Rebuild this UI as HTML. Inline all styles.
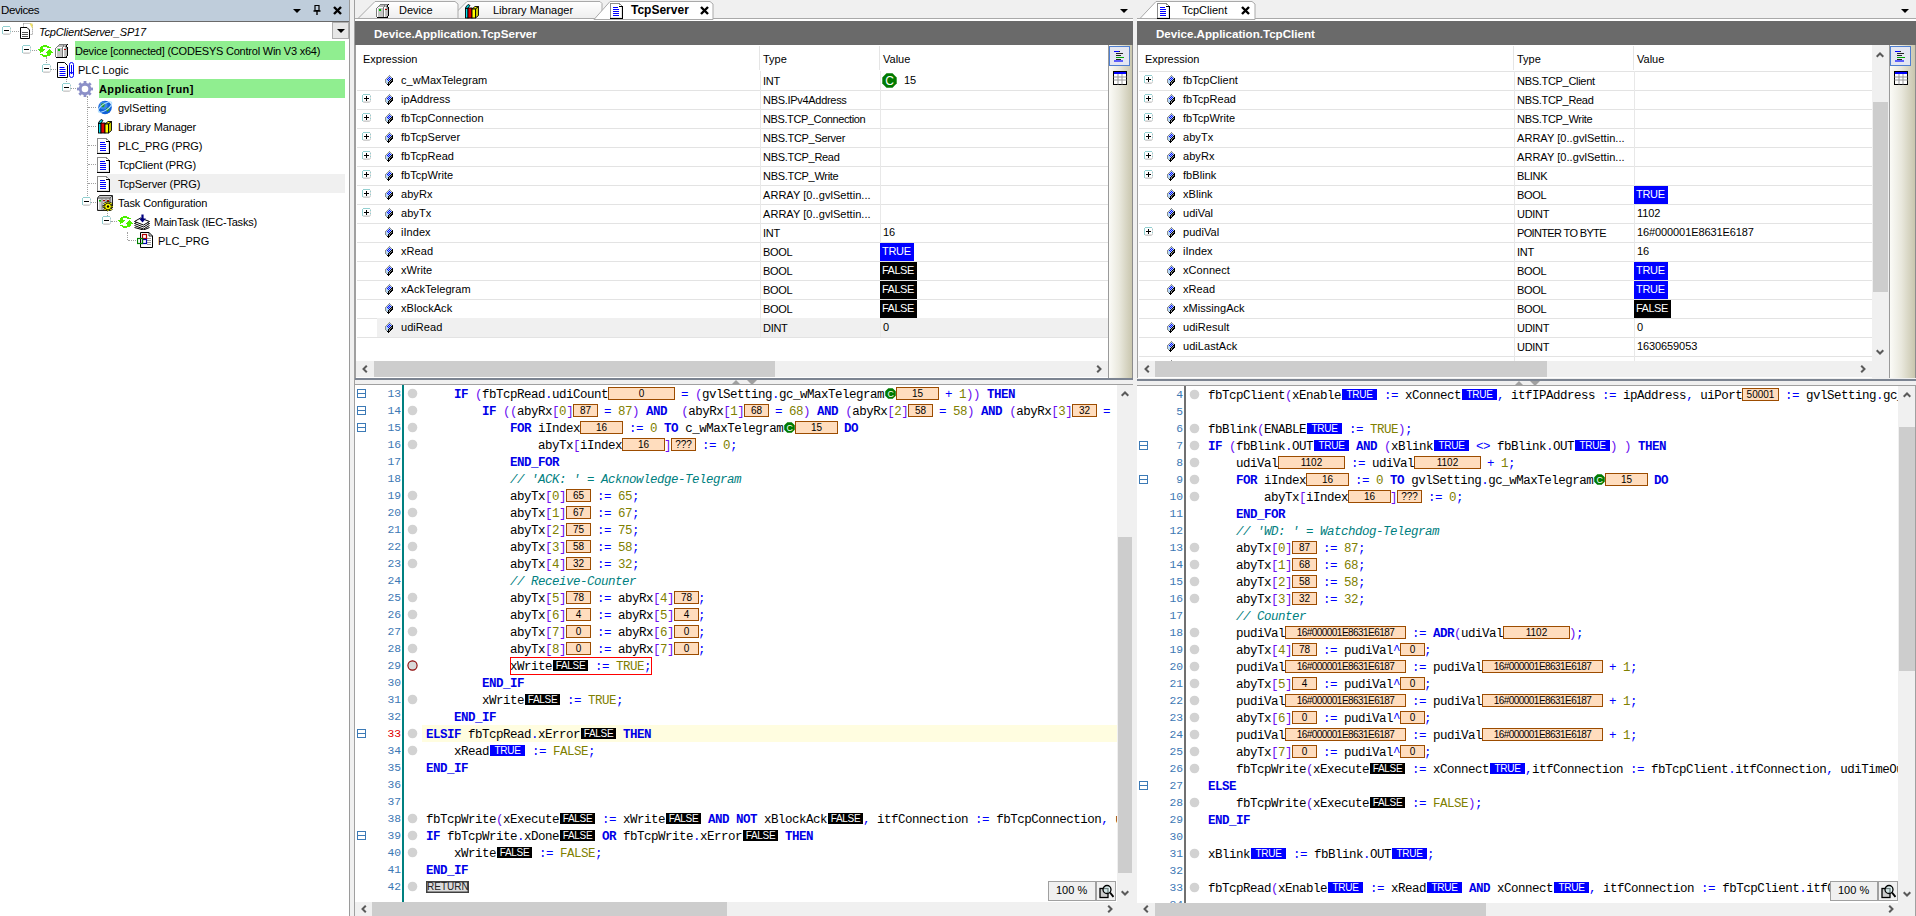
<!DOCTYPE html><html><head><meta charset="utf-8"><style>body{margin:0;width:1916px;height:916px;overflow:hidden;position:relative;background:#F0F0F0;font-family:"Liberation Sans",sans-serif;font-size:11px;color:#000}
div{position:absolute;box-sizing:border-box}
.t{white-space:pre}
.c{white-space:pre;font-family:"Liberation Mono",monospace;font-size:12.5px;letter-spacing:-0.5px;line-height:17px;height:17px;padding-top:2px}
.ob{height:13px;background:#FFDDBE;border:1px solid #9C4C00;font-size:10px;line-height:11px;text-align:center;color:#000;white-space:pre;overflow:hidden}
.bb{width:35px;height:11px;color:#fff;font-size:10px;line-height:11px;text-align:center;letter-spacing:-0.3px}
</style></head><body><div style="left:0px;top:0px;width:349px;height:21px;background:#BFCDDB"></div>
<div class="t" style="left:1px;top:0px;height:21px;line-height:21px;font-size:11.5px;letter-spacing:-0.4px;color:#000">Devices</div>
<svg style="position:absolute;left:293px;top:9px;" width="8" height="5" viewBox="0 0 8 5"><path d="M0 0 H8 L4.0 4 Z" fill="#000"/></svg>
<svg style="position:absolute;left:313px;top:5px;" width="8" height="10" viewBox="0 0 8 10"><path d="M2 0.5 H6 V5.5 H2 Z" fill="none" stroke="#000" stroke-width="1.2"/><path d="M0.5 6 H7.5 M4 6 V10" stroke="#000" stroke-width="1.4"/></svg>
<svg style="position:absolute;left:333px;top:6px;" width="9" height="9" viewBox="0 0 9 9"><path d="M1 1 L8 8 M8 1 L1 8" stroke="#000" stroke-width="2.4"/></svg>
<div style="left:0px;top:21px;width:350px;height:1px;background:#6A6A6A"></div>
<div style="left:0px;top:22px;width:349px;height:894px;background:#fff"></div>
<div style="left:349px;top:0px;width:1px;height:916px;background:#9A9A9A"></div>
<div style="left:332px;top:22px;width:17px;height:17px;background:#E6E6E6;border:1px solid #ADADAD"></div>
<svg style="position:absolute;left:337px;top:29px;" width="8" height="5" viewBox="0 0 8 5"><path d="M0 0 H8 L4.0 4 Z" fill="#000"/></svg>
<div style="left:10px;top:31px;width:9px;height:1px;border-top:1px dotted #A0A0A0"></div>
<div style="left:26px;top:36px;width:1px;height:0px;"></div>
<div style="left:30px;top:50px;width:7px;height:1px;border-top:1px dotted #A0A0A0"></div>
<div style="left:46px;top:57px;width:1px;height:8px;border-left:1px dotted #A0A0A0"></div>
<div style="left:50px;top:69px;width:6px;height:1px;border-top:1px dotted #A0A0A0"></div>
<div style="left:66px;top:76px;width:1px;height:8px;border-left:1px dotted #A0A0A0"></div>
<div style="left:70px;top:88px;width:6px;height:1px;border-top:1px dotted #A0A0A0"></div>
<div style="left:87px;top:96px;width:1px;height:102px;border-left:1px dotted #A0A0A0"></div>
<div style="left:88px;top:107px;width:8px;height:1px;border-top:1px dotted #A0A0A0"></div>
<div style="left:88px;top:126px;width:8px;height:1px;border-top:1px dotted #A0A0A0"></div>
<div style="left:88px;top:145px;width:8px;height:1px;border-top:1px dotted #A0A0A0"></div>
<div style="left:88px;top:164px;width:8px;height:1px;border-top:1px dotted #A0A0A0"></div>
<div style="left:88px;top:183px;width:8px;height:1px;border-top:1px dotted #A0A0A0"></div>
<div style="left:91px;top:202px;width:5px;height:1px;border-top:1px dotted #A0A0A0"></div>
<div style="left:107px;top:210px;width:1px;height:6px;border-left:1px dotted #A0A0A0"></div>
<div style="left:111px;top:221px;width:6px;height:1px;border-top:1px dotted #A0A0A0"></div>
<div style="left:127px;top:232px;width:1px;height:8px;border-left:1px dotted #A0A0A0"></div>
<div style="left:128px;top:240px;width:8px;height:1px;border-top:1px dotted #A0A0A0"></div>
<svg style="position:absolute;left:2px;top:26px;shape-rendering:crispEdges" width="9" height="9" viewBox="0 0 9 9"><rect x="1" y="0" width="7" height="1" fill="#92CFD0"/><rect x="0" y="1" width="1" height="1" fill="#92CFD0"/><rect x="1" y="1" width="7" height="1" fill="#FFFFFF"/><rect x="8" y="1" width="1" height="1" fill="#DADADA"/><rect x="0" y="2" width="1" height="1" fill="#92CFD0"/><rect x="1" y="2" width="7" height="1" fill="#FFFFFF"/><rect x="8" y="2" width="1" height="1" fill="#92CFD0"/><rect x="0" y="3" width="1" height="1" fill="#92CFD0"/><rect x="1" y="3" width="7" height="1" fill="#FFFFFF"/><rect x="8" y="3" width="1" height="1" fill="#DADADA"/><rect x="0" y="4" width="1" height="1" fill="#92CFD0"/><rect x="1" y="4" width="7" height="1" fill="#FFFFFF"/><rect x="8" y="4" width="1" height="1" fill="#DADADA"/><rect x="0" y="5" width="1" height="1" fill="#92CFD0"/><rect x="1" y="5" width="7" height="1" fill="#FFFFFF"/><rect x="8" y="5" width="1" height="1" fill="#92CFD0"/><rect x="0" y="6" width="1" height="1" fill="#92CFD0"/><rect x="1" y="6" width="7" height="1" fill="#FFFFFF"/><rect x="8" y="6" width="1" height="1" fill="#DADADA"/><rect x="0" y="7" width="1" height="1" fill="#92CFD0"/><rect x="1" y="7" width="7" height="1" fill="#E2E2E2"/><rect x="8" y="7" width="1" height="1" fill="#DADADA"/><rect x="1" y="8" width="1" height="1" fill="#DADADA"/><rect x="2" y="8" width="5" height="1" fill="#CFCFCF"/><rect x="7" y="8" width="1" height="1" fill="#DADADA"/></svg>
<svg style="position:absolute;left:2px;top:26px;shape-rendering:crispEdges" width="9" height="9" viewBox="0 0 9 9"><path d="M2 4.5 H7" stroke="#000" stroke-width="1"/></svg>
<svg style="position:absolute;left:20px;top:23px;" width="13" height="16" viewBox="0 0 13 16"><path d="M3.5 0.5 H11 L12.5 2 V11.5 H3.5 Z" fill="#fff" stroke="#888" stroke-dasharray="1 1"/><path d="M9.5 0.5 L12.5 0.5 L12.5 6 Z" fill="#F0E060"/><path d="M0.5 4.5 H7 L9.5 7 V15.5 H0.5 Z" fill="#fff" stroke="#000"/><path d="M2 9.5h6M2 11.5h6M2 13.5h6" stroke="#555"/></svg>
<div class="t" style="left:39px;top:23px;height:19px;line-height:19px;font-style:italic;letter-spacing:-0.2px">TcpClientServer_SP17</div>
<svg style="position:absolute;left:22px;top:45px;shape-rendering:crispEdges" width="9" height="9" viewBox="0 0 9 9"><rect x="1" y="0" width="7" height="1" fill="#92CFD0"/><rect x="0" y="1" width="1" height="1" fill="#92CFD0"/><rect x="1" y="1" width="7" height="1" fill="#FFFFFF"/><rect x="8" y="1" width="1" height="1" fill="#DADADA"/><rect x="0" y="2" width="1" height="1" fill="#92CFD0"/><rect x="1" y="2" width="7" height="1" fill="#FFFFFF"/><rect x="8" y="2" width="1" height="1" fill="#92CFD0"/><rect x="0" y="3" width="1" height="1" fill="#92CFD0"/><rect x="1" y="3" width="7" height="1" fill="#FFFFFF"/><rect x="8" y="3" width="1" height="1" fill="#DADADA"/><rect x="0" y="4" width="1" height="1" fill="#92CFD0"/><rect x="1" y="4" width="7" height="1" fill="#FFFFFF"/><rect x="8" y="4" width="1" height="1" fill="#DADADA"/><rect x="0" y="5" width="1" height="1" fill="#92CFD0"/><rect x="1" y="5" width="7" height="1" fill="#FFFFFF"/><rect x="8" y="5" width="1" height="1" fill="#92CFD0"/><rect x="0" y="6" width="1" height="1" fill="#92CFD0"/><rect x="1" y="6" width="7" height="1" fill="#FFFFFF"/><rect x="8" y="6" width="1" height="1" fill="#DADADA"/><rect x="0" y="7" width="1" height="1" fill="#92CFD0"/><rect x="1" y="7" width="7" height="1" fill="#E2E2E2"/><rect x="8" y="7" width="1" height="1" fill="#DADADA"/><rect x="1" y="8" width="1" height="1" fill="#DADADA"/><rect x="2" y="8" width="5" height="1" fill="#CFCFCF"/><rect x="7" y="8" width="1" height="1" fill="#DADADA"/></svg>
<svg style="position:absolute;left:22px;top:45px;shape-rendering:crispEdges" width="9" height="9" viewBox="0 0 9 9"><path d="M2 4.5 H7" stroke="#000" stroke-width="1"/></svg>
<svg style="position:absolute;left:38px;top:45px;shape-rendering:crispEdges" width="15" height="12" viewBox="0 0 15 12"><rect x="5" y="0" width="4" height="1" fill="#4CF000"/><rect x="3" y="1" width="8" height="1" fill="#4CF000"/><rect x="2" y="2" width="3" height="1" fill="#4CF000"/><rect x="9" y="2" width="4" height="1" fill="#4CF000"/><rect x="2" y="3" width="3" height="1" fill="#4CF000"/><rect x="0" y="4" width="7" height="1" fill="#4CF000"/><rect x="11" y="4" width="1" height="1" fill="#4CF000"/><rect x="1" y="5" width="5" height="1" fill="#4CF000"/><rect x="10" y="5" width="3" height="1" fill="#4CF000"/><rect x="2" y="6" width="3" height="1" fill="#4CF000"/><rect x="9" y="6" width="5" height="1" fill="#4CF000"/><rect x="2" y="7" width="1" height="1" fill="#4CF000"/><rect x="8" y="7" width="7" height="1" fill="#4CF000"/><rect x="9" y="8" width="4" height="1" fill="#4CF000"/><rect x="2" y="9" width="3" height="1" fill="#4CF000"/><rect x="9" y="9" width="4" height="1" fill="#4CF000"/><rect x="4" y="10" width="8" height="1" fill="#4CF000"/><rect x="5" y="11" width="4" height="1" fill="#4CF000"/></svg>
<svg style="position:absolute;left:55px;top:44px;shape-rendering:crispEdges" width="13" height="14" viewBox="0 0 13 14"><rect x="4" y="0" width="8" height="1" fill="#7A7A7A"/><rect x="12" y="0" width="1" height="1" fill="#000000"/><rect x="3" y="1" width="1" height="1" fill="#7A7A7A"/><rect x="4" y="1" width="4" height="1" fill="#B8B8B8"/><rect x="8" y="1" width="1" height="1" fill="#7A7A7A"/><rect x="9" y="1" width="2" height="1" fill="#B8B8B8"/><rect x="11" y="1" width="1" height="1" fill="#000000"/><rect x="2" y="2" width="1" height="1" fill="#7A7A7A"/><rect x="3" y="2" width="5" height="1" fill="#B8B8B8"/><rect x="8" y="2" width="1" height="1" fill="#7A7A7A"/><rect x="9" y="2" width="1" height="1" fill="#B8B8B8"/><rect x="10" y="2" width="1" height="1" fill="#7A7A7A"/><rect x="11" y="2" width="1" height="1" fill="#000000"/><rect x="1" y="3" width="1" height="1" fill="#7A7A7A"/><rect x="2" y="3" width="5" height="1" fill="#FFFFFF"/><rect x="7" y="3" width="1" height="1" fill="#7A7A7A"/><rect x="8" y="3" width="2" height="1" fill="#FFFFFF"/><rect x="10" y="3" width="1" height="1" fill="#B8B8B8"/><rect x="11" y="3" width="1" height="1" fill="#7A7A7A"/><rect x="12" y="3" width="1" height="1" fill="#000000"/><rect x="0" y="4" width="1" height="1" fill="#7A7A7A"/><rect x="1" y="4" width="1" height="1" fill="#FFFFFF"/><rect x="2" y="4" width="5" height="1" fill="#C4C4C4"/><rect x="7" y="4" width="1" height="1" fill="#7A7A7A"/><rect x="8" y="4" width="1" height="1" fill="#FFFFFF"/><rect x="9" y="4" width="1" height="1" fill="#C4C4C4"/><rect x="10" y="4" width="1" height="1" fill="#B8B8B8"/><rect x="11" y="4" width="1" height="1" fill="#7A7A7A"/><rect x="12" y="4" width="1" height="1" fill="#000000"/><rect x="0" y="5" width="1" height="1" fill="#7A7A7A"/><rect x="1" y="5" width="1" height="1" fill="#FFFFFF"/><rect x="2" y="5" width="1" height="1" fill="#C4C4C4"/><rect x="3" y="5" width="2" height="1" fill="#00C000"/><rect x="5" y="5" width="2" height="1" fill="#C4C4C4"/><rect x="7" y="5" width="1" height="1" fill="#7A7A7A"/><rect x="8" y="5" width="1" height="1" fill="#FFFFFF"/><rect x="9" y="5" width="2" height="1" fill="#B00000"/><rect x="11" y="5" width="1" height="1" fill="#B8B8B8"/><rect x="12" y="5" width="1" height="1" fill="#000000"/><rect x="0" y="6" width="1" height="1" fill="#7A7A7A"/><rect x="1" y="6" width="1" height="1" fill="#FFFFFF"/><rect x="2" y="6" width="1" height="1" fill="#C4C4C4"/><rect x="3" y="6" width="2" height="1" fill="#00C000"/><rect x="5" y="6" width="2" height="1" fill="#C4C4C4"/><rect x="7" y="6" width="1" height="1" fill="#7A7A7A"/><rect x="8" y="6" width="1" height="1" fill="#FFFFFF"/><rect x="9" y="6" width="1" height="1" fill="#C4C4C4"/><rect x="10" y="6" width="2" height="1" fill="#B8B8B8"/><rect x="12" y="6" width="1" height="1" fill="#000000"/><rect x="0" y="7" width="1" height="1" fill="#7A7A7A"/><rect x="1" y="7" width="1" height="1" fill="#FFFFFF"/><rect x="2" y="7" width="5" height="1" fill="#C4C4C4"/><rect x="7" y="7" width="1" height="1" fill="#7A7A7A"/><rect x="8" y="7" width="1" height="1" fill="#FFFFFF"/><rect x="9" y="7" width="1" height="1" fill="#C4C4C4"/><rect x="10" y="7" width="2" height="1" fill="#B8B8B8"/><rect x="12" y="7" width="1" height="1" fill="#000000"/><rect x="0" y="8" width="1" height="1" fill="#7A7A7A"/><rect x="1" y="8" width="1" height="1" fill="#FFFFFF"/><rect x="2" y="8" width="5" height="1" fill="#C4C4C4"/><rect x="7" y="8" width="1" height="1" fill="#7A7A7A"/><rect x="8" y="8" width="1" height="1" fill="#FFFFFF"/><rect x="9" y="8" width="1" height="1" fill="#C4C4C4"/><rect x="10" y="8" width="2" height="1" fill="#B8B8B8"/><rect x="12" y="8" width="1" height="1" fill="#000000"/><rect x="0" y="9" width="1" height="1" fill="#7A7A7A"/><rect x="1" y="9" width="1" height="1" fill="#FFFFFF"/><rect x="2" y="9" width="5" height="1" fill="#C4C4C4"/><rect x="7" y="9" width="1" height="1" fill="#7A7A7A"/><rect x="8" y="9" width="1" height="1" fill="#FFFFFF"/><rect x="9" y="9" width="1" height="1" fill="#C4C4C4"/><rect x="10" y="9" width="2" height="1" fill="#B8B8B8"/><rect x="12" y="9" width="1" height="1" fill="#000000"/><rect x="0" y="10" width="1" height="1" fill="#7A7A7A"/><rect x="1" y="10" width="1" height="1" fill="#FFFFFF"/><rect x="2" y="10" width="5" height="1" fill="#C4C4C4"/><rect x="7" y="10" width="1" height="1" fill="#7A7A7A"/><rect x="8" y="10" width="1" height="1" fill="#FFFFFF"/><rect x="9" y="10" width="1" height="1" fill="#C4C4C4"/><rect x="10" y="10" width="2" height="1" fill="#B8B8B8"/><rect x="12" y="10" width="1" height="1" fill="#000000"/><rect x="0" y="11" width="1" height="1" fill="#7A7A7A"/><rect x="1" y="11" width="1" height="1" fill="#FFFFFF"/><rect x="2" y="11" width="5" height="1" fill="#C4C4C4"/><rect x="7" y="11" width="1" height="1" fill="#7A7A7A"/><rect x="8" y="11" width="1" height="1" fill="#FFFFFF"/><rect x="9" y="11" width="1" height="1" fill="#C4C4C4"/><rect x="10" y="11" width="2" height="1" fill="#B8B8B8"/><rect x="12" y="11" width="1" height="1" fill="#000000"/><rect x="0" y="12" width="1" height="1" fill="#7A7A7A"/><rect x="1" y="12" width="1" height="1" fill="#FFFFFF"/><rect x="2" y="12" width="5" height="1" fill="#C4C4C4"/><rect x="7" y="12" width="1" height="1" fill="#7A7A7A"/><rect x="8" y="12" width="1" height="1" fill="#FFFFFF"/><rect x="9" y="12" width="1" height="1" fill="#C4C4C4"/><rect x="10" y="12" width="1" height="1" fill="#B8B8B8"/><rect x="11" y="12" width="1" height="1" fill="#000000"/><rect x="1" y="13" width="11" height="1" fill="#000000"/></svg>
<div style="left:75px;top:41px;width:270px;height:19px;background:#90EE90"></div>
<div class="t" style="left:75px;top:42px;height:19px;line-height:19px;letter-spacing:-0.22px">Device [connected] (CODESYS Control Win V3 x64)</div>
<svg style="position:absolute;left:42px;top:64px;shape-rendering:crispEdges" width="9" height="9" viewBox="0 0 9 9"><rect x="1" y="0" width="7" height="1" fill="#92CFD0"/><rect x="0" y="1" width="1" height="1" fill="#92CFD0"/><rect x="1" y="1" width="7" height="1" fill="#FFFFFF"/><rect x="8" y="1" width="1" height="1" fill="#DADADA"/><rect x="0" y="2" width="1" height="1" fill="#92CFD0"/><rect x="1" y="2" width="7" height="1" fill="#FFFFFF"/><rect x="8" y="2" width="1" height="1" fill="#92CFD0"/><rect x="0" y="3" width="1" height="1" fill="#92CFD0"/><rect x="1" y="3" width="7" height="1" fill="#FFFFFF"/><rect x="8" y="3" width="1" height="1" fill="#DADADA"/><rect x="0" y="4" width="1" height="1" fill="#92CFD0"/><rect x="1" y="4" width="7" height="1" fill="#FFFFFF"/><rect x="8" y="4" width="1" height="1" fill="#DADADA"/><rect x="0" y="5" width="1" height="1" fill="#92CFD0"/><rect x="1" y="5" width="7" height="1" fill="#FFFFFF"/><rect x="8" y="5" width="1" height="1" fill="#92CFD0"/><rect x="0" y="6" width="1" height="1" fill="#92CFD0"/><rect x="1" y="6" width="7" height="1" fill="#FFFFFF"/><rect x="8" y="6" width="1" height="1" fill="#DADADA"/><rect x="0" y="7" width="1" height="1" fill="#92CFD0"/><rect x="1" y="7" width="7" height="1" fill="#E2E2E2"/><rect x="8" y="7" width="1" height="1" fill="#DADADA"/><rect x="1" y="8" width="1" height="1" fill="#DADADA"/><rect x="2" y="8" width="5" height="1" fill="#CFCFCF"/><rect x="7" y="8" width="1" height="1" fill="#DADADA"/></svg>
<svg style="position:absolute;left:42px;top:64px;shape-rendering:crispEdges" width="9" height="9" viewBox="0 0 9 9"><path d="M2 4.5 H7" stroke="#000" stroke-width="1"/></svg>
<svg style="position:absolute;left:57px;top:62px;" width="17" height="16" viewBox="0 0 17 16"><path d="M0.5 0.5 H7.5 L10.5 3.5 V15.5 H0.5 Z" fill="#fff" stroke="#000"/><path d="M2.5 5.5h5M2.5 7.5h6M2.5 9.5h6M2.5 11.5h6M2.5 13.5h6" stroke="#00f"/><rect x="12.5" y="0.5" width="4" height="15" rx="2" fill="none" stroke="#00f"/><path d="M14.5 3 V12 M13 10 L14.5 12 L16 10" stroke="#00f" fill="none"/></svg>
<div class="t" style="left:78px;top:61px;height:19px;line-height:19px;">PLC Logic</div>
<svg style="position:absolute;left:62px;top:83px;shape-rendering:crispEdges" width="9" height="9" viewBox="0 0 9 9"><rect x="1" y="0" width="7" height="1" fill="#92CFD0"/><rect x="0" y="1" width="1" height="1" fill="#92CFD0"/><rect x="1" y="1" width="7" height="1" fill="#FFFFFF"/><rect x="8" y="1" width="1" height="1" fill="#DADADA"/><rect x="0" y="2" width="1" height="1" fill="#92CFD0"/><rect x="1" y="2" width="7" height="1" fill="#FFFFFF"/><rect x="8" y="2" width="1" height="1" fill="#92CFD0"/><rect x="0" y="3" width="1" height="1" fill="#92CFD0"/><rect x="1" y="3" width="7" height="1" fill="#FFFFFF"/><rect x="8" y="3" width="1" height="1" fill="#DADADA"/><rect x="0" y="4" width="1" height="1" fill="#92CFD0"/><rect x="1" y="4" width="7" height="1" fill="#FFFFFF"/><rect x="8" y="4" width="1" height="1" fill="#DADADA"/><rect x="0" y="5" width="1" height="1" fill="#92CFD0"/><rect x="1" y="5" width="7" height="1" fill="#FFFFFF"/><rect x="8" y="5" width="1" height="1" fill="#92CFD0"/><rect x="0" y="6" width="1" height="1" fill="#92CFD0"/><rect x="1" y="6" width="7" height="1" fill="#FFFFFF"/><rect x="8" y="6" width="1" height="1" fill="#DADADA"/><rect x="0" y="7" width="1" height="1" fill="#92CFD0"/><rect x="1" y="7" width="7" height="1" fill="#E2E2E2"/><rect x="8" y="7" width="1" height="1" fill="#DADADA"/><rect x="1" y="8" width="1" height="1" fill="#DADADA"/><rect x="2" y="8" width="5" height="1" fill="#CFCFCF"/><rect x="7" y="8" width="1" height="1" fill="#DADADA"/></svg>
<svg style="position:absolute;left:62px;top:83px;shape-rendering:crispEdges" width="9" height="9" viewBox="0 0 9 9"><path d="M2 4.5 H7" stroke="#000" stroke-width="1"/></svg>
<svg style="position:absolute;left:77px;top:81px;" width="16" height="16" viewBox="0 0 16 16"><g fill="#8C90C8"><circle cx="8" cy="8" r="6.2"/><rect x="6.6" y="0" width="2.8" height="3.5" transform="rotate(0 8 8)"/><rect x="6.6" y="0" width="2.8" height="3.5" transform="rotate(45 8 8)"/><rect x="6.6" y="0" width="2.8" height="3.5" transform="rotate(90 8 8)"/><rect x="6.6" y="0" width="2.8" height="3.5" transform="rotate(135 8 8)"/><rect x="6.6" y="0" width="2.8" height="3.5" transform="rotate(180 8 8)"/><rect x="6.6" y="0" width="2.8" height="3.5" transform="rotate(225 8 8)"/><rect x="6.6" y="0" width="2.8" height="3.5" transform="rotate(270 8 8)"/><rect x="6.6" y="0" width="2.8" height="3.5" transform="rotate(315 8 8)"/></g><circle cx="8" cy="8" r="3.3" fill="#fff"/></svg>
<div style="left:99px;top:79px;width:246px;height:19px;background:#90EE90"></div>
<div class="t" style="left:99px;top:80px;height:19px;line-height:19px;font-weight:bold;letter-spacing:0.4px">Application [run]</div>
<div style="left:107px;top:174px;width:238px;height:19px;background:#F0F0F0"></div>
<svg style="position:absolute;left:97px;top:99px;" width="16" height="16" viewBox="0 0 16 16"><circle cx="8" cy="8.5" r="6.8" fill="#1060D8"/><circle cx="6.5" cy="6.5" r="4" fill="#4A9AF0" opacity="0.7"/><path d="M4 5 Q6 3.5 8 5 L7 8 Q5 9 4 7 Z M9 9 L12 8.5 L12.5 11 L10 13 Z" fill="#2A9A2A"/><ellipse cx="8" cy="8" rx="8" ry="3.2" fill="none" stroke="#B0E0FF" stroke-width="1" transform="rotate(-35 8 8)"/></svg>
<div class="t" style="left:118px;top:99px;height:19px;line-height:19px;">gvlSetting</div>
<svg style="position:absolute;left:97px;top:118px;" width="16" height="16" viewBox="0 0 16 16"><path d="M1.5 4.5 L4 1.5 L6 2.5 L3.5 5.5 Z" fill="#00E0F0" stroke="#000" stroke-width="0.9"/><rect x="1.5" y="5.5" width="2.5" height="9.5" fill="#00E0F0" stroke="#000" stroke-width="0.9"/><rect x="4" y="5" width="4" height="10" fill="#E00000" stroke="#000" stroke-width="0.9"/><path d="M8 6 L11 3.5 L14.5 3.5 L11.5 6 Z" fill="#FFFF00" stroke="#000" stroke-width="0.9"/><rect x="8" y="6" width="3.5" height="9" fill="#FFFF00" stroke="#000" stroke-width="0.9"/><path d="M11.5 6 L14.5 3.5 L14.5 12.5 L11.5 15 Z" fill="#C8C800" stroke="#000" stroke-width="0.9"/></svg>
<div class="t" style="left:118px;top:118px;height:19px;line-height:19px;letter-spacing:-0.13px">Library Manager</div>
<svg style="position:absolute;left:97px;top:138px;shape-rendering:crispEdges" width="13" height="16" viewBox="0 0 13 16"><rect x="0" y="0" width="10" height="1" fill="#8C8C8C"/><rect x="0" y="1" width="1" height="1" fill="#8C8C8C"/><rect x="1" y="1" width="8" height="1" fill="#FFFFFF"/><rect x="9" y="1" width="2" height="1" fill="#8C8C8C"/><rect x="0" y="2" width="1" height="1" fill="#8C8C8C"/><rect x="1" y="2" width="10" height="1" fill="#FFFFFF"/><rect x="11" y="2" width="1" height="1" fill="#8C8C8C"/><rect x="0" y="3" width="1" height="1" fill="#8C8C8C"/><rect x="1" y="3" width="8" height="1" fill="#FFFFFF"/><rect x="9" y="3" width="4" height="1" fill="#000000"/><rect x="0" y="4" width="1" height="1" fill="#8C8C8C"/><rect x="1" y="4" width="2" height="1" fill="#FFFFFF"/><rect x="3" y="4" width="5" height="1" fill="#0000FF"/><rect x="8" y="4" width="3" height="1" fill="#FFFFFF"/><rect x="11" y="4" width="1" height="1" fill="#E4E4E4"/><rect x="12" y="4" width="1" height="1" fill="#000000"/><rect x="0" y="5" width="1" height="1" fill="#8C8C8C"/><rect x="1" y="5" width="10" height="1" fill="#FFFFFF"/><rect x="11" y="5" width="1" height="1" fill="#E4E4E4"/><rect x="12" y="5" width="1" height="1" fill="#000000"/><rect x="0" y="6" width="1" height="1" fill="#8C8C8C"/><rect x="1" y="6" width="2" height="1" fill="#FFFFFF"/><rect x="3" y="6" width="6" height="1" fill="#0000FF"/><rect x="9" y="6" width="2" height="1" fill="#FFFFFF"/><rect x="11" y="6" width="1" height="1" fill="#E4E4E4"/><rect x="12" y="6" width="1" height="1" fill="#000000"/><rect x="0" y="7" width="1" height="1" fill="#8C8C8C"/><rect x="1" y="7" width="10" height="1" fill="#FFFFFF"/><rect x="11" y="7" width="1" height="1" fill="#E4E4E4"/><rect x="12" y="7" width="1" height="1" fill="#000000"/><rect x="0" y="8" width="1" height="1" fill="#8C8C8C"/><rect x="1" y="8" width="2" height="1" fill="#FFFFFF"/><rect x="3" y="8" width="6" height="1" fill="#0000FF"/><rect x="9" y="8" width="2" height="1" fill="#FFFFFF"/><rect x="11" y="8" width="1" height="1" fill="#E4E4E4"/><rect x="12" y="8" width="1" height="1" fill="#000000"/><rect x="0" y="9" width="1" height="1" fill="#8C8C8C"/><rect x="1" y="9" width="10" height="1" fill="#FFFFFF"/><rect x="11" y="9" width="1" height="1" fill="#E4E4E4"/><rect x="12" y="9" width="1" height="1" fill="#000000"/><rect x="0" y="10" width="1" height="1" fill="#8C8C8C"/><rect x="1" y="10" width="2" height="1" fill="#FFFFFF"/><rect x="3" y="10" width="6" height="1" fill="#0000FF"/><rect x="9" y="10" width="2" height="1" fill="#FFFFFF"/><rect x="11" y="10" width="1" height="1" fill="#E4E4E4"/><rect x="12" y="10" width="1" height="1" fill="#000000"/><rect x="0" y="11" width="1" height="1" fill="#8C8C8C"/><rect x="1" y="11" width="10" height="1" fill="#FFFFFF"/><rect x="11" y="11" width="1" height="1" fill="#E4E4E4"/><rect x="12" y="11" width="1" height="1" fill="#000000"/><rect x="0" y="12" width="1" height="1" fill="#8C8C8C"/><rect x="1" y="12" width="2" height="1" fill="#FFFFFF"/><rect x="3" y="12" width="6" height="1" fill="#0000FF"/><rect x="9" y="12" width="2" height="1" fill="#FFFFFF"/><rect x="11" y="12" width="1" height="1" fill="#E4E4E4"/><rect x="12" y="12" width="1" height="1" fill="#000000"/><rect x="0" y="13" width="1" height="1" fill="#8C8C8C"/><rect x="1" y="13" width="10" height="1" fill="#FFFFFF"/><rect x="11" y="13" width="1" height="1" fill="#E4E4E4"/><rect x="12" y="13" width="1" height="1" fill="#000000"/><rect x="0" y="14" width="1" height="1" fill="#8C8C8C"/><rect x="1" y="14" width="11" height="1" fill="#E4E4E4"/><rect x="12" y="14" width="1" height="1" fill="#000000"/><rect x="0" y="15" width="13" height="1" fill="#000000"/></svg>
<div class="t" style="left:118px;top:137px;height:19px;line-height:19px;letter-spacing:-0.1px">PLC_PRG (PRG)</div>
<svg style="position:absolute;left:97px;top:157px;shape-rendering:crispEdges" width="13" height="16" viewBox="0 0 13 16"><rect x="0" y="0" width="10" height="1" fill="#8C8C8C"/><rect x="0" y="1" width="1" height="1" fill="#8C8C8C"/><rect x="1" y="1" width="8" height="1" fill="#FFFFFF"/><rect x="9" y="1" width="2" height="1" fill="#8C8C8C"/><rect x="0" y="2" width="1" height="1" fill="#8C8C8C"/><rect x="1" y="2" width="10" height="1" fill="#FFFFFF"/><rect x="11" y="2" width="1" height="1" fill="#8C8C8C"/><rect x="0" y="3" width="1" height="1" fill="#8C8C8C"/><rect x="1" y="3" width="8" height="1" fill="#FFFFFF"/><rect x="9" y="3" width="4" height="1" fill="#000000"/><rect x="0" y="4" width="1" height="1" fill="#8C8C8C"/><rect x="1" y="4" width="2" height="1" fill="#FFFFFF"/><rect x="3" y="4" width="5" height="1" fill="#0000FF"/><rect x="8" y="4" width="3" height="1" fill="#FFFFFF"/><rect x="11" y="4" width="1" height="1" fill="#E4E4E4"/><rect x="12" y="4" width="1" height="1" fill="#000000"/><rect x="0" y="5" width="1" height="1" fill="#8C8C8C"/><rect x="1" y="5" width="10" height="1" fill="#FFFFFF"/><rect x="11" y="5" width="1" height="1" fill="#E4E4E4"/><rect x="12" y="5" width="1" height="1" fill="#000000"/><rect x="0" y="6" width="1" height="1" fill="#8C8C8C"/><rect x="1" y="6" width="2" height="1" fill="#FFFFFF"/><rect x="3" y="6" width="6" height="1" fill="#0000FF"/><rect x="9" y="6" width="2" height="1" fill="#FFFFFF"/><rect x="11" y="6" width="1" height="1" fill="#E4E4E4"/><rect x="12" y="6" width="1" height="1" fill="#000000"/><rect x="0" y="7" width="1" height="1" fill="#8C8C8C"/><rect x="1" y="7" width="10" height="1" fill="#FFFFFF"/><rect x="11" y="7" width="1" height="1" fill="#E4E4E4"/><rect x="12" y="7" width="1" height="1" fill="#000000"/><rect x="0" y="8" width="1" height="1" fill="#8C8C8C"/><rect x="1" y="8" width="2" height="1" fill="#FFFFFF"/><rect x="3" y="8" width="6" height="1" fill="#0000FF"/><rect x="9" y="8" width="2" height="1" fill="#FFFFFF"/><rect x="11" y="8" width="1" height="1" fill="#E4E4E4"/><rect x="12" y="8" width="1" height="1" fill="#000000"/><rect x="0" y="9" width="1" height="1" fill="#8C8C8C"/><rect x="1" y="9" width="10" height="1" fill="#FFFFFF"/><rect x="11" y="9" width="1" height="1" fill="#E4E4E4"/><rect x="12" y="9" width="1" height="1" fill="#000000"/><rect x="0" y="10" width="1" height="1" fill="#8C8C8C"/><rect x="1" y="10" width="2" height="1" fill="#FFFFFF"/><rect x="3" y="10" width="6" height="1" fill="#0000FF"/><rect x="9" y="10" width="2" height="1" fill="#FFFFFF"/><rect x="11" y="10" width="1" height="1" fill="#E4E4E4"/><rect x="12" y="10" width="1" height="1" fill="#000000"/><rect x="0" y="11" width="1" height="1" fill="#8C8C8C"/><rect x="1" y="11" width="10" height="1" fill="#FFFFFF"/><rect x="11" y="11" width="1" height="1" fill="#E4E4E4"/><rect x="12" y="11" width="1" height="1" fill="#000000"/><rect x="0" y="12" width="1" height="1" fill="#8C8C8C"/><rect x="1" y="12" width="2" height="1" fill="#FFFFFF"/><rect x="3" y="12" width="6" height="1" fill="#0000FF"/><rect x="9" y="12" width="2" height="1" fill="#FFFFFF"/><rect x="11" y="12" width="1" height="1" fill="#E4E4E4"/><rect x="12" y="12" width="1" height="1" fill="#000000"/><rect x="0" y="13" width="1" height="1" fill="#8C8C8C"/><rect x="1" y="13" width="10" height="1" fill="#FFFFFF"/><rect x="11" y="13" width="1" height="1" fill="#E4E4E4"/><rect x="12" y="13" width="1" height="1" fill="#000000"/><rect x="0" y="14" width="1" height="1" fill="#8C8C8C"/><rect x="1" y="14" width="11" height="1" fill="#E4E4E4"/><rect x="12" y="14" width="1" height="1" fill="#000000"/><rect x="0" y="15" width="13" height="1" fill="#000000"/></svg>
<div class="t" style="left:118px;top:156px;height:19px;line-height:19px;letter-spacing:-0.1px">TcpClient (PRG)</div>
<svg style="position:absolute;left:97px;top:176px;shape-rendering:crispEdges" width="13" height="16" viewBox="0 0 13 16"><rect x="0" y="0" width="10" height="1" fill="#8C8C8C"/><rect x="0" y="1" width="1" height="1" fill="#8C8C8C"/><rect x="1" y="1" width="8" height="1" fill="#FFFFFF"/><rect x="9" y="1" width="2" height="1" fill="#8C8C8C"/><rect x="0" y="2" width="1" height="1" fill="#8C8C8C"/><rect x="1" y="2" width="10" height="1" fill="#FFFFFF"/><rect x="11" y="2" width="1" height="1" fill="#8C8C8C"/><rect x="0" y="3" width="1" height="1" fill="#8C8C8C"/><rect x="1" y="3" width="8" height="1" fill="#FFFFFF"/><rect x="9" y="3" width="4" height="1" fill="#000000"/><rect x="0" y="4" width="1" height="1" fill="#8C8C8C"/><rect x="1" y="4" width="2" height="1" fill="#FFFFFF"/><rect x="3" y="4" width="5" height="1" fill="#0000FF"/><rect x="8" y="4" width="3" height="1" fill="#FFFFFF"/><rect x="11" y="4" width="1" height="1" fill="#E4E4E4"/><rect x="12" y="4" width="1" height="1" fill="#000000"/><rect x="0" y="5" width="1" height="1" fill="#8C8C8C"/><rect x="1" y="5" width="10" height="1" fill="#FFFFFF"/><rect x="11" y="5" width="1" height="1" fill="#E4E4E4"/><rect x="12" y="5" width="1" height="1" fill="#000000"/><rect x="0" y="6" width="1" height="1" fill="#8C8C8C"/><rect x="1" y="6" width="2" height="1" fill="#FFFFFF"/><rect x="3" y="6" width="6" height="1" fill="#0000FF"/><rect x="9" y="6" width="2" height="1" fill="#FFFFFF"/><rect x="11" y="6" width="1" height="1" fill="#E4E4E4"/><rect x="12" y="6" width="1" height="1" fill="#000000"/><rect x="0" y="7" width="1" height="1" fill="#8C8C8C"/><rect x="1" y="7" width="10" height="1" fill="#FFFFFF"/><rect x="11" y="7" width="1" height="1" fill="#E4E4E4"/><rect x="12" y="7" width="1" height="1" fill="#000000"/><rect x="0" y="8" width="1" height="1" fill="#8C8C8C"/><rect x="1" y="8" width="2" height="1" fill="#FFFFFF"/><rect x="3" y="8" width="6" height="1" fill="#0000FF"/><rect x="9" y="8" width="2" height="1" fill="#FFFFFF"/><rect x="11" y="8" width="1" height="1" fill="#E4E4E4"/><rect x="12" y="8" width="1" height="1" fill="#000000"/><rect x="0" y="9" width="1" height="1" fill="#8C8C8C"/><rect x="1" y="9" width="10" height="1" fill="#FFFFFF"/><rect x="11" y="9" width="1" height="1" fill="#E4E4E4"/><rect x="12" y="9" width="1" height="1" fill="#000000"/><rect x="0" y="10" width="1" height="1" fill="#8C8C8C"/><rect x="1" y="10" width="2" height="1" fill="#FFFFFF"/><rect x="3" y="10" width="6" height="1" fill="#0000FF"/><rect x="9" y="10" width="2" height="1" fill="#FFFFFF"/><rect x="11" y="10" width="1" height="1" fill="#E4E4E4"/><rect x="12" y="10" width="1" height="1" fill="#000000"/><rect x="0" y="11" width="1" height="1" fill="#8C8C8C"/><rect x="1" y="11" width="10" height="1" fill="#FFFFFF"/><rect x="11" y="11" width="1" height="1" fill="#E4E4E4"/><rect x="12" y="11" width="1" height="1" fill="#000000"/><rect x="0" y="12" width="1" height="1" fill="#8C8C8C"/><rect x="1" y="12" width="2" height="1" fill="#FFFFFF"/><rect x="3" y="12" width="6" height="1" fill="#0000FF"/><rect x="9" y="12" width="2" height="1" fill="#FFFFFF"/><rect x="11" y="12" width="1" height="1" fill="#E4E4E4"/><rect x="12" y="12" width="1" height="1" fill="#000000"/><rect x="0" y="13" width="1" height="1" fill="#8C8C8C"/><rect x="1" y="13" width="10" height="1" fill="#FFFFFF"/><rect x="11" y="13" width="1" height="1" fill="#E4E4E4"/><rect x="12" y="13" width="1" height="1" fill="#000000"/><rect x="0" y="14" width="1" height="1" fill="#8C8C8C"/><rect x="1" y="14" width="11" height="1" fill="#E4E4E4"/><rect x="12" y="14" width="1" height="1" fill="#000000"/><rect x="0" y="15" width="13" height="1" fill="#000000"/></svg>
<div class="t" style="left:118px;top:175px;height:19px;line-height:19px;letter-spacing:-0.1px">TcpServer (PRG)</div>
<svg style="position:absolute;left:82px;top:197px;shape-rendering:crispEdges" width="9" height="9" viewBox="0 0 9 9"><rect x="1" y="0" width="7" height="1" fill="#92CFD0"/><rect x="0" y="1" width="1" height="1" fill="#92CFD0"/><rect x="1" y="1" width="7" height="1" fill="#FFFFFF"/><rect x="8" y="1" width="1" height="1" fill="#DADADA"/><rect x="0" y="2" width="1" height="1" fill="#92CFD0"/><rect x="1" y="2" width="7" height="1" fill="#FFFFFF"/><rect x="8" y="2" width="1" height="1" fill="#92CFD0"/><rect x="0" y="3" width="1" height="1" fill="#92CFD0"/><rect x="1" y="3" width="7" height="1" fill="#FFFFFF"/><rect x="8" y="3" width="1" height="1" fill="#DADADA"/><rect x="0" y="4" width="1" height="1" fill="#92CFD0"/><rect x="1" y="4" width="7" height="1" fill="#FFFFFF"/><rect x="8" y="4" width="1" height="1" fill="#DADADA"/><rect x="0" y="5" width="1" height="1" fill="#92CFD0"/><rect x="1" y="5" width="7" height="1" fill="#FFFFFF"/><rect x="8" y="5" width="1" height="1" fill="#92CFD0"/><rect x="0" y="6" width="1" height="1" fill="#92CFD0"/><rect x="1" y="6" width="7" height="1" fill="#FFFFFF"/><rect x="8" y="6" width="1" height="1" fill="#DADADA"/><rect x="0" y="7" width="1" height="1" fill="#92CFD0"/><rect x="1" y="7" width="7" height="1" fill="#E2E2E2"/><rect x="8" y="7" width="1" height="1" fill="#DADADA"/><rect x="1" y="8" width="1" height="1" fill="#DADADA"/><rect x="2" y="8" width="5" height="1" fill="#CFCFCF"/><rect x="7" y="8" width="1" height="1" fill="#DADADA"/></svg>
<svg style="position:absolute;left:82px;top:197px;shape-rendering:crispEdges" width="9" height="9" viewBox="0 0 9 9"><path d="M2 4.5 H7" stroke="#000" stroke-width="1"/></svg>
<svg style="position:absolute;left:97px;top:195px;" width="16" height="16" viewBox="0 0 16 16"><path d="M0.5 3 L2.5 0.5 H15.5 V12.5 L13 15.5 H0.5 Z" fill="#D0D0D0" stroke="#222" stroke-width="1"/><path d="M0.5 3 H13 L15.5 0.5 M13 3 V15.5" fill="none" stroke="#555" stroke-width="1"/><path d="M5 3 V15 M9 3 V15" stroke="#888" stroke-width="1"/><path d="M1.5 4 V14" stroke="#fff"/><rect x="2" y="5" width="2" height="1.5" fill="#00C000"/><rect x="6" y="5" width="2" height="1.2" fill="#B00000"/><rect x="10" y="5" width="2" height="1.2" fill="#B00000"/><g transform="translate(11 11.5)"><g fill="#FFFF00" stroke="#000" stroke-width="0.7"><rect x="-1" y="-5" width="2" height="2.5" transform="rotate(0)"/><rect x="-1" y="-5" width="2" height="2.5" transform="rotate(45)"/><rect x="-1" y="-5" width="2" height="2.5" transform="rotate(90)"/><rect x="-1" y="-5" width="2" height="2.5" transform="rotate(135)"/><rect x="-1" y="-5" width="2" height="2.5" transform="rotate(180)"/><rect x="-1" y="-5" width="2" height="2.5" transform="rotate(225)"/><rect x="-1" y="-5" width="2" height="2.5" transform="rotate(270)"/><rect x="-1" y="-5" width="2" height="2.5" transform="rotate(315)"/><circle r="3.3"/></g><circle r="1.2" fill="#000"/></g></svg>
<div class="t" style="left:118px;top:194px;height:19px;line-height:19px;letter-spacing:-0.1px">Task Configuration</div>
<svg style="position:absolute;left:102px;top:216px;shape-rendering:crispEdges" width="9" height="9" viewBox="0 0 9 9"><rect x="1" y="0" width="7" height="1" fill="#92CFD0"/><rect x="0" y="1" width="1" height="1" fill="#92CFD0"/><rect x="1" y="1" width="7" height="1" fill="#FFFFFF"/><rect x="8" y="1" width="1" height="1" fill="#DADADA"/><rect x="0" y="2" width="1" height="1" fill="#92CFD0"/><rect x="1" y="2" width="7" height="1" fill="#FFFFFF"/><rect x="8" y="2" width="1" height="1" fill="#92CFD0"/><rect x="0" y="3" width="1" height="1" fill="#92CFD0"/><rect x="1" y="3" width="7" height="1" fill="#FFFFFF"/><rect x="8" y="3" width="1" height="1" fill="#DADADA"/><rect x="0" y="4" width="1" height="1" fill="#92CFD0"/><rect x="1" y="4" width="7" height="1" fill="#FFFFFF"/><rect x="8" y="4" width="1" height="1" fill="#DADADA"/><rect x="0" y="5" width="1" height="1" fill="#92CFD0"/><rect x="1" y="5" width="7" height="1" fill="#FFFFFF"/><rect x="8" y="5" width="1" height="1" fill="#92CFD0"/><rect x="0" y="6" width="1" height="1" fill="#92CFD0"/><rect x="1" y="6" width="7" height="1" fill="#FFFFFF"/><rect x="8" y="6" width="1" height="1" fill="#DADADA"/><rect x="0" y="7" width="1" height="1" fill="#92CFD0"/><rect x="1" y="7" width="7" height="1" fill="#E2E2E2"/><rect x="8" y="7" width="1" height="1" fill="#DADADA"/><rect x="1" y="8" width="1" height="1" fill="#DADADA"/><rect x="2" y="8" width="5" height="1" fill="#CFCFCF"/><rect x="7" y="8" width="1" height="1" fill="#DADADA"/></svg>
<svg style="position:absolute;left:102px;top:216px;shape-rendering:crispEdges" width="9" height="9" viewBox="0 0 9 9"><path d="M2 4.5 H7" stroke="#000" stroke-width="1"/></svg>
<svg style="position:absolute;left:118px;top:216px;shape-rendering:crispEdges" width="15" height="12" viewBox="0 0 15 12"><rect x="5" y="0" width="4" height="1" fill="#4CF000"/><rect x="3" y="1" width="8" height="1" fill="#4CF000"/><rect x="2" y="2" width="3" height="1" fill="#4CF000"/><rect x="9" y="2" width="4" height="1" fill="#4CF000"/><rect x="2" y="3" width="3" height="1" fill="#4CF000"/><rect x="0" y="4" width="7" height="1" fill="#4CF000"/><rect x="11" y="4" width="1" height="1" fill="#4CF000"/><rect x="1" y="5" width="5" height="1" fill="#4CF000"/><rect x="10" y="5" width="3" height="1" fill="#4CF000"/><rect x="2" y="6" width="3" height="1" fill="#4CF000"/><rect x="9" y="6" width="5" height="1" fill="#4CF000"/><rect x="2" y="7" width="1" height="1" fill="#4CF000"/><rect x="8" y="7" width="7" height="1" fill="#4CF000"/><rect x="9" y="8" width="4" height="1" fill="#4CF000"/><rect x="2" y="9" width="3" height="1" fill="#4CF000"/><rect x="9" y="9" width="4" height="1" fill="#4CF000"/><rect x="4" y="10" width="8" height="1" fill="#4CF000"/><rect x="5" y="11" width="4" height="1" fill="#4CF000"/></svg>
<svg style="position:absolute;left:134px;top:214px;" width="16" height="16" viewBox="0 0 16 16"><path d="M0.5 9.5 L6.5 6 L15.5 9.5 L9.5 13 Z" fill="#fff" stroke="#000" stroke-width="1"/><path d="M0.5 11.5 L9.5 15 L15.5 11.5" fill="none" stroke="#000" stroke-width="1"/><path d="M0.5 13.5 L9.5 16 L15.5 13.5" fill="none" stroke="#000" stroke-width="1"/><path d="M0.5 7.5 L6.5 4 L15.5 7.5 L9.5 11 Z" fill="#fff" stroke="#000" stroke-width="1"/><path d="M8.5 0.5 V6" stroke="#000080" stroke-width="2.2"/><path d="M5 4.5 H12 L8.5 8.5 Z" fill="#000080"/></svg>
<div class="t" style="left:154px;top:213px;height:19px;line-height:19px;letter-spacing:-0.2px">MainTask (IEC-Tasks)</div>
<svg style="position:absolute;left:137px;top:232px;" width="16" height="16" viewBox="0 0 16 16"><path d="M3.5 0.5 H12 L15.5 4 V15.5 H3.5 Z" fill="#fff" stroke="#000" stroke-width="1"/><path d="M12 0.5 V4 H15.5" fill="none" stroke="#000" stroke-width="0.8"/><path d="M10 6.5h4M10 8.5h4M10 10.5h4M10 12.5h4" stroke="#999" stroke-width="1"/><rect x="5.5" y="2.5" width="4" height="4" fill="none" stroke="#B00000" stroke-width="1.2"/><rect x="5.5" y="7.5" width="4" height="4" fill="none" stroke="#0000B0" stroke-width="1.2"/><rect x="0.5" y="6.5" width="5" height="5" fill="none" stroke="#008000" stroke-width="1.2"/></svg>
<div class="t" style="left:158px;top:232px;height:19px;line-height:19px;">PLC_PRG</div>
<div style="left:350px;top:0px;width:4px;height:916px;background:#F0F0F0"></div>
<div style="left:354px;top:0px;width:1px;height:916px;background:#A0A0A0"></div>
<div style="left:1133px;top:0px;width:4px;height:916px;background:#F0F0F0"></div>
<div style="left:355px;top:0px;width:778px;height:18px;background:#F0F0F0"></div>
<div style="left:355px;top:18px;width:778px;height:1px;background:#A9A9A9"></div>
<div style="left:355px;top:19px;width:778px;height:2px;background:#FFFFFF"></div>
<svg style="position:absolute;left:0px;top:0px;" width="1916" height="20" viewBox="0 0 1916 20"><defs><linearGradient id="g55630" x1="0" y1="0" x2="0" y2="1"><stop offset="0" stop-color="#FFFFFF"/><stop offset="1" stop-color="#EEEEEE"/></linearGradient></defs><polygon points="450,18.5 467,1.5 600,1.5 602,3.5 602,18.5" fill="url(#g55630)" stroke="#A9A9A9" stroke-width="1"/></svg>
<svg style="position:absolute;left:464px;top:3px;" width="16" height="16" viewBox="0 0 16 16"><path d="M1.5 4.5 L4 1.5 L6 2.5 L3.5 5.5 Z" fill="#00E0F0" stroke="#000" stroke-width="0.9"/><rect x="1.5" y="5.5" width="2.5" height="9.5" fill="#00E0F0" stroke="#000" stroke-width="0.9"/><rect x="4" y="5" width="4" height="10" fill="#E00000" stroke="#000" stroke-width="0.9"/><path d="M8 6 L11 3.5 L14.5 3.5 L11.5 6 Z" fill="#FFFF00" stroke="#000" stroke-width="0.9"/><rect x="8" y="6" width="3.5" height="9" fill="#FFFF00" stroke="#000" stroke-width="0.9"/><path d="M11.5 6 L14.5 3.5 L14.5 12.5 L11.5 15 Z" fill="#C8C800" stroke="#000" stroke-width="0.9"/></svg>
<div class="t" style="left:493px;top:1px;height:19px;line-height:19px;color:#000">Library Manager</div>
<svg style="position:absolute;left:0px;top:0px;" width="1916" height="20" viewBox="0 0 1916 20"><defs><linearGradient id="g51372" x1="0" y1="0" x2="0" y2="1"><stop offset="0" stop-color="#FFFFFF"/><stop offset="1" stop-color="#EEEEEE"/></linearGradient></defs><polygon points="358,18.5 375,1.5 455,1.5 458,4 458,18.5" fill="url(#g51372)" stroke="#A9A9A9" stroke-width="1"/></svg>
<svg style="position:absolute;left:376px;top:4px;shape-rendering:crispEdges" width="13" height="14" viewBox="0 0 13 14"><rect x="4" y="0" width="8" height="1" fill="#7A7A7A"/><rect x="12" y="0" width="1" height="1" fill="#000000"/><rect x="3" y="1" width="1" height="1" fill="#7A7A7A"/><rect x="4" y="1" width="4" height="1" fill="#B8B8B8"/><rect x="8" y="1" width="1" height="1" fill="#7A7A7A"/><rect x="9" y="1" width="2" height="1" fill="#B8B8B8"/><rect x="11" y="1" width="1" height="1" fill="#000000"/><rect x="2" y="2" width="1" height="1" fill="#7A7A7A"/><rect x="3" y="2" width="5" height="1" fill="#B8B8B8"/><rect x="8" y="2" width="1" height="1" fill="#7A7A7A"/><rect x="9" y="2" width="1" height="1" fill="#B8B8B8"/><rect x="10" y="2" width="1" height="1" fill="#7A7A7A"/><rect x="11" y="2" width="1" height="1" fill="#000000"/><rect x="1" y="3" width="1" height="1" fill="#7A7A7A"/><rect x="2" y="3" width="5" height="1" fill="#FFFFFF"/><rect x="7" y="3" width="1" height="1" fill="#7A7A7A"/><rect x="8" y="3" width="2" height="1" fill="#FFFFFF"/><rect x="10" y="3" width="1" height="1" fill="#B8B8B8"/><rect x="11" y="3" width="1" height="1" fill="#7A7A7A"/><rect x="12" y="3" width="1" height="1" fill="#000000"/><rect x="0" y="4" width="1" height="1" fill="#7A7A7A"/><rect x="1" y="4" width="1" height="1" fill="#FFFFFF"/><rect x="2" y="4" width="5" height="1" fill="#C4C4C4"/><rect x="7" y="4" width="1" height="1" fill="#7A7A7A"/><rect x="8" y="4" width="1" height="1" fill="#FFFFFF"/><rect x="9" y="4" width="1" height="1" fill="#C4C4C4"/><rect x="10" y="4" width="1" height="1" fill="#B8B8B8"/><rect x="11" y="4" width="1" height="1" fill="#7A7A7A"/><rect x="12" y="4" width="1" height="1" fill="#000000"/><rect x="0" y="5" width="1" height="1" fill="#7A7A7A"/><rect x="1" y="5" width="1" height="1" fill="#FFFFFF"/><rect x="2" y="5" width="1" height="1" fill="#C4C4C4"/><rect x="3" y="5" width="2" height="1" fill="#00C000"/><rect x="5" y="5" width="2" height="1" fill="#C4C4C4"/><rect x="7" y="5" width="1" height="1" fill="#7A7A7A"/><rect x="8" y="5" width="1" height="1" fill="#FFFFFF"/><rect x="9" y="5" width="2" height="1" fill="#B00000"/><rect x="11" y="5" width="1" height="1" fill="#B8B8B8"/><rect x="12" y="5" width="1" height="1" fill="#000000"/><rect x="0" y="6" width="1" height="1" fill="#7A7A7A"/><rect x="1" y="6" width="1" height="1" fill="#FFFFFF"/><rect x="2" y="6" width="1" height="1" fill="#C4C4C4"/><rect x="3" y="6" width="2" height="1" fill="#00C000"/><rect x="5" y="6" width="2" height="1" fill="#C4C4C4"/><rect x="7" y="6" width="1" height="1" fill="#7A7A7A"/><rect x="8" y="6" width="1" height="1" fill="#FFFFFF"/><rect x="9" y="6" width="1" height="1" fill="#C4C4C4"/><rect x="10" y="6" width="2" height="1" fill="#B8B8B8"/><rect x="12" y="6" width="1" height="1" fill="#000000"/><rect x="0" y="7" width="1" height="1" fill="#7A7A7A"/><rect x="1" y="7" width="1" height="1" fill="#FFFFFF"/><rect x="2" y="7" width="5" height="1" fill="#C4C4C4"/><rect x="7" y="7" width="1" height="1" fill="#7A7A7A"/><rect x="8" y="7" width="1" height="1" fill="#FFFFFF"/><rect x="9" y="7" width="1" height="1" fill="#C4C4C4"/><rect x="10" y="7" width="2" height="1" fill="#B8B8B8"/><rect x="12" y="7" width="1" height="1" fill="#000000"/><rect x="0" y="8" width="1" height="1" fill="#7A7A7A"/><rect x="1" y="8" width="1" height="1" fill="#FFFFFF"/><rect x="2" y="8" width="5" height="1" fill="#C4C4C4"/><rect x="7" y="8" width="1" height="1" fill="#7A7A7A"/><rect x="8" y="8" width="1" height="1" fill="#FFFFFF"/><rect x="9" y="8" width="1" height="1" fill="#C4C4C4"/><rect x="10" y="8" width="2" height="1" fill="#B8B8B8"/><rect x="12" y="8" width="1" height="1" fill="#000000"/><rect x="0" y="9" width="1" height="1" fill="#7A7A7A"/><rect x="1" y="9" width="1" height="1" fill="#FFFFFF"/><rect x="2" y="9" width="5" height="1" fill="#C4C4C4"/><rect x="7" y="9" width="1" height="1" fill="#7A7A7A"/><rect x="8" y="9" width="1" height="1" fill="#FFFFFF"/><rect x="9" y="9" width="1" height="1" fill="#C4C4C4"/><rect x="10" y="9" width="2" height="1" fill="#B8B8B8"/><rect x="12" y="9" width="1" height="1" fill="#000000"/><rect x="0" y="10" width="1" height="1" fill="#7A7A7A"/><rect x="1" y="10" width="1" height="1" fill="#FFFFFF"/><rect x="2" y="10" width="5" height="1" fill="#C4C4C4"/><rect x="7" y="10" width="1" height="1" fill="#7A7A7A"/><rect x="8" y="10" width="1" height="1" fill="#FFFFFF"/><rect x="9" y="10" width="1" height="1" fill="#C4C4C4"/><rect x="10" y="10" width="2" height="1" fill="#B8B8B8"/><rect x="12" y="10" width="1" height="1" fill="#000000"/><rect x="0" y="11" width="1" height="1" fill="#7A7A7A"/><rect x="1" y="11" width="1" height="1" fill="#FFFFFF"/><rect x="2" y="11" width="5" height="1" fill="#C4C4C4"/><rect x="7" y="11" width="1" height="1" fill="#7A7A7A"/><rect x="8" y="11" width="1" height="1" fill="#FFFFFF"/><rect x="9" y="11" width="1" height="1" fill="#C4C4C4"/><rect x="10" y="11" width="2" height="1" fill="#B8B8B8"/><rect x="12" y="11" width="1" height="1" fill="#000000"/><rect x="0" y="12" width="1" height="1" fill="#7A7A7A"/><rect x="1" y="12" width="1" height="1" fill="#FFFFFF"/><rect x="2" y="12" width="5" height="1" fill="#C4C4C4"/><rect x="7" y="12" width="1" height="1" fill="#7A7A7A"/><rect x="8" y="12" width="1" height="1" fill="#FFFFFF"/><rect x="9" y="12" width="1" height="1" fill="#C4C4C4"/><rect x="10" y="12" width="1" height="1" fill="#B8B8B8"/><rect x="11" y="12" width="1" height="1" fill="#000000"/><rect x="1" y="13" width="11" height="1" fill="#000000"/></svg>
<div class="t" style="left:399px;top:1px;height:19px;line-height:19px;color:#000">Device</div>
<svg style="position:absolute;left:0px;top:0px;" width="1916" height="20" viewBox="0 0 1916 20"><defs><linearGradient id="g53112" x1="0" y1="0" x2="0" y2="1"><stop offset="0" stop-color="#FFFFFF"/><stop offset="1" stop-color="#FFFFFF"/></linearGradient></defs><polygon points="594,19.5 610,1.5 710,1.5 713,4 713,19.5" fill="url(#g53112)" stroke="#A9A9A9" stroke-width="1"/></svg>
<svg style="position:absolute;left:610px;top:3px;shape-rendering:crispEdges" width="13" height="16" viewBox="0 0 13 16"><rect x="0" y="0" width="10" height="1" fill="#8C8C8C"/><rect x="0" y="1" width="1" height="1" fill="#8C8C8C"/><rect x="1" y="1" width="8" height="1" fill="#FFFFFF"/><rect x="9" y="1" width="2" height="1" fill="#8C8C8C"/><rect x="0" y="2" width="1" height="1" fill="#8C8C8C"/><rect x="1" y="2" width="10" height="1" fill="#FFFFFF"/><rect x="11" y="2" width="1" height="1" fill="#8C8C8C"/><rect x="0" y="3" width="1" height="1" fill="#8C8C8C"/><rect x="1" y="3" width="8" height="1" fill="#FFFFFF"/><rect x="9" y="3" width="4" height="1" fill="#000000"/><rect x="0" y="4" width="1" height="1" fill="#8C8C8C"/><rect x="1" y="4" width="2" height="1" fill="#FFFFFF"/><rect x="3" y="4" width="5" height="1" fill="#0000FF"/><rect x="8" y="4" width="3" height="1" fill="#FFFFFF"/><rect x="11" y="4" width="1" height="1" fill="#E4E4E4"/><rect x="12" y="4" width="1" height="1" fill="#000000"/><rect x="0" y="5" width="1" height="1" fill="#8C8C8C"/><rect x="1" y="5" width="10" height="1" fill="#FFFFFF"/><rect x="11" y="5" width="1" height="1" fill="#E4E4E4"/><rect x="12" y="5" width="1" height="1" fill="#000000"/><rect x="0" y="6" width="1" height="1" fill="#8C8C8C"/><rect x="1" y="6" width="2" height="1" fill="#FFFFFF"/><rect x="3" y="6" width="6" height="1" fill="#0000FF"/><rect x="9" y="6" width="2" height="1" fill="#FFFFFF"/><rect x="11" y="6" width="1" height="1" fill="#E4E4E4"/><rect x="12" y="6" width="1" height="1" fill="#000000"/><rect x="0" y="7" width="1" height="1" fill="#8C8C8C"/><rect x="1" y="7" width="10" height="1" fill="#FFFFFF"/><rect x="11" y="7" width="1" height="1" fill="#E4E4E4"/><rect x="12" y="7" width="1" height="1" fill="#000000"/><rect x="0" y="8" width="1" height="1" fill="#8C8C8C"/><rect x="1" y="8" width="2" height="1" fill="#FFFFFF"/><rect x="3" y="8" width="6" height="1" fill="#0000FF"/><rect x="9" y="8" width="2" height="1" fill="#FFFFFF"/><rect x="11" y="8" width="1" height="1" fill="#E4E4E4"/><rect x="12" y="8" width="1" height="1" fill="#000000"/><rect x="0" y="9" width="1" height="1" fill="#8C8C8C"/><rect x="1" y="9" width="10" height="1" fill="#FFFFFF"/><rect x="11" y="9" width="1" height="1" fill="#E4E4E4"/><rect x="12" y="9" width="1" height="1" fill="#000000"/><rect x="0" y="10" width="1" height="1" fill="#8C8C8C"/><rect x="1" y="10" width="2" height="1" fill="#FFFFFF"/><rect x="3" y="10" width="6" height="1" fill="#0000FF"/><rect x="9" y="10" width="2" height="1" fill="#FFFFFF"/><rect x="11" y="10" width="1" height="1" fill="#E4E4E4"/><rect x="12" y="10" width="1" height="1" fill="#000000"/><rect x="0" y="11" width="1" height="1" fill="#8C8C8C"/><rect x="1" y="11" width="10" height="1" fill="#FFFFFF"/><rect x="11" y="11" width="1" height="1" fill="#E4E4E4"/><rect x="12" y="11" width="1" height="1" fill="#000000"/><rect x="0" y="12" width="1" height="1" fill="#8C8C8C"/><rect x="1" y="12" width="2" height="1" fill="#FFFFFF"/><rect x="3" y="12" width="6" height="1" fill="#0000FF"/><rect x="9" y="12" width="2" height="1" fill="#FFFFFF"/><rect x="11" y="12" width="1" height="1" fill="#E4E4E4"/><rect x="12" y="12" width="1" height="1" fill="#000000"/><rect x="0" y="13" width="1" height="1" fill="#8C8C8C"/><rect x="1" y="13" width="10" height="1" fill="#FFFFFF"/><rect x="11" y="13" width="1" height="1" fill="#E4E4E4"/><rect x="12" y="13" width="1" height="1" fill="#000000"/><rect x="0" y="14" width="1" height="1" fill="#8C8C8C"/><rect x="1" y="14" width="11" height="1" fill="#E4E4E4"/><rect x="12" y="14" width="1" height="1" fill="#000000"/><rect x="0" y="15" width="13" height="1" fill="#000000"/></svg>
<div class="t" style="left:631px;top:1px;height:19px;line-height:19px;font-weight:bold;font-size:12px;color:#000">TcpServer</div>
<svg style="position:absolute;left:700px;top:6px;" width="9" height="9" viewBox="0 0 9 9"><path d="M1 1 L8 8 M8 1 L1 8" stroke="#000" stroke-width="2.4"/></svg>
<svg style="position:absolute;left:1120px;top:9px;" width="8" height="5" viewBox="0 0 8 5"><path d="M0 0 H8 L4.0 4 Z" fill="#000"/></svg>
<div style="left:355px;top:21px;width:778px;height:24px;background:#6A6A6A"></div>
<div class="t" style="left:374px;top:22px;height:24px;line-height:24px;color:#fff;font-weight:bold;font-size:11.6px">Device.Application.TcpServer</div>
<div style="left:355px;top:45px;width:753px;height:333px;background:#fff"></div>
<div style="left:355px;top:45px;width:1px;height:333px;background:#A0A0A0"></div>
<div class="t" style="left:363px;top:47px;height:25px;line-height:25px;">Expression</div>
<div style="left:759px;top:46px;width:1px;height:24px;background:#E5E5E5"></div>
<div class="t" style="left:763px;top:47px;height:25px;line-height:25px;">Type</div>
<div style="left:879px;top:46px;width:1px;height:24px;background:#E5E5E5"></div>
<div class="t" style="left:883px;top:47px;height:25px;line-height:25px;">Value</div>
<div style="left:357px;top:90px;width:751px;height:1px;background:#E3E3E3"></div>
<div style="left:760px;top:71px;width:1px;height:19px;background:#E8E8E8"></div>
<div style="left:880px;top:71px;width:1px;height:19px;background:#E8E8E8"></div>
<svg style="position:absolute;left:385px;top:75px;shape-rendering:crispEdges" width="8" height="11" viewBox="0 0 8 11"><rect x="4" y="0" width="1" height="1" fill="#8C8C8C"/><rect x="3" y="1" width="1" height="1" fill="#8C8C8C"/><rect x="4" y="1" width="1" height="1" fill="#B4D8F8"/><rect x="5" y="1" width="1" height="1" fill="#8C8C8C"/><rect x="2" y="2" width="1" height="1" fill="#8C8C8C"/><rect x="3" y="2" width="1" height="1" fill="#B4D8F8"/><rect x="4" y="2" width="1" height="1" fill="#0000FF"/><rect x="5" y="2" width="1" height="1" fill="#B4D8F8"/><rect x="6" y="2" width="1" height="1" fill="#8C8C8C"/><rect x="1" y="3" width="1" height="1" fill="#8C8C8C"/><rect x="2" y="3" width="1" height="1" fill="#B4D8F8"/><rect x="3" y="3" width="1" height="1" fill="#0000FF"/><rect x="4" y="3" width="1" height="1" fill="#B4D8F8"/><rect x="5" y="3" width="1" height="1" fill="#0000FF"/><rect x="6" y="3" width="1" height="1" fill="#B4D8F8"/><rect x="7" y="3" width="1" height="1" fill="#000000"/><rect x="0" y="4" width="1" height="1" fill="#8C8C8C"/><rect x="1" y="4" width="1" height="1" fill="#B4D8F8"/><rect x="2" y="4" width="1" height="1" fill="#0000FF"/><rect x="3" y="4" width="1" height="1" fill="#B4D8F8"/><rect x="4" y="4" width="1" height="1" fill="#0000FF"/><rect x="5" y="4" width="1" height="1" fill="#B4D8F8"/><rect x="6" y="4" width="2" height="1" fill="#000000"/><rect x="0" y="5" width="1" height="1" fill="#8C8C8C"/><rect x="1" y="5" width="2" height="1" fill="#B4D8F8"/><rect x="3" y="5" width="1" height="1" fill="#0000FF"/><rect x="4" y="5" width="1" height="1" fill="#B4D8F8"/><rect x="5" y="5" width="1" height="1" fill="#000000"/><rect x="6" y="5" width="1" height="1" fill="#8C8C8C"/><rect x="7" y="5" width="1" height="1" fill="#000000"/><rect x="0" y="6" width="1" height="1" fill="#8C8C8C"/><rect x="1" y="6" width="3" height="1" fill="#B4D8F8"/><rect x="4" y="6" width="1" height="1" fill="#000000"/><rect x="5" y="6" width="1" height="1" fill="#8C8C8C"/><rect x="6" y="6" width="2" height="1" fill="#000000"/><rect x="0" y="7" width="1" height="1" fill="#8C8C8C"/><rect x="1" y="7" width="2" height="1" fill="#B4D8F8"/><rect x="3" y="7" width="1" height="1" fill="#000000"/><rect x="4" y="7" width="1" height="1" fill="#8C8C8C"/><rect x="5" y="7" width="2" height="1" fill="#000000"/><rect x="1" y="8" width="1" height="1" fill="#8C8C8C"/><rect x="2" y="8" width="1" height="1" fill="#B4D8F8"/><rect x="3" y="8" width="1" height="1" fill="#000000"/><rect x="4" y="8" width="1" height="1" fill="#8C8C8C"/><rect x="5" y="8" width="1" height="1" fill="#000000"/><rect x="2" y="9" width="3" height="1" fill="#000000"/><rect x="3" y="10" width="1" height="1" fill="#000000"/></svg>
<div class="t" style="left:401px;top:71px;height:19px;line-height:19px;letter-spacing:0.05px">c_wMaxTelegram</div>
<div class="t" style="left:763px;top:72px;height:19px;line-height:19px;letter-spacing:-0.3px">INT</div>
<svg style="position:absolute;left:882px;top:73px;" width="15" height="15" viewBox="0 0 15 15"><polygon points="14.71,10.48 10.48,14.71 4.52,14.71 0.29,10.48 0.29,4.52 4.52,0.29 10.48,0.29 14.71,4.52" fill="#007A00"/><text x="7.7" y="12.45" font-family="Liberation Sans" font-size="12.0" fill="#fff" text-anchor="middle">C</text></svg>
<div class="t" style="left:904px;top:71px;height:19px;line-height:19px;">15</div>
<div style="left:357px;top:109px;width:751px;height:1px;background:#E3E3E3"></div>
<div style="left:760px;top:90px;width:1px;height:19px;background:#E8E8E8"></div>
<div style="left:880px;top:90px;width:1px;height:19px;background:#E8E8E8"></div>
<svg style="position:absolute;left:362px;top:94px;shape-rendering:crispEdges" width="9" height="9" viewBox="0 0 9 9"><rect x="1" y="0" width="7" height="1" fill="#92CFD0"/><rect x="0" y="1" width="1" height="1" fill="#92CFD0"/><rect x="1" y="1" width="7" height="1" fill="#FFFFFF"/><rect x="8" y="1" width="1" height="1" fill="#DADADA"/><rect x="0" y="2" width="1" height="1" fill="#92CFD0"/><rect x="1" y="2" width="7" height="1" fill="#FFFFFF"/><rect x="8" y="2" width="1" height="1" fill="#92CFD0"/><rect x="0" y="3" width="1" height="1" fill="#92CFD0"/><rect x="1" y="3" width="7" height="1" fill="#FFFFFF"/><rect x="8" y="3" width="1" height="1" fill="#DADADA"/><rect x="0" y="4" width="1" height="1" fill="#92CFD0"/><rect x="1" y="4" width="7" height="1" fill="#FFFFFF"/><rect x="8" y="4" width="1" height="1" fill="#DADADA"/><rect x="0" y="5" width="1" height="1" fill="#92CFD0"/><rect x="1" y="5" width="7" height="1" fill="#FFFFFF"/><rect x="8" y="5" width="1" height="1" fill="#92CFD0"/><rect x="0" y="6" width="1" height="1" fill="#92CFD0"/><rect x="1" y="6" width="7" height="1" fill="#FFFFFF"/><rect x="8" y="6" width="1" height="1" fill="#DADADA"/><rect x="0" y="7" width="1" height="1" fill="#92CFD0"/><rect x="1" y="7" width="7" height="1" fill="#E2E2E2"/><rect x="8" y="7" width="1" height="1" fill="#DADADA"/><rect x="1" y="8" width="1" height="1" fill="#DADADA"/><rect x="2" y="8" width="5" height="1" fill="#CFCFCF"/><rect x="7" y="8" width="1" height="1" fill="#DADADA"/></svg>
<svg style="position:absolute;left:362px;top:94px;shape-rendering:crispEdges" width="9" height="9" viewBox="0 0 9 9"><path d="M2 4.5 H7 M4.5 2 V7" stroke="#000" stroke-width="1"/></svg>
<svg style="position:absolute;left:385px;top:94px;shape-rendering:crispEdges" width="8" height="11" viewBox="0 0 8 11"><rect x="4" y="0" width="1" height="1" fill="#8C8C8C"/><rect x="3" y="1" width="1" height="1" fill="#8C8C8C"/><rect x="4" y="1" width="1" height="1" fill="#B4D8F8"/><rect x="5" y="1" width="1" height="1" fill="#8C8C8C"/><rect x="2" y="2" width="1" height="1" fill="#8C8C8C"/><rect x="3" y="2" width="1" height="1" fill="#B4D8F8"/><rect x="4" y="2" width="1" height="1" fill="#0000FF"/><rect x="5" y="2" width="1" height="1" fill="#B4D8F8"/><rect x="6" y="2" width="1" height="1" fill="#8C8C8C"/><rect x="1" y="3" width="1" height="1" fill="#8C8C8C"/><rect x="2" y="3" width="1" height="1" fill="#B4D8F8"/><rect x="3" y="3" width="1" height="1" fill="#0000FF"/><rect x="4" y="3" width="1" height="1" fill="#B4D8F8"/><rect x="5" y="3" width="1" height="1" fill="#0000FF"/><rect x="6" y="3" width="1" height="1" fill="#B4D8F8"/><rect x="7" y="3" width="1" height="1" fill="#000000"/><rect x="0" y="4" width="1" height="1" fill="#8C8C8C"/><rect x="1" y="4" width="1" height="1" fill="#B4D8F8"/><rect x="2" y="4" width="1" height="1" fill="#0000FF"/><rect x="3" y="4" width="1" height="1" fill="#B4D8F8"/><rect x="4" y="4" width="1" height="1" fill="#0000FF"/><rect x="5" y="4" width="1" height="1" fill="#B4D8F8"/><rect x="6" y="4" width="2" height="1" fill="#000000"/><rect x="0" y="5" width="1" height="1" fill="#8C8C8C"/><rect x="1" y="5" width="2" height="1" fill="#B4D8F8"/><rect x="3" y="5" width="1" height="1" fill="#0000FF"/><rect x="4" y="5" width="1" height="1" fill="#B4D8F8"/><rect x="5" y="5" width="1" height="1" fill="#000000"/><rect x="6" y="5" width="1" height="1" fill="#8C8C8C"/><rect x="7" y="5" width="1" height="1" fill="#000000"/><rect x="0" y="6" width="1" height="1" fill="#8C8C8C"/><rect x="1" y="6" width="3" height="1" fill="#B4D8F8"/><rect x="4" y="6" width="1" height="1" fill="#000000"/><rect x="5" y="6" width="1" height="1" fill="#8C8C8C"/><rect x="6" y="6" width="2" height="1" fill="#000000"/><rect x="0" y="7" width="1" height="1" fill="#8C8C8C"/><rect x="1" y="7" width="2" height="1" fill="#B4D8F8"/><rect x="3" y="7" width="1" height="1" fill="#000000"/><rect x="4" y="7" width="1" height="1" fill="#8C8C8C"/><rect x="5" y="7" width="2" height="1" fill="#000000"/><rect x="1" y="8" width="1" height="1" fill="#8C8C8C"/><rect x="2" y="8" width="1" height="1" fill="#B4D8F8"/><rect x="3" y="8" width="1" height="1" fill="#000000"/><rect x="4" y="8" width="1" height="1" fill="#8C8C8C"/><rect x="5" y="8" width="1" height="1" fill="#000000"/><rect x="2" y="9" width="3" height="1" fill="#000000"/><rect x="3" y="10" width="1" height="1" fill="#000000"/></svg>
<div class="t" style="left:401px;top:90px;height:19px;line-height:19px;letter-spacing:0.05px">ipAddress</div>
<div class="t" style="left:763px;top:91px;height:19px;line-height:19px;letter-spacing:-0.3px">NBS.IPv4Address</div>
<div style="left:357px;top:128px;width:751px;height:1px;background:#E3E3E3"></div>
<div style="left:760px;top:109px;width:1px;height:19px;background:#E8E8E8"></div>
<div style="left:880px;top:109px;width:1px;height:19px;background:#E8E8E8"></div>
<svg style="position:absolute;left:362px;top:113px;shape-rendering:crispEdges" width="9" height="9" viewBox="0 0 9 9"><rect x="1" y="0" width="7" height="1" fill="#92CFD0"/><rect x="0" y="1" width="1" height="1" fill="#92CFD0"/><rect x="1" y="1" width="7" height="1" fill="#FFFFFF"/><rect x="8" y="1" width="1" height="1" fill="#DADADA"/><rect x="0" y="2" width="1" height="1" fill="#92CFD0"/><rect x="1" y="2" width="7" height="1" fill="#FFFFFF"/><rect x="8" y="2" width="1" height="1" fill="#92CFD0"/><rect x="0" y="3" width="1" height="1" fill="#92CFD0"/><rect x="1" y="3" width="7" height="1" fill="#FFFFFF"/><rect x="8" y="3" width="1" height="1" fill="#DADADA"/><rect x="0" y="4" width="1" height="1" fill="#92CFD0"/><rect x="1" y="4" width="7" height="1" fill="#FFFFFF"/><rect x="8" y="4" width="1" height="1" fill="#DADADA"/><rect x="0" y="5" width="1" height="1" fill="#92CFD0"/><rect x="1" y="5" width="7" height="1" fill="#FFFFFF"/><rect x="8" y="5" width="1" height="1" fill="#92CFD0"/><rect x="0" y="6" width="1" height="1" fill="#92CFD0"/><rect x="1" y="6" width="7" height="1" fill="#FFFFFF"/><rect x="8" y="6" width="1" height="1" fill="#DADADA"/><rect x="0" y="7" width="1" height="1" fill="#92CFD0"/><rect x="1" y="7" width="7" height="1" fill="#E2E2E2"/><rect x="8" y="7" width="1" height="1" fill="#DADADA"/><rect x="1" y="8" width="1" height="1" fill="#DADADA"/><rect x="2" y="8" width="5" height="1" fill="#CFCFCF"/><rect x="7" y="8" width="1" height="1" fill="#DADADA"/></svg>
<svg style="position:absolute;left:362px;top:113px;shape-rendering:crispEdges" width="9" height="9" viewBox="0 0 9 9"><path d="M2 4.5 H7 M4.5 2 V7" stroke="#000" stroke-width="1"/></svg>
<svg style="position:absolute;left:385px;top:113px;shape-rendering:crispEdges" width="8" height="11" viewBox="0 0 8 11"><rect x="4" y="0" width="1" height="1" fill="#8C8C8C"/><rect x="3" y="1" width="1" height="1" fill="#8C8C8C"/><rect x="4" y="1" width="1" height="1" fill="#B4D8F8"/><rect x="5" y="1" width="1" height="1" fill="#8C8C8C"/><rect x="2" y="2" width="1" height="1" fill="#8C8C8C"/><rect x="3" y="2" width="1" height="1" fill="#B4D8F8"/><rect x="4" y="2" width="1" height="1" fill="#0000FF"/><rect x="5" y="2" width="1" height="1" fill="#B4D8F8"/><rect x="6" y="2" width="1" height="1" fill="#8C8C8C"/><rect x="1" y="3" width="1" height="1" fill="#8C8C8C"/><rect x="2" y="3" width="1" height="1" fill="#B4D8F8"/><rect x="3" y="3" width="1" height="1" fill="#0000FF"/><rect x="4" y="3" width="1" height="1" fill="#B4D8F8"/><rect x="5" y="3" width="1" height="1" fill="#0000FF"/><rect x="6" y="3" width="1" height="1" fill="#B4D8F8"/><rect x="7" y="3" width="1" height="1" fill="#000000"/><rect x="0" y="4" width="1" height="1" fill="#8C8C8C"/><rect x="1" y="4" width="1" height="1" fill="#B4D8F8"/><rect x="2" y="4" width="1" height="1" fill="#0000FF"/><rect x="3" y="4" width="1" height="1" fill="#B4D8F8"/><rect x="4" y="4" width="1" height="1" fill="#0000FF"/><rect x="5" y="4" width="1" height="1" fill="#B4D8F8"/><rect x="6" y="4" width="2" height="1" fill="#000000"/><rect x="0" y="5" width="1" height="1" fill="#8C8C8C"/><rect x="1" y="5" width="2" height="1" fill="#B4D8F8"/><rect x="3" y="5" width="1" height="1" fill="#0000FF"/><rect x="4" y="5" width="1" height="1" fill="#B4D8F8"/><rect x="5" y="5" width="1" height="1" fill="#000000"/><rect x="6" y="5" width="1" height="1" fill="#8C8C8C"/><rect x="7" y="5" width="1" height="1" fill="#000000"/><rect x="0" y="6" width="1" height="1" fill="#8C8C8C"/><rect x="1" y="6" width="3" height="1" fill="#B4D8F8"/><rect x="4" y="6" width="1" height="1" fill="#000000"/><rect x="5" y="6" width="1" height="1" fill="#8C8C8C"/><rect x="6" y="6" width="2" height="1" fill="#000000"/><rect x="0" y="7" width="1" height="1" fill="#8C8C8C"/><rect x="1" y="7" width="2" height="1" fill="#B4D8F8"/><rect x="3" y="7" width="1" height="1" fill="#000000"/><rect x="4" y="7" width="1" height="1" fill="#8C8C8C"/><rect x="5" y="7" width="2" height="1" fill="#000000"/><rect x="1" y="8" width="1" height="1" fill="#8C8C8C"/><rect x="2" y="8" width="1" height="1" fill="#B4D8F8"/><rect x="3" y="8" width="1" height="1" fill="#000000"/><rect x="4" y="8" width="1" height="1" fill="#8C8C8C"/><rect x="5" y="8" width="1" height="1" fill="#000000"/><rect x="2" y="9" width="3" height="1" fill="#000000"/><rect x="3" y="10" width="1" height="1" fill="#000000"/></svg>
<div class="t" style="left:401px;top:109px;height:19px;line-height:19px;letter-spacing:0.05px">fbTcpConnection</div>
<div class="t" style="left:763px;top:110px;height:19px;line-height:19px;letter-spacing:-0.4px">NBS.TCP_Connection</div>
<div style="left:357px;top:147px;width:751px;height:1px;background:#E3E3E3"></div>
<div style="left:760px;top:128px;width:1px;height:19px;background:#E8E8E8"></div>
<div style="left:880px;top:128px;width:1px;height:19px;background:#E8E8E8"></div>
<svg style="position:absolute;left:362px;top:132px;shape-rendering:crispEdges" width="9" height="9" viewBox="0 0 9 9"><rect x="1" y="0" width="7" height="1" fill="#92CFD0"/><rect x="0" y="1" width="1" height="1" fill="#92CFD0"/><rect x="1" y="1" width="7" height="1" fill="#FFFFFF"/><rect x="8" y="1" width="1" height="1" fill="#DADADA"/><rect x="0" y="2" width="1" height="1" fill="#92CFD0"/><rect x="1" y="2" width="7" height="1" fill="#FFFFFF"/><rect x="8" y="2" width="1" height="1" fill="#92CFD0"/><rect x="0" y="3" width="1" height="1" fill="#92CFD0"/><rect x="1" y="3" width="7" height="1" fill="#FFFFFF"/><rect x="8" y="3" width="1" height="1" fill="#DADADA"/><rect x="0" y="4" width="1" height="1" fill="#92CFD0"/><rect x="1" y="4" width="7" height="1" fill="#FFFFFF"/><rect x="8" y="4" width="1" height="1" fill="#DADADA"/><rect x="0" y="5" width="1" height="1" fill="#92CFD0"/><rect x="1" y="5" width="7" height="1" fill="#FFFFFF"/><rect x="8" y="5" width="1" height="1" fill="#92CFD0"/><rect x="0" y="6" width="1" height="1" fill="#92CFD0"/><rect x="1" y="6" width="7" height="1" fill="#FFFFFF"/><rect x="8" y="6" width="1" height="1" fill="#DADADA"/><rect x="0" y="7" width="1" height="1" fill="#92CFD0"/><rect x="1" y="7" width="7" height="1" fill="#E2E2E2"/><rect x="8" y="7" width="1" height="1" fill="#DADADA"/><rect x="1" y="8" width="1" height="1" fill="#DADADA"/><rect x="2" y="8" width="5" height="1" fill="#CFCFCF"/><rect x="7" y="8" width="1" height="1" fill="#DADADA"/></svg>
<svg style="position:absolute;left:362px;top:132px;shape-rendering:crispEdges" width="9" height="9" viewBox="0 0 9 9"><path d="M2 4.5 H7 M4.5 2 V7" stroke="#000" stroke-width="1"/></svg>
<svg style="position:absolute;left:385px;top:132px;shape-rendering:crispEdges" width="8" height="11" viewBox="0 0 8 11"><rect x="4" y="0" width="1" height="1" fill="#8C8C8C"/><rect x="3" y="1" width="1" height="1" fill="#8C8C8C"/><rect x="4" y="1" width="1" height="1" fill="#B4D8F8"/><rect x="5" y="1" width="1" height="1" fill="#8C8C8C"/><rect x="2" y="2" width="1" height="1" fill="#8C8C8C"/><rect x="3" y="2" width="1" height="1" fill="#B4D8F8"/><rect x="4" y="2" width="1" height="1" fill="#0000FF"/><rect x="5" y="2" width="1" height="1" fill="#B4D8F8"/><rect x="6" y="2" width="1" height="1" fill="#8C8C8C"/><rect x="1" y="3" width="1" height="1" fill="#8C8C8C"/><rect x="2" y="3" width="1" height="1" fill="#B4D8F8"/><rect x="3" y="3" width="1" height="1" fill="#0000FF"/><rect x="4" y="3" width="1" height="1" fill="#B4D8F8"/><rect x="5" y="3" width="1" height="1" fill="#0000FF"/><rect x="6" y="3" width="1" height="1" fill="#B4D8F8"/><rect x="7" y="3" width="1" height="1" fill="#000000"/><rect x="0" y="4" width="1" height="1" fill="#8C8C8C"/><rect x="1" y="4" width="1" height="1" fill="#B4D8F8"/><rect x="2" y="4" width="1" height="1" fill="#0000FF"/><rect x="3" y="4" width="1" height="1" fill="#B4D8F8"/><rect x="4" y="4" width="1" height="1" fill="#0000FF"/><rect x="5" y="4" width="1" height="1" fill="#B4D8F8"/><rect x="6" y="4" width="2" height="1" fill="#000000"/><rect x="0" y="5" width="1" height="1" fill="#8C8C8C"/><rect x="1" y="5" width="2" height="1" fill="#B4D8F8"/><rect x="3" y="5" width="1" height="1" fill="#0000FF"/><rect x="4" y="5" width="1" height="1" fill="#B4D8F8"/><rect x="5" y="5" width="1" height="1" fill="#000000"/><rect x="6" y="5" width="1" height="1" fill="#8C8C8C"/><rect x="7" y="5" width="1" height="1" fill="#000000"/><rect x="0" y="6" width="1" height="1" fill="#8C8C8C"/><rect x="1" y="6" width="3" height="1" fill="#B4D8F8"/><rect x="4" y="6" width="1" height="1" fill="#000000"/><rect x="5" y="6" width="1" height="1" fill="#8C8C8C"/><rect x="6" y="6" width="2" height="1" fill="#000000"/><rect x="0" y="7" width="1" height="1" fill="#8C8C8C"/><rect x="1" y="7" width="2" height="1" fill="#B4D8F8"/><rect x="3" y="7" width="1" height="1" fill="#000000"/><rect x="4" y="7" width="1" height="1" fill="#8C8C8C"/><rect x="5" y="7" width="2" height="1" fill="#000000"/><rect x="1" y="8" width="1" height="1" fill="#8C8C8C"/><rect x="2" y="8" width="1" height="1" fill="#B4D8F8"/><rect x="3" y="8" width="1" height="1" fill="#000000"/><rect x="4" y="8" width="1" height="1" fill="#8C8C8C"/><rect x="5" y="8" width="1" height="1" fill="#000000"/><rect x="2" y="9" width="3" height="1" fill="#000000"/><rect x="3" y="10" width="1" height="1" fill="#000000"/></svg>
<div class="t" style="left:401px;top:128px;height:19px;line-height:19px;letter-spacing:0.05px">fbTcpServer</div>
<div class="t" style="left:763px;top:129px;height:19px;line-height:19px;letter-spacing:-0.3px">NBS.TCP_Server</div>
<div style="left:357px;top:166px;width:751px;height:1px;background:#E3E3E3"></div>
<div style="left:760px;top:147px;width:1px;height:19px;background:#E8E8E8"></div>
<div style="left:880px;top:147px;width:1px;height:19px;background:#E8E8E8"></div>
<svg style="position:absolute;left:362px;top:151px;shape-rendering:crispEdges" width="9" height="9" viewBox="0 0 9 9"><rect x="1" y="0" width="7" height="1" fill="#92CFD0"/><rect x="0" y="1" width="1" height="1" fill="#92CFD0"/><rect x="1" y="1" width="7" height="1" fill="#FFFFFF"/><rect x="8" y="1" width="1" height="1" fill="#DADADA"/><rect x="0" y="2" width="1" height="1" fill="#92CFD0"/><rect x="1" y="2" width="7" height="1" fill="#FFFFFF"/><rect x="8" y="2" width="1" height="1" fill="#92CFD0"/><rect x="0" y="3" width="1" height="1" fill="#92CFD0"/><rect x="1" y="3" width="7" height="1" fill="#FFFFFF"/><rect x="8" y="3" width="1" height="1" fill="#DADADA"/><rect x="0" y="4" width="1" height="1" fill="#92CFD0"/><rect x="1" y="4" width="7" height="1" fill="#FFFFFF"/><rect x="8" y="4" width="1" height="1" fill="#DADADA"/><rect x="0" y="5" width="1" height="1" fill="#92CFD0"/><rect x="1" y="5" width="7" height="1" fill="#FFFFFF"/><rect x="8" y="5" width="1" height="1" fill="#92CFD0"/><rect x="0" y="6" width="1" height="1" fill="#92CFD0"/><rect x="1" y="6" width="7" height="1" fill="#FFFFFF"/><rect x="8" y="6" width="1" height="1" fill="#DADADA"/><rect x="0" y="7" width="1" height="1" fill="#92CFD0"/><rect x="1" y="7" width="7" height="1" fill="#E2E2E2"/><rect x="8" y="7" width="1" height="1" fill="#DADADA"/><rect x="1" y="8" width="1" height="1" fill="#DADADA"/><rect x="2" y="8" width="5" height="1" fill="#CFCFCF"/><rect x="7" y="8" width="1" height="1" fill="#DADADA"/></svg>
<svg style="position:absolute;left:362px;top:151px;shape-rendering:crispEdges" width="9" height="9" viewBox="0 0 9 9"><path d="M2 4.5 H7 M4.5 2 V7" stroke="#000" stroke-width="1"/></svg>
<svg style="position:absolute;left:385px;top:151px;shape-rendering:crispEdges" width="8" height="11" viewBox="0 0 8 11"><rect x="4" y="0" width="1" height="1" fill="#8C8C8C"/><rect x="3" y="1" width="1" height="1" fill="#8C8C8C"/><rect x="4" y="1" width="1" height="1" fill="#B4D8F8"/><rect x="5" y="1" width="1" height="1" fill="#8C8C8C"/><rect x="2" y="2" width="1" height="1" fill="#8C8C8C"/><rect x="3" y="2" width="1" height="1" fill="#B4D8F8"/><rect x="4" y="2" width="1" height="1" fill="#0000FF"/><rect x="5" y="2" width="1" height="1" fill="#B4D8F8"/><rect x="6" y="2" width="1" height="1" fill="#8C8C8C"/><rect x="1" y="3" width="1" height="1" fill="#8C8C8C"/><rect x="2" y="3" width="1" height="1" fill="#B4D8F8"/><rect x="3" y="3" width="1" height="1" fill="#0000FF"/><rect x="4" y="3" width="1" height="1" fill="#B4D8F8"/><rect x="5" y="3" width="1" height="1" fill="#0000FF"/><rect x="6" y="3" width="1" height="1" fill="#B4D8F8"/><rect x="7" y="3" width="1" height="1" fill="#000000"/><rect x="0" y="4" width="1" height="1" fill="#8C8C8C"/><rect x="1" y="4" width="1" height="1" fill="#B4D8F8"/><rect x="2" y="4" width="1" height="1" fill="#0000FF"/><rect x="3" y="4" width="1" height="1" fill="#B4D8F8"/><rect x="4" y="4" width="1" height="1" fill="#0000FF"/><rect x="5" y="4" width="1" height="1" fill="#B4D8F8"/><rect x="6" y="4" width="2" height="1" fill="#000000"/><rect x="0" y="5" width="1" height="1" fill="#8C8C8C"/><rect x="1" y="5" width="2" height="1" fill="#B4D8F8"/><rect x="3" y="5" width="1" height="1" fill="#0000FF"/><rect x="4" y="5" width="1" height="1" fill="#B4D8F8"/><rect x="5" y="5" width="1" height="1" fill="#000000"/><rect x="6" y="5" width="1" height="1" fill="#8C8C8C"/><rect x="7" y="5" width="1" height="1" fill="#000000"/><rect x="0" y="6" width="1" height="1" fill="#8C8C8C"/><rect x="1" y="6" width="3" height="1" fill="#B4D8F8"/><rect x="4" y="6" width="1" height="1" fill="#000000"/><rect x="5" y="6" width="1" height="1" fill="#8C8C8C"/><rect x="6" y="6" width="2" height="1" fill="#000000"/><rect x="0" y="7" width="1" height="1" fill="#8C8C8C"/><rect x="1" y="7" width="2" height="1" fill="#B4D8F8"/><rect x="3" y="7" width="1" height="1" fill="#000000"/><rect x="4" y="7" width="1" height="1" fill="#8C8C8C"/><rect x="5" y="7" width="2" height="1" fill="#000000"/><rect x="1" y="8" width="1" height="1" fill="#8C8C8C"/><rect x="2" y="8" width="1" height="1" fill="#B4D8F8"/><rect x="3" y="8" width="1" height="1" fill="#000000"/><rect x="4" y="8" width="1" height="1" fill="#8C8C8C"/><rect x="5" y="8" width="1" height="1" fill="#000000"/><rect x="2" y="9" width="3" height="1" fill="#000000"/><rect x="3" y="10" width="1" height="1" fill="#000000"/></svg>
<div class="t" style="left:401px;top:147px;height:19px;line-height:19px;letter-spacing:0.05px">fbTcpRead</div>
<div class="t" style="left:763px;top:148px;height:19px;line-height:19px;letter-spacing:-0.3px">NBS.TCP_Read</div>
<div style="left:357px;top:185px;width:751px;height:1px;background:#E3E3E3"></div>
<div style="left:760px;top:166px;width:1px;height:19px;background:#E8E8E8"></div>
<div style="left:880px;top:166px;width:1px;height:19px;background:#E8E8E8"></div>
<svg style="position:absolute;left:362px;top:170px;shape-rendering:crispEdges" width="9" height="9" viewBox="0 0 9 9"><rect x="1" y="0" width="7" height="1" fill="#92CFD0"/><rect x="0" y="1" width="1" height="1" fill="#92CFD0"/><rect x="1" y="1" width="7" height="1" fill="#FFFFFF"/><rect x="8" y="1" width="1" height="1" fill="#DADADA"/><rect x="0" y="2" width="1" height="1" fill="#92CFD0"/><rect x="1" y="2" width="7" height="1" fill="#FFFFFF"/><rect x="8" y="2" width="1" height="1" fill="#92CFD0"/><rect x="0" y="3" width="1" height="1" fill="#92CFD0"/><rect x="1" y="3" width="7" height="1" fill="#FFFFFF"/><rect x="8" y="3" width="1" height="1" fill="#DADADA"/><rect x="0" y="4" width="1" height="1" fill="#92CFD0"/><rect x="1" y="4" width="7" height="1" fill="#FFFFFF"/><rect x="8" y="4" width="1" height="1" fill="#DADADA"/><rect x="0" y="5" width="1" height="1" fill="#92CFD0"/><rect x="1" y="5" width="7" height="1" fill="#FFFFFF"/><rect x="8" y="5" width="1" height="1" fill="#92CFD0"/><rect x="0" y="6" width="1" height="1" fill="#92CFD0"/><rect x="1" y="6" width="7" height="1" fill="#FFFFFF"/><rect x="8" y="6" width="1" height="1" fill="#DADADA"/><rect x="0" y="7" width="1" height="1" fill="#92CFD0"/><rect x="1" y="7" width="7" height="1" fill="#E2E2E2"/><rect x="8" y="7" width="1" height="1" fill="#DADADA"/><rect x="1" y="8" width="1" height="1" fill="#DADADA"/><rect x="2" y="8" width="5" height="1" fill="#CFCFCF"/><rect x="7" y="8" width="1" height="1" fill="#DADADA"/></svg>
<svg style="position:absolute;left:362px;top:170px;shape-rendering:crispEdges" width="9" height="9" viewBox="0 0 9 9"><path d="M2 4.5 H7 M4.5 2 V7" stroke="#000" stroke-width="1"/></svg>
<svg style="position:absolute;left:385px;top:170px;shape-rendering:crispEdges" width="8" height="11" viewBox="0 0 8 11"><rect x="4" y="0" width="1" height="1" fill="#8C8C8C"/><rect x="3" y="1" width="1" height="1" fill="#8C8C8C"/><rect x="4" y="1" width="1" height="1" fill="#B4D8F8"/><rect x="5" y="1" width="1" height="1" fill="#8C8C8C"/><rect x="2" y="2" width="1" height="1" fill="#8C8C8C"/><rect x="3" y="2" width="1" height="1" fill="#B4D8F8"/><rect x="4" y="2" width="1" height="1" fill="#0000FF"/><rect x="5" y="2" width="1" height="1" fill="#B4D8F8"/><rect x="6" y="2" width="1" height="1" fill="#8C8C8C"/><rect x="1" y="3" width="1" height="1" fill="#8C8C8C"/><rect x="2" y="3" width="1" height="1" fill="#B4D8F8"/><rect x="3" y="3" width="1" height="1" fill="#0000FF"/><rect x="4" y="3" width="1" height="1" fill="#B4D8F8"/><rect x="5" y="3" width="1" height="1" fill="#0000FF"/><rect x="6" y="3" width="1" height="1" fill="#B4D8F8"/><rect x="7" y="3" width="1" height="1" fill="#000000"/><rect x="0" y="4" width="1" height="1" fill="#8C8C8C"/><rect x="1" y="4" width="1" height="1" fill="#B4D8F8"/><rect x="2" y="4" width="1" height="1" fill="#0000FF"/><rect x="3" y="4" width="1" height="1" fill="#B4D8F8"/><rect x="4" y="4" width="1" height="1" fill="#0000FF"/><rect x="5" y="4" width="1" height="1" fill="#B4D8F8"/><rect x="6" y="4" width="2" height="1" fill="#000000"/><rect x="0" y="5" width="1" height="1" fill="#8C8C8C"/><rect x="1" y="5" width="2" height="1" fill="#B4D8F8"/><rect x="3" y="5" width="1" height="1" fill="#0000FF"/><rect x="4" y="5" width="1" height="1" fill="#B4D8F8"/><rect x="5" y="5" width="1" height="1" fill="#000000"/><rect x="6" y="5" width="1" height="1" fill="#8C8C8C"/><rect x="7" y="5" width="1" height="1" fill="#000000"/><rect x="0" y="6" width="1" height="1" fill="#8C8C8C"/><rect x="1" y="6" width="3" height="1" fill="#B4D8F8"/><rect x="4" y="6" width="1" height="1" fill="#000000"/><rect x="5" y="6" width="1" height="1" fill="#8C8C8C"/><rect x="6" y="6" width="2" height="1" fill="#000000"/><rect x="0" y="7" width="1" height="1" fill="#8C8C8C"/><rect x="1" y="7" width="2" height="1" fill="#B4D8F8"/><rect x="3" y="7" width="1" height="1" fill="#000000"/><rect x="4" y="7" width="1" height="1" fill="#8C8C8C"/><rect x="5" y="7" width="2" height="1" fill="#000000"/><rect x="1" y="8" width="1" height="1" fill="#8C8C8C"/><rect x="2" y="8" width="1" height="1" fill="#B4D8F8"/><rect x="3" y="8" width="1" height="1" fill="#000000"/><rect x="4" y="8" width="1" height="1" fill="#8C8C8C"/><rect x="5" y="8" width="1" height="1" fill="#000000"/><rect x="2" y="9" width="3" height="1" fill="#000000"/><rect x="3" y="10" width="1" height="1" fill="#000000"/></svg>
<div class="t" style="left:401px;top:166px;height:19px;line-height:19px;letter-spacing:0.05px">fbTcpWrite</div>
<div class="t" style="left:763px;top:167px;height:19px;line-height:19px;letter-spacing:-0.3px">NBS.TCP_Write</div>
<div style="left:357px;top:204px;width:751px;height:1px;background:#E3E3E3"></div>
<div style="left:760px;top:185px;width:1px;height:19px;background:#E8E8E8"></div>
<div style="left:880px;top:185px;width:1px;height:19px;background:#E8E8E8"></div>
<svg style="position:absolute;left:362px;top:189px;shape-rendering:crispEdges" width="9" height="9" viewBox="0 0 9 9"><rect x="1" y="0" width="7" height="1" fill="#92CFD0"/><rect x="0" y="1" width="1" height="1" fill="#92CFD0"/><rect x="1" y="1" width="7" height="1" fill="#FFFFFF"/><rect x="8" y="1" width="1" height="1" fill="#DADADA"/><rect x="0" y="2" width="1" height="1" fill="#92CFD0"/><rect x="1" y="2" width="7" height="1" fill="#FFFFFF"/><rect x="8" y="2" width="1" height="1" fill="#92CFD0"/><rect x="0" y="3" width="1" height="1" fill="#92CFD0"/><rect x="1" y="3" width="7" height="1" fill="#FFFFFF"/><rect x="8" y="3" width="1" height="1" fill="#DADADA"/><rect x="0" y="4" width="1" height="1" fill="#92CFD0"/><rect x="1" y="4" width="7" height="1" fill="#FFFFFF"/><rect x="8" y="4" width="1" height="1" fill="#DADADA"/><rect x="0" y="5" width="1" height="1" fill="#92CFD0"/><rect x="1" y="5" width="7" height="1" fill="#FFFFFF"/><rect x="8" y="5" width="1" height="1" fill="#92CFD0"/><rect x="0" y="6" width="1" height="1" fill="#92CFD0"/><rect x="1" y="6" width="7" height="1" fill="#FFFFFF"/><rect x="8" y="6" width="1" height="1" fill="#DADADA"/><rect x="0" y="7" width="1" height="1" fill="#92CFD0"/><rect x="1" y="7" width="7" height="1" fill="#E2E2E2"/><rect x="8" y="7" width="1" height="1" fill="#DADADA"/><rect x="1" y="8" width="1" height="1" fill="#DADADA"/><rect x="2" y="8" width="5" height="1" fill="#CFCFCF"/><rect x="7" y="8" width="1" height="1" fill="#DADADA"/></svg>
<svg style="position:absolute;left:362px;top:189px;shape-rendering:crispEdges" width="9" height="9" viewBox="0 0 9 9"><path d="M2 4.5 H7 M4.5 2 V7" stroke="#000" stroke-width="1"/></svg>
<svg style="position:absolute;left:385px;top:189px;shape-rendering:crispEdges" width="8" height="11" viewBox="0 0 8 11"><rect x="4" y="0" width="1" height="1" fill="#8C8C8C"/><rect x="3" y="1" width="1" height="1" fill="#8C8C8C"/><rect x="4" y="1" width="1" height="1" fill="#B4D8F8"/><rect x="5" y="1" width="1" height="1" fill="#8C8C8C"/><rect x="2" y="2" width="1" height="1" fill="#8C8C8C"/><rect x="3" y="2" width="1" height="1" fill="#B4D8F8"/><rect x="4" y="2" width="1" height="1" fill="#0000FF"/><rect x="5" y="2" width="1" height="1" fill="#B4D8F8"/><rect x="6" y="2" width="1" height="1" fill="#8C8C8C"/><rect x="1" y="3" width="1" height="1" fill="#8C8C8C"/><rect x="2" y="3" width="1" height="1" fill="#B4D8F8"/><rect x="3" y="3" width="1" height="1" fill="#0000FF"/><rect x="4" y="3" width="1" height="1" fill="#B4D8F8"/><rect x="5" y="3" width="1" height="1" fill="#0000FF"/><rect x="6" y="3" width="1" height="1" fill="#B4D8F8"/><rect x="7" y="3" width="1" height="1" fill="#000000"/><rect x="0" y="4" width="1" height="1" fill="#8C8C8C"/><rect x="1" y="4" width="1" height="1" fill="#B4D8F8"/><rect x="2" y="4" width="1" height="1" fill="#0000FF"/><rect x="3" y="4" width="1" height="1" fill="#B4D8F8"/><rect x="4" y="4" width="1" height="1" fill="#0000FF"/><rect x="5" y="4" width="1" height="1" fill="#B4D8F8"/><rect x="6" y="4" width="2" height="1" fill="#000000"/><rect x="0" y="5" width="1" height="1" fill="#8C8C8C"/><rect x="1" y="5" width="2" height="1" fill="#B4D8F8"/><rect x="3" y="5" width="1" height="1" fill="#0000FF"/><rect x="4" y="5" width="1" height="1" fill="#B4D8F8"/><rect x="5" y="5" width="1" height="1" fill="#000000"/><rect x="6" y="5" width="1" height="1" fill="#8C8C8C"/><rect x="7" y="5" width="1" height="1" fill="#000000"/><rect x="0" y="6" width="1" height="1" fill="#8C8C8C"/><rect x="1" y="6" width="3" height="1" fill="#B4D8F8"/><rect x="4" y="6" width="1" height="1" fill="#000000"/><rect x="5" y="6" width="1" height="1" fill="#8C8C8C"/><rect x="6" y="6" width="2" height="1" fill="#000000"/><rect x="0" y="7" width="1" height="1" fill="#8C8C8C"/><rect x="1" y="7" width="2" height="1" fill="#B4D8F8"/><rect x="3" y="7" width="1" height="1" fill="#000000"/><rect x="4" y="7" width="1" height="1" fill="#8C8C8C"/><rect x="5" y="7" width="2" height="1" fill="#000000"/><rect x="1" y="8" width="1" height="1" fill="#8C8C8C"/><rect x="2" y="8" width="1" height="1" fill="#B4D8F8"/><rect x="3" y="8" width="1" height="1" fill="#000000"/><rect x="4" y="8" width="1" height="1" fill="#8C8C8C"/><rect x="5" y="8" width="1" height="1" fill="#000000"/><rect x="2" y="9" width="3" height="1" fill="#000000"/><rect x="3" y="10" width="1" height="1" fill="#000000"/></svg>
<div class="t" style="left:401px;top:185px;height:19px;line-height:19px;letter-spacing:0.05px">abyRx</div>
<div class="t" style="left:763px;top:186px;height:19px;line-height:19px;letter-spacing:0.05px">ARRAY [0..gvlSettin...</div>
<div style="left:357px;top:223px;width:751px;height:1px;background:#E3E3E3"></div>
<div style="left:760px;top:204px;width:1px;height:19px;background:#E8E8E8"></div>
<div style="left:880px;top:204px;width:1px;height:19px;background:#E8E8E8"></div>
<svg style="position:absolute;left:362px;top:208px;shape-rendering:crispEdges" width="9" height="9" viewBox="0 0 9 9"><rect x="1" y="0" width="7" height="1" fill="#92CFD0"/><rect x="0" y="1" width="1" height="1" fill="#92CFD0"/><rect x="1" y="1" width="7" height="1" fill="#FFFFFF"/><rect x="8" y="1" width="1" height="1" fill="#DADADA"/><rect x="0" y="2" width="1" height="1" fill="#92CFD0"/><rect x="1" y="2" width="7" height="1" fill="#FFFFFF"/><rect x="8" y="2" width="1" height="1" fill="#92CFD0"/><rect x="0" y="3" width="1" height="1" fill="#92CFD0"/><rect x="1" y="3" width="7" height="1" fill="#FFFFFF"/><rect x="8" y="3" width="1" height="1" fill="#DADADA"/><rect x="0" y="4" width="1" height="1" fill="#92CFD0"/><rect x="1" y="4" width="7" height="1" fill="#FFFFFF"/><rect x="8" y="4" width="1" height="1" fill="#DADADA"/><rect x="0" y="5" width="1" height="1" fill="#92CFD0"/><rect x="1" y="5" width="7" height="1" fill="#FFFFFF"/><rect x="8" y="5" width="1" height="1" fill="#92CFD0"/><rect x="0" y="6" width="1" height="1" fill="#92CFD0"/><rect x="1" y="6" width="7" height="1" fill="#FFFFFF"/><rect x="8" y="6" width="1" height="1" fill="#DADADA"/><rect x="0" y="7" width="1" height="1" fill="#92CFD0"/><rect x="1" y="7" width="7" height="1" fill="#E2E2E2"/><rect x="8" y="7" width="1" height="1" fill="#DADADA"/><rect x="1" y="8" width="1" height="1" fill="#DADADA"/><rect x="2" y="8" width="5" height="1" fill="#CFCFCF"/><rect x="7" y="8" width="1" height="1" fill="#DADADA"/></svg>
<svg style="position:absolute;left:362px;top:208px;shape-rendering:crispEdges" width="9" height="9" viewBox="0 0 9 9"><path d="M2 4.5 H7 M4.5 2 V7" stroke="#000" stroke-width="1"/></svg>
<svg style="position:absolute;left:385px;top:208px;shape-rendering:crispEdges" width="8" height="11" viewBox="0 0 8 11"><rect x="4" y="0" width="1" height="1" fill="#8C8C8C"/><rect x="3" y="1" width="1" height="1" fill="#8C8C8C"/><rect x="4" y="1" width="1" height="1" fill="#B4D8F8"/><rect x="5" y="1" width="1" height="1" fill="#8C8C8C"/><rect x="2" y="2" width="1" height="1" fill="#8C8C8C"/><rect x="3" y="2" width="1" height="1" fill="#B4D8F8"/><rect x="4" y="2" width="1" height="1" fill="#0000FF"/><rect x="5" y="2" width="1" height="1" fill="#B4D8F8"/><rect x="6" y="2" width="1" height="1" fill="#8C8C8C"/><rect x="1" y="3" width="1" height="1" fill="#8C8C8C"/><rect x="2" y="3" width="1" height="1" fill="#B4D8F8"/><rect x="3" y="3" width="1" height="1" fill="#0000FF"/><rect x="4" y="3" width="1" height="1" fill="#B4D8F8"/><rect x="5" y="3" width="1" height="1" fill="#0000FF"/><rect x="6" y="3" width="1" height="1" fill="#B4D8F8"/><rect x="7" y="3" width="1" height="1" fill="#000000"/><rect x="0" y="4" width="1" height="1" fill="#8C8C8C"/><rect x="1" y="4" width="1" height="1" fill="#B4D8F8"/><rect x="2" y="4" width="1" height="1" fill="#0000FF"/><rect x="3" y="4" width="1" height="1" fill="#B4D8F8"/><rect x="4" y="4" width="1" height="1" fill="#0000FF"/><rect x="5" y="4" width="1" height="1" fill="#B4D8F8"/><rect x="6" y="4" width="2" height="1" fill="#000000"/><rect x="0" y="5" width="1" height="1" fill="#8C8C8C"/><rect x="1" y="5" width="2" height="1" fill="#B4D8F8"/><rect x="3" y="5" width="1" height="1" fill="#0000FF"/><rect x="4" y="5" width="1" height="1" fill="#B4D8F8"/><rect x="5" y="5" width="1" height="1" fill="#000000"/><rect x="6" y="5" width="1" height="1" fill="#8C8C8C"/><rect x="7" y="5" width="1" height="1" fill="#000000"/><rect x="0" y="6" width="1" height="1" fill="#8C8C8C"/><rect x="1" y="6" width="3" height="1" fill="#B4D8F8"/><rect x="4" y="6" width="1" height="1" fill="#000000"/><rect x="5" y="6" width="1" height="1" fill="#8C8C8C"/><rect x="6" y="6" width="2" height="1" fill="#000000"/><rect x="0" y="7" width="1" height="1" fill="#8C8C8C"/><rect x="1" y="7" width="2" height="1" fill="#B4D8F8"/><rect x="3" y="7" width="1" height="1" fill="#000000"/><rect x="4" y="7" width="1" height="1" fill="#8C8C8C"/><rect x="5" y="7" width="2" height="1" fill="#000000"/><rect x="1" y="8" width="1" height="1" fill="#8C8C8C"/><rect x="2" y="8" width="1" height="1" fill="#B4D8F8"/><rect x="3" y="8" width="1" height="1" fill="#000000"/><rect x="4" y="8" width="1" height="1" fill="#8C8C8C"/><rect x="5" y="8" width="1" height="1" fill="#000000"/><rect x="2" y="9" width="3" height="1" fill="#000000"/><rect x="3" y="10" width="1" height="1" fill="#000000"/></svg>
<div class="t" style="left:401px;top:204px;height:19px;line-height:19px;letter-spacing:0.05px">abyTx</div>
<div class="t" style="left:763px;top:205px;height:19px;line-height:19px;letter-spacing:0.05px">ARRAY [0..gvlSettin...</div>
<div style="left:357px;top:242px;width:751px;height:1px;background:#E3E3E3"></div>
<div style="left:760px;top:223px;width:1px;height:19px;background:#E8E8E8"></div>
<div style="left:880px;top:223px;width:1px;height:19px;background:#E8E8E8"></div>
<svg style="position:absolute;left:385px;top:227px;shape-rendering:crispEdges" width="8" height="11" viewBox="0 0 8 11"><rect x="4" y="0" width="1" height="1" fill="#8C8C8C"/><rect x="3" y="1" width="1" height="1" fill="#8C8C8C"/><rect x="4" y="1" width="1" height="1" fill="#B4D8F8"/><rect x="5" y="1" width="1" height="1" fill="#8C8C8C"/><rect x="2" y="2" width="1" height="1" fill="#8C8C8C"/><rect x="3" y="2" width="1" height="1" fill="#B4D8F8"/><rect x="4" y="2" width="1" height="1" fill="#0000FF"/><rect x="5" y="2" width="1" height="1" fill="#B4D8F8"/><rect x="6" y="2" width="1" height="1" fill="#8C8C8C"/><rect x="1" y="3" width="1" height="1" fill="#8C8C8C"/><rect x="2" y="3" width="1" height="1" fill="#B4D8F8"/><rect x="3" y="3" width="1" height="1" fill="#0000FF"/><rect x="4" y="3" width="1" height="1" fill="#B4D8F8"/><rect x="5" y="3" width="1" height="1" fill="#0000FF"/><rect x="6" y="3" width="1" height="1" fill="#B4D8F8"/><rect x="7" y="3" width="1" height="1" fill="#000000"/><rect x="0" y="4" width="1" height="1" fill="#8C8C8C"/><rect x="1" y="4" width="1" height="1" fill="#B4D8F8"/><rect x="2" y="4" width="1" height="1" fill="#0000FF"/><rect x="3" y="4" width="1" height="1" fill="#B4D8F8"/><rect x="4" y="4" width="1" height="1" fill="#0000FF"/><rect x="5" y="4" width="1" height="1" fill="#B4D8F8"/><rect x="6" y="4" width="2" height="1" fill="#000000"/><rect x="0" y="5" width="1" height="1" fill="#8C8C8C"/><rect x="1" y="5" width="2" height="1" fill="#B4D8F8"/><rect x="3" y="5" width="1" height="1" fill="#0000FF"/><rect x="4" y="5" width="1" height="1" fill="#B4D8F8"/><rect x="5" y="5" width="1" height="1" fill="#000000"/><rect x="6" y="5" width="1" height="1" fill="#8C8C8C"/><rect x="7" y="5" width="1" height="1" fill="#000000"/><rect x="0" y="6" width="1" height="1" fill="#8C8C8C"/><rect x="1" y="6" width="3" height="1" fill="#B4D8F8"/><rect x="4" y="6" width="1" height="1" fill="#000000"/><rect x="5" y="6" width="1" height="1" fill="#8C8C8C"/><rect x="6" y="6" width="2" height="1" fill="#000000"/><rect x="0" y="7" width="1" height="1" fill="#8C8C8C"/><rect x="1" y="7" width="2" height="1" fill="#B4D8F8"/><rect x="3" y="7" width="1" height="1" fill="#000000"/><rect x="4" y="7" width="1" height="1" fill="#8C8C8C"/><rect x="5" y="7" width="2" height="1" fill="#000000"/><rect x="1" y="8" width="1" height="1" fill="#8C8C8C"/><rect x="2" y="8" width="1" height="1" fill="#B4D8F8"/><rect x="3" y="8" width="1" height="1" fill="#000000"/><rect x="4" y="8" width="1" height="1" fill="#8C8C8C"/><rect x="5" y="8" width="1" height="1" fill="#000000"/><rect x="2" y="9" width="3" height="1" fill="#000000"/><rect x="3" y="10" width="1" height="1" fill="#000000"/></svg>
<div class="t" style="left:401px;top:223px;height:19px;line-height:19px;letter-spacing:0.05px">iIndex</div>
<div class="t" style="left:763px;top:224px;height:19px;line-height:19px;letter-spacing:-0.3px">INT</div>
<div class="t" style="left:883px;top:223px;height:19px;line-height:19px;letter-spacing:-0.1px">16</div>
<div style="left:357px;top:261px;width:751px;height:1px;background:#E3E3E3"></div>
<div style="left:760px;top:242px;width:1px;height:19px;background:#E8E8E8"></div>
<div style="left:880px;top:242px;width:1px;height:19px;background:#E8E8E8"></div>
<svg style="position:absolute;left:385px;top:246px;shape-rendering:crispEdges" width="8" height="11" viewBox="0 0 8 11"><rect x="4" y="0" width="1" height="1" fill="#8C8C8C"/><rect x="3" y="1" width="1" height="1" fill="#8C8C8C"/><rect x="4" y="1" width="1" height="1" fill="#B4D8F8"/><rect x="5" y="1" width="1" height="1" fill="#8C8C8C"/><rect x="2" y="2" width="1" height="1" fill="#8C8C8C"/><rect x="3" y="2" width="1" height="1" fill="#B4D8F8"/><rect x="4" y="2" width="1" height="1" fill="#0000FF"/><rect x="5" y="2" width="1" height="1" fill="#B4D8F8"/><rect x="6" y="2" width="1" height="1" fill="#8C8C8C"/><rect x="1" y="3" width="1" height="1" fill="#8C8C8C"/><rect x="2" y="3" width="1" height="1" fill="#B4D8F8"/><rect x="3" y="3" width="1" height="1" fill="#0000FF"/><rect x="4" y="3" width="1" height="1" fill="#B4D8F8"/><rect x="5" y="3" width="1" height="1" fill="#0000FF"/><rect x="6" y="3" width="1" height="1" fill="#B4D8F8"/><rect x="7" y="3" width="1" height="1" fill="#000000"/><rect x="0" y="4" width="1" height="1" fill="#8C8C8C"/><rect x="1" y="4" width="1" height="1" fill="#B4D8F8"/><rect x="2" y="4" width="1" height="1" fill="#0000FF"/><rect x="3" y="4" width="1" height="1" fill="#B4D8F8"/><rect x="4" y="4" width="1" height="1" fill="#0000FF"/><rect x="5" y="4" width="1" height="1" fill="#B4D8F8"/><rect x="6" y="4" width="2" height="1" fill="#000000"/><rect x="0" y="5" width="1" height="1" fill="#8C8C8C"/><rect x="1" y="5" width="2" height="1" fill="#B4D8F8"/><rect x="3" y="5" width="1" height="1" fill="#0000FF"/><rect x="4" y="5" width="1" height="1" fill="#B4D8F8"/><rect x="5" y="5" width="1" height="1" fill="#000000"/><rect x="6" y="5" width="1" height="1" fill="#8C8C8C"/><rect x="7" y="5" width="1" height="1" fill="#000000"/><rect x="0" y="6" width="1" height="1" fill="#8C8C8C"/><rect x="1" y="6" width="3" height="1" fill="#B4D8F8"/><rect x="4" y="6" width="1" height="1" fill="#000000"/><rect x="5" y="6" width="1" height="1" fill="#8C8C8C"/><rect x="6" y="6" width="2" height="1" fill="#000000"/><rect x="0" y="7" width="1" height="1" fill="#8C8C8C"/><rect x="1" y="7" width="2" height="1" fill="#B4D8F8"/><rect x="3" y="7" width="1" height="1" fill="#000000"/><rect x="4" y="7" width="1" height="1" fill="#8C8C8C"/><rect x="5" y="7" width="2" height="1" fill="#000000"/><rect x="1" y="8" width="1" height="1" fill="#8C8C8C"/><rect x="2" y="8" width="1" height="1" fill="#B4D8F8"/><rect x="3" y="8" width="1" height="1" fill="#000000"/><rect x="4" y="8" width="1" height="1" fill="#8C8C8C"/><rect x="5" y="8" width="1" height="1" fill="#000000"/><rect x="2" y="9" width="3" height="1" fill="#000000"/><rect x="3" y="10" width="1" height="1" fill="#000000"/></svg>
<div class="t" style="left:401px;top:242px;height:19px;line-height:19px;letter-spacing:0.05px">xRead</div>
<div class="t" style="left:763px;top:243px;height:19px;line-height:19px;letter-spacing:-0.3px">BOOL</div>
<div style="left:880px;top:243px;width:34px;height:18px;background:#0000FF"></div>
<div class="t" style="left:882px;top:242px;height:19px;line-height:19px;color:#fff;letter-spacing:-0.3px">TRUE</div>
<div style="left:357px;top:280px;width:751px;height:1px;background:#E3E3E3"></div>
<div style="left:760px;top:261px;width:1px;height:19px;background:#E8E8E8"></div>
<div style="left:880px;top:261px;width:1px;height:19px;background:#E8E8E8"></div>
<svg style="position:absolute;left:385px;top:265px;shape-rendering:crispEdges" width="8" height="11" viewBox="0 0 8 11"><rect x="4" y="0" width="1" height="1" fill="#8C8C8C"/><rect x="3" y="1" width="1" height="1" fill="#8C8C8C"/><rect x="4" y="1" width="1" height="1" fill="#B4D8F8"/><rect x="5" y="1" width="1" height="1" fill="#8C8C8C"/><rect x="2" y="2" width="1" height="1" fill="#8C8C8C"/><rect x="3" y="2" width="1" height="1" fill="#B4D8F8"/><rect x="4" y="2" width="1" height="1" fill="#0000FF"/><rect x="5" y="2" width="1" height="1" fill="#B4D8F8"/><rect x="6" y="2" width="1" height="1" fill="#8C8C8C"/><rect x="1" y="3" width="1" height="1" fill="#8C8C8C"/><rect x="2" y="3" width="1" height="1" fill="#B4D8F8"/><rect x="3" y="3" width="1" height="1" fill="#0000FF"/><rect x="4" y="3" width="1" height="1" fill="#B4D8F8"/><rect x="5" y="3" width="1" height="1" fill="#0000FF"/><rect x="6" y="3" width="1" height="1" fill="#B4D8F8"/><rect x="7" y="3" width="1" height="1" fill="#000000"/><rect x="0" y="4" width="1" height="1" fill="#8C8C8C"/><rect x="1" y="4" width="1" height="1" fill="#B4D8F8"/><rect x="2" y="4" width="1" height="1" fill="#0000FF"/><rect x="3" y="4" width="1" height="1" fill="#B4D8F8"/><rect x="4" y="4" width="1" height="1" fill="#0000FF"/><rect x="5" y="4" width="1" height="1" fill="#B4D8F8"/><rect x="6" y="4" width="2" height="1" fill="#000000"/><rect x="0" y="5" width="1" height="1" fill="#8C8C8C"/><rect x="1" y="5" width="2" height="1" fill="#B4D8F8"/><rect x="3" y="5" width="1" height="1" fill="#0000FF"/><rect x="4" y="5" width="1" height="1" fill="#B4D8F8"/><rect x="5" y="5" width="1" height="1" fill="#000000"/><rect x="6" y="5" width="1" height="1" fill="#8C8C8C"/><rect x="7" y="5" width="1" height="1" fill="#000000"/><rect x="0" y="6" width="1" height="1" fill="#8C8C8C"/><rect x="1" y="6" width="3" height="1" fill="#B4D8F8"/><rect x="4" y="6" width="1" height="1" fill="#000000"/><rect x="5" y="6" width="1" height="1" fill="#8C8C8C"/><rect x="6" y="6" width="2" height="1" fill="#000000"/><rect x="0" y="7" width="1" height="1" fill="#8C8C8C"/><rect x="1" y="7" width="2" height="1" fill="#B4D8F8"/><rect x="3" y="7" width="1" height="1" fill="#000000"/><rect x="4" y="7" width="1" height="1" fill="#8C8C8C"/><rect x="5" y="7" width="2" height="1" fill="#000000"/><rect x="1" y="8" width="1" height="1" fill="#8C8C8C"/><rect x="2" y="8" width="1" height="1" fill="#B4D8F8"/><rect x="3" y="8" width="1" height="1" fill="#000000"/><rect x="4" y="8" width="1" height="1" fill="#8C8C8C"/><rect x="5" y="8" width="1" height="1" fill="#000000"/><rect x="2" y="9" width="3" height="1" fill="#000000"/><rect x="3" y="10" width="1" height="1" fill="#000000"/></svg>
<div class="t" style="left:401px;top:261px;height:19px;line-height:19px;letter-spacing:0.05px">xWrite</div>
<div class="t" style="left:763px;top:262px;height:19px;line-height:19px;letter-spacing:-0.3px">BOOL</div>
<div style="left:880px;top:262px;width:37px;height:18px;background:#000"></div>
<div class="t" style="left:882px;top:261px;height:19px;line-height:19px;color:#fff;letter-spacing:-0.5px">FALSE</div>
<div style="left:357px;top:299px;width:751px;height:1px;background:#E3E3E3"></div>
<div style="left:760px;top:280px;width:1px;height:19px;background:#E8E8E8"></div>
<div style="left:880px;top:280px;width:1px;height:19px;background:#E8E8E8"></div>
<svg style="position:absolute;left:385px;top:284px;shape-rendering:crispEdges" width="8" height="11" viewBox="0 0 8 11"><rect x="4" y="0" width="1" height="1" fill="#8C8C8C"/><rect x="3" y="1" width="1" height="1" fill="#8C8C8C"/><rect x="4" y="1" width="1" height="1" fill="#B4D8F8"/><rect x="5" y="1" width="1" height="1" fill="#8C8C8C"/><rect x="2" y="2" width="1" height="1" fill="#8C8C8C"/><rect x="3" y="2" width="1" height="1" fill="#B4D8F8"/><rect x="4" y="2" width="1" height="1" fill="#0000FF"/><rect x="5" y="2" width="1" height="1" fill="#B4D8F8"/><rect x="6" y="2" width="1" height="1" fill="#8C8C8C"/><rect x="1" y="3" width="1" height="1" fill="#8C8C8C"/><rect x="2" y="3" width="1" height="1" fill="#B4D8F8"/><rect x="3" y="3" width="1" height="1" fill="#0000FF"/><rect x="4" y="3" width="1" height="1" fill="#B4D8F8"/><rect x="5" y="3" width="1" height="1" fill="#0000FF"/><rect x="6" y="3" width="1" height="1" fill="#B4D8F8"/><rect x="7" y="3" width="1" height="1" fill="#000000"/><rect x="0" y="4" width="1" height="1" fill="#8C8C8C"/><rect x="1" y="4" width="1" height="1" fill="#B4D8F8"/><rect x="2" y="4" width="1" height="1" fill="#0000FF"/><rect x="3" y="4" width="1" height="1" fill="#B4D8F8"/><rect x="4" y="4" width="1" height="1" fill="#0000FF"/><rect x="5" y="4" width="1" height="1" fill="#B4D8F8"/><rect x="6" y="4" width="2" height="1" fill="#000000"/><rect x="0" y="5" width="1" height="1" fill="#8C8C8C"/><rect x="1" y="5" width="2" height="1" fill="#B4D8F8"/><rect x="3" y="5" width="1" height="1" fill="#0000FF"/><rect x="4" y="5" width="1" height="1" fill="#B4D8F8"/><rect x="5" y="5" width="1" height="1" fill="#000000"/><rect x="6" y="5" width="1" height="1" fill="#8C8C8C"/><rect x="7" y="5" width="1" height="1" fill="#000000"/><rect x="0" y="6" width="1" height="1" fill="#8C8C8C"/><rect x="1" y="6" width="3" height="1" fill="#B4D8F8"/><rect x="4" y="6" width="1" height="1" fill="#000000"/><rect x="5" y="6" width="1" height="1" fill="#8C8C8C"/><rect x="6" y="6" width="2" height="1" fill="#000000"/><rect x="0" y="7" width="1" height="1" fill="#8C8C8C"/><rect x="1" y="7" width="2" height="1" fill="#B4D8F8"/><rect x="3" y="7" width="1" height="1" fill="#000000"/><rect x="4" y="7" width="1" height="1" fill="#8C8C8C"/><rect x="5" y="7" width="2" height="1" fill="#000000"/><rect x="1" y="8" width="1" height="1" fill="#8C8C8C"/><rect x="2" y="8" width="1" height="1" fill="#B4D8F8"/><rect x="3" y="8" width="1" height="1" fill="#000000"/><rect x="4" y="8" width="1" height="1" fill="#8C8C8C"/><rect x="5" y="8" width="1" height="1" fill="#000000"/><rect x="2" y="9" width="3" height="1" fill="#000000"/><rect x="3" y="10" width="1" height="1" fill="#000000"/></svg>
<div class="t" style="left:401px;top:280px;height:19px;line-height:19px;letter-spacing:0.05px">xAckTelegram</div>
<div class="t" style="left:763px;top:281px;height:19px;line-height:19px;letter-spacing:-0.3px">BOOL</div>
<div style="left:880px;top:281px;width:37px;height:18px;background:#000"></div>
<div class="t" style="left:882px;top:280px;height:19px;line-height:19px;color:#fff;letter-spacing:-0.5px">FALSE</div>
<div style="left:357px;top:318px;width:751px;height:1px;background:#E3E3E3"></div>
<div style="left:760px;top:299px;width:1px;height:19px;background:#E8E8E8"></div>
<div style="left:880px;top:299px;width:1px;height:19px;background:#E8E8E8"></div>
<svg style="position:absolute;left:385px;top:303px;shape-rendering:crispEdges" width="8" height="11" viewBox="0 0 8 11"><rect x="4" y="0" width="1" height="1" fill="#8C8C8C"/><rect x="3" y="1" width="1" height="1" fill="#8C8C8C"/><rect x="4" y="1" width="1" height="1" fill="#B4D8F8"/><rect x="5" y="1" width="1" height="1" fill="#8C8C8C"/><rect x="2" y="2" width="1" height="1" fill="#8C8C8C"/><rect x="3" y="2" width="1" height="1" fill="#B4D8F8"/><rect x="4" y="2" width="1" height="1" fill="#0000FF"/><rect x="5" y="2" width="1" height="1" fill="#B4D8F8"/><rect x="6" y="2" width="1" height="1" fill="#8C8C8C"/><rect x="1" y="3" width="1" height="1" fill="#8C8C8C"/><rect x="2" y="3" width="1" height="1" fill="#B4D8F8"/><rect x="3" y="3" width="1" height="1" fill="#0000FF"/><rect x="4" y="3" width="1" height="1" fill="#B4D8F8"/><rect x="5" y="3" width="1" height="1" fill="#0000FF"/><rect x="6" y="3" width="1" height="1" fill="#B4D8F8"/><rect x="7" y="3" width="1" height="1" fill="#000000"/><rect x="0" y="4" width="1" height="1" fill="#8C8C8C"/><rect x="1" y="4" width="1" height="1" fill="#B4D8F8"/><rect x="2" y="4" width="1" height="1" fill="#0000FF"/><rect x="3" y="4" width="1" height="1" fill="#B4D8F8"/><rect x="4" y="4" width="1" height="1" fill="#0000FF"/><rect x="5" y="4" width="1" height="1" fill="#B4D8F8"/><rect x="6" y="4" width="2" height="1" fill="#000000"/><rect x="0" y="5" width="1" height="1" fill="#8C8C8C"/><rect x="1" y="5" width="2" height="1" fill="#B4D8F8"/><rect x="3" y="5" width="1" height="1" fill="#0000FF"/><rect x="4" y="5" width="1" height="1" fill="#B4D8F8"/><rect x="5" y="5" width="1" height="1" fill="#000000"/><rect x="6" y="5" width="1" height="1" fill="#8C8C8C"/><rect x="7" y="5" width="1" height="1" fill="#000000"/><rect x="0" y="6" width="1" height="1" fill="#8C8C8C"/><rect x="1" y="6" width="3" height="1" fill="#B4D8F8"/><rect x="4" y="6" width="1" height="1" fill="#000000"/><rect x="5" y="6" width="1" height="1" fill="#8C8C8C"/><rect x="6" y="6" width="2" height="1" fill="#000000"/><rect x="0" y="7" width="1" height="1" fill="#8C8C8C"/><rect x="1" y="7" width="2" height="1" fill="#B4D8F8"/><rect x="3" y="7" width="1" height="1" fill="#000000"/><rect x="4" y="7" width="1" height="1" fill="#8C8C8C"/><rect x="5" y="7" width="2" height="1" fill="#000000"/><rect x="1" y="8" width="1" height="1" fill="#8C8C8C"/><rect x="2" y="8" width="1" height="1" fill="#B4D8F8"/><rect x="3" y="8" width="1" height="1" fill="#000000"/><rect x="4" y="8" width="1" height="1" fill="#8C8C8C"/><rect x="5" y="8" width="1" height="1" fill="#000000"/><rect x="2" y="9" width="3" height="1" fill="#000000"/><rect x="3" y="10" width="1" height="1" fill="#000000"/></svg>
<div class="t" style="left:401px;top:299px;height:19px;line-height:19px;letter-spacing:0.05px">xBlockAck</div>
<div class="t" style="left:763px;top:300px;height:19px;line-height:19px;letter-spacing:-0.3px">BOOL</div>
<div style="left:880px;top:300px;width:37px;height:18px;background:#000"></div>
<div class="t" style="left:882px;top:299px;height:19px;line-height:19px;color:#fff;letter-spacing:-0.5px">FALSE</div>
<div style="left:377px;top:318px;width:731px;height:19px;background:#F0F0F0"></div>
<div style="left:357px;top:337px;width:751px;height:1px;background:#E3E3E3"></div>
<div style="left:760px;top:318px;width:1px;height:19px;background:#E8E8E8"></div>
<div style="left:880px;top:318px;width:1px;height:19px;background:#E8E8E8"></div>
<svg style="position:absolute;left:385px;top:322px;shape-rendering:crispEdges" width="8" height="11" viewBox="0 0 8 11"><rect x="4" y="0" width="1" height="1" fill="#8C8C8C"/><rect x="3" y="1" width="1" height="1" fill="#8C8C8C"/><rect x="4" y="1" width="1" height="1" fill="#B4D8F8"/><rect x="5" y="1" width="1" height="1" fill="#8C8C8C"/><rect x="2" y="2" width="1" height="1" fill="#8C8C8C"/><rect x="3" y="2" width="1" height="1" fill="#B4D8F8"/><rect x="4" y="2" width="1" height="1" fill="#0000FF"/><rect x="5" y="2" width="1" height="1" fill="#B4D8F8"/><rect x="6" y="2" width="1" height="1" fill="#8C8C8C"/><rect x="1" y="3" width="1" height="1" fill="#8C8C8C"/><rect x="2" y="3" width="1" height="1" fill="#B4D8F8"/><rect x="3" y="3" width="1" height="1" fill="#0000FF"/><rect x="4" y="3" width="1" height="1" fill="#B4D8F8"/><rect x="5" y="3" width="1" height="1" fill="#0000FF"/><rect x="6" y="3" width="1" height="1" fill="#B4D8F8"/><rect x="7" y="3" width="1" height="1" fill="#000000"/><rect x="0" y="4" width="1" height="1" fill="#8C8C8C"/><rect x="1" y="4" width="1" height="1" fill="#B4D8F8"/><rect x="2" y="4" width="1" height="1" fill="#0000FF"/><rect x="3" y="4" width="1" height="1" fill="#B4D8F8"/><rect x="4" y="4" width="1" height="1" fill="#0000FF"/><rect x="5" y="4" width="1" height="1" fill="#B4D8F8"/><rect x="6" y="4" width="2" height="1" fill="#000000"/><rect x="0" y="5" width="1" height="1" fill="#8C8C8C"/><rect x="1" y="5" width="2" height="1" fill="#B4D8F8"/><rect x="3" y="5" width="1" height="1" fill="#0000FF"/><rect x="4" y="5" width="1" height="1" fill="#B4D8F8"/><rect x="5" y="5" width="1" height="1" fill="#000000"/><rect x="6" y="5" width="1" height="1" fill="#8C8C8C"/><rect x="7" y="5" width="1" height="1" fill="#000000"/><rect x="0" y="6" width="1" height="1" fill="#8C8C8C"/><rect x="1" y="6" width="3" height="1" fill="#B4D8F8"/><rect x="4" y="6" width="1" height="1" fill="#000000"/><rect x="5" y="6" width="1" height="1" fill="#8C8C8C"/><rect x="6" y="6" width="2" height="1" fill="#000000"/><rect x="0" y="7" width="1" height="1" fill="#8C8C8C"/><rect x="1" y="7" width="2" height="1" fill="#B4D8F8"/><rect x="3" y="7" width="1" height="1" fill="#000000"/><rect x="4" y="7" width="1" height="1" fill="#8C8C8C"/><rect x="5" y="7" width="2" height="1" fill="#000000"/><rect x="1" y="8" width="1" height="1" fill="#8C8C8C"/><rect x="2" y="8" width="1" height="1" fill="#B4D8F8"/><rect x="3" y="8" width="1" height="1" fill="#000000"/><rect x="4" y="8" width="1" height="1" fill="#8C8C8C"/><rect x="5" y="8" width="1" height="1" fill="#000000"/><rect x="2" y="9" width="3" height="1" fill="#000000"/><rect x="3" y="10" width="1" height="1" fill="#000000"/></svg>
<div class="t" style="left:401px;top:318px;height:19px;line-height:19px;letter-spacing:0.05px">udiRead</div>
<div class="t" style="left:763px;top:319px;height:19px;line-height:19px;letter-spacing:-0.3px">DINT</div>
<div class="t" style="left:883px;top:318px;height:19px;line-height:19px;letter-spacing:-0.1px">0</div>
<div style="left:1108px;top:45px;width:25px;height:333px;background:linear-gradient(to right,#FBFBF7,#E9E8DD 45%,#C9C6AE);border-left:1px solid #9A9A9A;border-right:1px solid #8C8C8C"></div>
<div style="left:1109px;top:46px;width:21px;height:20px;background:#E3E6F2;border:1px solid #4F7FD0"></div>
<svg style="position:absolute;left:1113px;top:50px;" width="13" height="12" viewBox="0 0 13 12"><path d="M1 1.5h6M3 3.5h7M3 5.5h5M3 7.5h7M3 9.5h5" stroke="#222" stroke-width="1"/><path d="M1 1.5h5" stroke="#00f"/><path d="M3 7.5h8" stroke="#0a0"/><path d="M1 11h9" stroke="#00f" stroke-width="1.2"/></svg>
<svg style="position:absolute;left:1113px;top:71px;" width="15" height="15" viewBox="0 0 15 15"><rect x="0.5" y="0.5" width="13" height="13" fill="#fff" stroke="#000"/><rect x="1" y="1" width="12" height="2" fill="#00f"/><path d="M0.5 6h13M0.5 9h13M5 3v10.5M9 3v10.5" stroke="#999"/></svg>
<div style="left:356px;top:361px;width:752px;height:16px;background:#F0F0F0"></div>
<div style="left:374px;top:361px;width:401px;height:16px;background:#CDCDCD"></div>
<svg style="position:absolute;left:362px;top:365px;" width="6" height="8" viewBox="0 0 6 8"><path d="M4.8 0.7 L1.5 4 L4.8 7.3" fill="none" stroke="#5A5A5A" stroke-width="2"/></svg>
<svg style="position:absolute;left:1096px;top:365px;" width="6" height="8" viewBox="0 0 6 8"><path d="M1.2 0.7 L4.5 4 L1.2 7.3" fill="none" stroke="#5A5A5A" stroke-width="2"/></svg>
<div style="left:355px;top:378px;width:778px;height:2px;background:#7C8491"></div>
<div style="left:355px;top:380px;width:778px;height:4px;background:#F0F0F0"></div>
<div style="left:355px;top:384px;width:778px;height:1px;background:#A0A0A0"></div>
<svg style="position:absolute;left:731px;top:380px;" width="10" height="5" viewBox="0 0 10 5"><path d="M0 5 L5 0 L10 5 Z" fill="#A0A0A0"/></svg>
<svg style="position:absolute;left:747px;top:380px;" width="10" height="5" viewBox="0 0 10 5"><path d="M0 0 L10 0 L5 5 Z" fill="#A0A0A0"/></svg>
<div style="left:355px;top:385px;width:778px;height:517px;background:#fff"></div>
<div style="left:402px;top:385px;width:2px;height:517px;background:#008080"></div>
<div style="left:355px;top:385px;width:762px;height:517px;overflow:hidden;">
<div class="c" style="left:6px;top:0px;width:40px;text-align:right;color:#3C78B4;font-size:11.3px;letter-spacing:0px;padding-top:1px">13</div>
<svg style="position:absolute;left:2px;top:4px;" width="10" height="10" viewBox="0 0 10 10"><rect x="0.5" y="0.5" width="8" height="8" fill="none" stroke="#3C7AB6" stroke-width="1"/><line x1="0.5" y1="4.5" x2="8.5" y2="4.5" stroke="#3C7AB6" stroke-width="1"/></svg>
<svg style="position:absolute;left:52px;top:3px;" width="11" height="11" viewBox="0 0 11 11"><circle cx="5.5" cy="5.5" r="4.8" fill="#D2D2D2"/></svg>
<div class="c" style="left:71px;top:0px">    <span style="color:#0000E8;font-weight:bold">IF</span> <span style="color:#6A10F0">(</span><span style="color:#000000">fbTcpRead</span><span style="color:#0000FF">.</span><span style="color:#000000">udiCount</span></div>
<div class="ob" style="left:253px;top:2px;width:67px;">0</div>
<div class="c" style="left:319px;top:0px"> <span style="color:#0000FF">=</span> <span style="color:#6A10F0">(</span><span style="color:#000000">gvlSetting</span><span style="color:#0000FF">.</span><span style="color:#000000">gc_wMaxTelegram</span></div>
<svg style="position:absolute;left:530px;top:3px;" width="11" height="11" viewBox="0 0 11 11"><polygon points="10.78,7.69 7.69,10.78 3.31,10.78 0.22,7.69 0.22,3.31 3.31,0.22 7.69,0.22 10.78,3.31" fill="#007A00"/><text x="5.7" y="9.13" font-family="Liberation Sans" font-size="8.8" fill="#fff" text-anchor="middle">C</text></svg>
<div class="ob" style="left:541px;top:2px;width:43px;">15</div>
<div class="c" style="left:583px;top:0px"> <span style="color:#0000FF">+</span> <span style="color:#808000">1</span><span style="color:#6A10F0">)</span><span style="color:#6A10F0">)</span> <span style="color:#0000E8;font-weight:bold">THEN</span></div>
<div class="c" style="left:6px;top:17px;width:40px;text-align:right;color:#3C78B4;font-size:11.3px;letter-spacing:0px;padding-top:1px">14</div>
<svg style="position:absolute;left:2px;top:21px;" width="10" height="10" viewBox="0 0 10 10"><rect x="0.5" y="0.5" width="8" height="8" fill="none" stroke="#3C7AB6" stroke-width="1"/><line x1="0.5" y1="4.5" x2="8.5" y2="4.5" stroke="#3C7AB6" stroke-width="1"/></svg>
<svg style="position:absolute;left:52px;top:20px;" width="11" height="11" viewBox="0 0 11 11"><circle cx="5.5" cy="5.5" r="4.8" fill="#D2D2D2"/></svg>
<div class="c" style="left:71px;top:17px">        <span style="color:#0000E8;font-weight:bold">IF</span> <span style="color:#6A10F0">(</span><span style="color:#6A10F0">(</span><span style="color:#000000">abyRx</span><span style="color:#6A10F0">[</span><span style="color:#808000">0</span><span style="color:#6A10F0">]</span></div>
<div class="ob" style="left:218px;top:19px;width:25px;">87</div>
<div class="c" style="left:242px;top:17px"> <span style="color:#0000FF">=</span> <span style="color:#808000">87</span><span style="color:#6A10F0">)</span> <span style="color:#0000E8;font-weight:bold">AND</span>  <span style="color:#6A10F0">(</span><span style="color:#000000">abyRx</span><span style="color:#6A10F0">[</span><span style="color:#808000">1</span><span style="color:#6A10F0">]</span></div>
<div class="ob" style="left:389px;top:19px;width:25px;">68</div>
<div class="c" style="left:413px;top:17px"> <span style="color:#0000FF">=</span> <span style="color:#808000">68</span><span style="color:#6A10F0">)</span> <span style="color:#0000E8;font-weight:bold">AND</span> <span style="color:#6A10F0">(</span><span style="color:#000000">abyRx</span><span style="color:#6A10F0">[</span><span style="color:#808000">2</span><span style="color:#6A10F0">]</span></div>
<div class="ob" style="left:553px;top:19px;width:25px;">58</div>
<div class="c" style="left:577px;top:17px"> <span style="color:#0000FF">=</span> <span style="color:#808000">58</span><span style="color:#6A10F0">)</span> <span style="color:#0000E8;font-weight:bold">AND</span> <span style="color:#6A10F0">(</span><span style="color:#000000">abyRx</span><span style="color:#6A10F0">[</span><span style="color:#808000">3</span><span style="color:#6A10F0">]</span></div>
<div class="ob" style="left:717px;top:19px;width:25px;">32</div>
<div class="c" style="left:741px;top:17px"> <span style="color:#0000FF">=</span> <span style="color:#808000">32</span><span style="color:#6A10F0">)</span><span style="color:#6A10F0">)</span></div>
<div class="c" style="left:6px;top:34px;width:40px;text-align:right;color:#3C78B4;font-size:11.3px;letter-spacing:0px;padding-top:1px">15</div>
<svg style="position:absolute;left:2px;top:38px;" width="10" height="10" viewBox="0 0 10 10"><rect x="0.5" y="0.5" width="8" height="8" fill="none" stroke="#3C7AB6" stroke-width="1"/><line x1="0.5" y1="4.5" x2="8.5" y2="4.5" stroke="#3C7AB6" stroke-width="1"/></svg>
<svg style="position:absolute;left:52px;top:37px;" width="11" height="11" viewBox="0 0 11 11"><circle cx="5.5" cy="5.5" r="4.8" fill="#D2D2D2"/></svg>
<div class="c" style="left:71px;top:34px">            <span style="color:#0000E8;font-weight:bold">FOR</span> <span style="color:#000000">iIndex</span></div>
<div class="ob" style="left:225px;top:36px;width:43px;">16</div>
<div class="c" style="left:267px;top:34px"> <span style="color:#0000FF">:</span><span style="color:#0000FF">=</span> <span style="color:#808000">0</span> <span style="color:#0000E8;font-weight:bold">TO</span> <span style="color:#000000">c_wMaxTelegram</span></div>
<svg style="position:absolute;left:429px;top:37px;" width="11" height="11" viewBox="0 0 11 11"><polygon points="10.78,7.69 7.69,10.78 3.31,10.78 0.22,7.69 0.22,3.31 3.31,0.22 7.69,0.22 10.78,3.31" fill="#007A00"/><text x="5.7" y="9.13" font-family="Liberation Sans" font-size="8.8" fill="#fff" text-anchor="middle">C</text></svg>
<div class="ob" style="left:440px;top:36px;width:43px;">15</div>
<div class="c" style="left:482px;top:34px"> <span style="color:#0000E8;font-weight:bold">DO</span></div>
<div class="c" style="left:6px;top:51px;width:40px;text-align:right;color:#3C78B4;font-size:11.3px;letter-spacing:0px;padding-top:1px">16</div>
<svg style="position:absolute;left:52px;top:54px;" width="11" height="11" viewBox="0 0 11 11"><circle cx="5.5" cy="5.5" r="4.8" fill="#D2D2D2"/></svg>
<div class="c" style="left:71px;top:51px">                <span style="color:#000000">abyTx</span><span style="color:#6A10F0">[</span><span style="color:#000000">iIndex</span></div>
<div class="ob" style="left:267px;top:53px;width:43px;">16</div>
<div class="c" style="left:309px;top:51px"><span style="color:#6A10F0">]</span></div>
<div class="ob" style="left:316px;top:53px;width:25px;">???</div>
<div class="c" style="left:340px;top:51px"> <span style="color:#0000FF">:</span><span style="color:#0000FF">=</span> <span style="color:#808000">0</span><span style="color:#0000FF">;</span></div>
<div class="c" style="left:6px;top:68px;width:40px;text-align:right;color:#3C78B4;font-size:11.3px;letter-spacing:0px;padding-top:1px">17</div>
<div class="c" style="left:71px;top:68px">            <span style="color:#0000E8;font-weight:bold">END_FOR</span></div>
<div class="c" style="left:6px;top:85px;width:40px;text-align:right;color:#3C78B4;font-size:11.3px;letter-spacing:0px;padding-top:1px">18</div>
<div class="c" style="left:71px;top:85px">            <span style="color:#008080;font-style:italic">// 'ACK: ' = Acknowledge-Telegram</span></div>
<div class="c" style="left:6px;top:102px;width:40px;text-align:right;color:#3C78B4;font-size:11.3px;letter-spacing:0px;padding-top:1px">19</div>
<svg style="position:absolute;left:52px;top:105px;" width="11" height="11" viewBox="0 0 11 11"><circle cx="5.5" cy="5.5" r="4.8" fill="#D2D2D2"/></svg>
<div class="c" style="left:71px;top:102px">            <span style="color:#000000">abyTx</span><span style="color:#6A10F0">[</span><span style="color:#808000">0</span><span style="color:#6A10F0">]</span></div>
<div class="ob" style="left:211px;top:104px;width:25px;">65</div>
<div class="c" style="left:235px;top:102px"> <span style="color:#0000FF">:</span><span style="color:#0000FF">=</span> <span style="color:#808000">65</span><span style="color:#0000FF">;</span></div>
<div class="c" style="left:6px;top:119px;width:40px;text-align:right;color:#3C78B4;font-size:11.3px;letter-spacing:0px;padding-top:1px">20</div>
<svg style="position:absolute;left:52px;top:122px;" width="11" height="11" viewBox="0 0 11 11"><circle cx="5.5" cy="5.5" r="4.8" fill="#D2D2D2"/></svg>
<div class="c" style="left:71px;top:119px">            <span style="color:#000000">abyTx</span><span style="color:#6A10F0">[</span><span style="color:#808000">1</span><span style="color:#6A10F0">]</span></div>
<div class="ob" style="left:211px;top:121px;width:25px;">67</div>
<div class="c" style="left:235px;top:119px"> <span style="color:#0000FF">:</span><span style="color:#0000FF">=</span> <span style="color:#808000">67</span><span style="color:#0000FF">;</span></div>
<div class="c" style="left:6px;top:136px;width:40px;text-align:right;color:#3C78B4;font-size:11.3px;letter-spacing:0px;padding-top:1px">21</div>
<svg style="position:absolute;left:52px;top:139px;" width="11" height="11" viewBox="0 0 11 11"><circle cx="5.5" cy="5.5" r="4.8" fill="#D2D2D2"/></svg>
<div class="c" style="left:71px;top:136px">            <span style="color:#000000">abyTx</span><span style="color:#6A10F0">[</span><span style="color:#808000">2</span><span style="color:#6A10F0">]</span></div>
<div class="ob" style="left:211px;top:138px;width:25px;">75</div>
<div class="c" style="left:235px;top:136px"> <span style="color:#0000FF">:</span><span style="color:#0000FF">=</span> <span style="color:#808000">75</span><span style="color:#0000FF">;</span></div>
<div class="c" style="left:6px;top:153px;width:40px;text-align:right;color:#3C78B4;font-size:11.3px;letter-spacing:0px;padding-top:1px">22</div>
<svg style="position:absolute;left:52px;top:156px;" width="11" height="11" viewBox="0 0 11 11"><circle cx="5.5" cy="5.5" r="4.8" fill="#D2D2D2"/></svg>
<div class="c" style="left:71px;top:153px">            <span style="color:#000000">abyTx</span><span style="color:#6A10F0">[</span><span style="color:#808000">3</span><span style="color:#6A10F0">]</span></div>
<div class="ob" style="left:211px;top:155px;width:25px;">58</div>
<div class="c" style="left:235px;top:153px"> <span style="color:#0000FF">:</span><span style="color:#0000FF">=</span> <span style="color:#808000">58</span><span style="color:#0000FF">;</span></div>
<div class="c" style="left:6px;top:170px;width:40px;text-align:right;color:#3C78B4;font-size:11.3px;letter-spacing:0px;padding-top:1px">23</div>
<svg style="position:absolute;left:52px;top:173px;" width="11" height="11" viewBox="0 0 11 11"><circle cx="5.5" cy="5.5" r="4.8" fill="#D2D2D2"/></svg>
<div class="c" style="left:71px;top:170px">            <span style="color:#000000">abyTx</span><span style="color:#6A10F0">[</span><span style="color:#808000">4</span><span style="color:#6A10F0">]</span></div>
<div class="ob" style="left:211px;top:172px;width:25px;">32</div>
<div class="c" style="left:235px;top:170px"> <span style="color:#0000FF">:</span><span style="color:#0000FF">=</span> <span style="color:#808000">32</span><span style="color:#0000FF">;</span></div>
<div class="c" style="left:6px;top:187px;width:40px;text-align:right;color:#3C78B4;font-size:11.3px;letter-spacing:0px;padding-top:1px">24</div>
<div class="c" style="left:71px;top:187px">            <span style="color:#008080;font-style:italic">// Receive-Counter</span></div>
<div class="c" style="left:6px;top:204px;width:40px;text-align:right;color:#3C78B4;font-size:11.3px;letter-spacing:0px;padding-top:1px">25</div>
<svg style="position:absolute;left:52px;top:207px;" width="11" height="11" viewBox="0 0 11 11"><circle cx="5.5" cy="5.5" r="4.8" fill="#D2D2D2"/></svg>
<div class="c" style="left:71px;top:204px">            <span style="color:#000000">abyTx</span><span style="color:#6A10F0">[</span><span style="color:#808000">5</span><span style="color:#6A10F0">]</span></div>
<div class="ob" style="left:211px;top:206px;width:25px;">78</div>
<div class="c" style="left:235px;top:204px"> <span style="color:#0000FF">:</span><span style="color:#0000FF">=</span> <span style="color:#000000">abyRx</span><span style="color:#6A10F0">[</span><span style="color:#808000">4</span><span style="color:#6A10F0">]</span></div>
<div class="ob" style="left:319px;top:206px;width:25px;">78</div>
<div class="c" style="left:343px;top:204px"><span style="color:#0000FF">;</span></div>
<div class="c" style="left:6px;top:221px;width:40px;text-align:right;color:#3C78B4;font-size:11.3px;letter-spacing:0px;padding-top:1px">26</div>
<svg style="position:absolute;left:52px;top:224px;" width="11" height="11" viewBox="0 0 11 11"><circle cx="5.5" cy="5.5" r="4.8" fill="#D2D2D2"/></svg>
<div class="c" style="left:71px;top:221px">            <span style="color:#000000">abyTx</span><span style="color:#6A10F0">[</span><span style="color:#808000">6</span><span style="color:#6A10F0">]</span></div>
<div class="ob" style="left:211px;top:223px;width:25px;">4</div>
<div class="c" style="left:235px;top:221px"> <span style="color:#0000FF">:</span><span style="color:#0000FF">=</span> <span style="color:#000000">abyRx</span><span style="color:#6A10F0">[</span><span style="color:#808000">5</span><span style="color:#6A10F0">]</span></div>
<div class="ob" style="left:319px;top:223px;width:25px;">4</div>
<div class="c" style="left:343px;top:221px"><span style="color:#0000FF">;</span></div>
<div class="c" style="left:6px;top:238px;width:40px;text-align:right;color:#3C78B4;font-size:11.3px;letter-spacing:0px;padding-top:1px">27</div>
<svg style="position:absolute;left:52px;top:241px;" width="11" height="11" viewBox="0 0 11 11"><circle cx="5.5" cy="5.5" r="4.8" fill="#D2D2D2"/></svg>
<div class="c" style="left:71px;top:238px">            <span style="color:#000000">abyTx</span><span style="color:#6A10F0">[</span><span style="color:#808000">7</span><span style="color:#6A10F0">]</span></div>
<div class="ob" style="left:211px;top:240px;width:25px;">0</div>
<div class="c" style="left:235px;top:238px"> <span style="color:#0000FF">:</span><span style="color:#0000FF">=</span> <span style="color:#000000">abyRx</span><span style="color:#6A10F0">[</span><span style="color:#808000">6</span><span style="color:#6A10F0">]</span></div>
<div class="ob" style="left:319px;top:240px;width:25px;">0</div>
<div class="c" style="left:343px;top:238px"><span style="color:#0000FF">;</span></div>
<div class="c" style="left:6px;top:255px;width:40px;text-align:right;color:#3C78B4;font-size:11.3px;letter-spacing:0px;padding-top:1px">28</div>
<svg style="position:absolute;left:52px;top:258px;" width="11" height="11" viewBox="0 0 11 11"><circle cx="5.5" cy="5.5" r="4.8" fill="#D2D2D2"/></svg>
<div class="c" style="left:71px;top:255px">            <span style="color:#000000">abyTx</span><span style="color:#6A10F0">[</span><span style="color:#808000">8</span><span style="color:#6A10F0">]</span></div>
<div class="ob" style="left:211px;top:257px;width:25px;">0</div>
<div class="c" style="left:235px;top:255px"> <span style="color:#0000FF">:</span><span style="color:#0000FF">=</span> <span style="color:#000000">abyRx</span><span style="color:#6A10F0">[</span><span style="color:#808000">7</span><span style="color:#6A10F0">]</span></div>
<div class="ob" style="left:319px;top:257px;width:25px;">0</div>
<div class="c" style="left:343px;top:255px"><span style="color:#0000FF">;</span></div>
<div class="c" style="left:6px;top:272px;width:40px;text-align:right;color:#3C78B4;font-size:11.3px;letter-spacing:0px;padding-top:1px">29</div>
<svg style="position:absolute;left:52px;top:275px;" width="11" height="11" viewBox="0 0 11 11"><circle cx="5.5" cy="5.5" r="4.6" fill="#D8D8D8" stroke="#8A0000" stroke-width="1.1"/></svg>
<div class="c" style="left:71px;top:272px">            <span style="color:#000000">xWrite</span></div>
<div class="bb" style="left:198px;top:275px;background:#000000">FALSE</div>
<div class="c" style="left:233px;top:272px"> <span style="color:#0000FF">:</span><span style="color:#0000FF">=</span> <span style="color:#808000">TRUE</span><span style="color:#0000FF">;</span></div>
<div style="left:155px;top:272px;width:142px;height:18px;border:1px solid #FF0000"></div>
<div class="c" style="left:6px;top:289px;width:40px;text-align:right;color:#3C78B4;font-size:11.3px;letter-spacing:0px;padding-top:1px">30</div>
<div class="c" style="left:71px;top:289px">        <span style="color:#0000E8;font-weight:bold">END_IF</span></div>
<div class="c" style="left:6px;top:306px;width:40px;text-align:right;color:#3C78B4;font-size:11.3px;letter-spacing:0px;padding-top:1px">31</div>
<svg style="position:absolute;left:52px;top:309px;" width="11" height="11" viewBox="0 0 11 11"><circle cx="5.5" cy="5.5" r="4.8" fill="#D2D2D2"/></svg>
<div class="c" style="left:71px;top:306px">        <span style="color:#000000">xWrite</span></div>
<div class="bb" style="left:170px;top:309px;background:#000000">FALSE</div>
<div class="c" style="left:205px;top:306px"> <span style="color:#0000FF">:</span><span style="color:#0000FF">=</span> <span style="color:#808000">TRUE</span><span style="color:#0000FF">;</span></div>
<div class="c" style="left:6px;top:323px;width:40px;text-align:right;color:#3C78B4;font-size:11.3px;letter-spacing:0px;padding-top:1px">32</div>
<div class="c" style="left:71px;top:323px">    <span style="color:#0000E8;font-weight:bold">END_IF</span></div>
<div style="left:67px;top:340px;width:695px;height:17px;background:#FFFDE0"></div>
<div class="c" style="left:6px;top:340px;width:40px;text-align:right;color:#E00000;font-size:11.3px;letter-spacing:0px;padding-top:1px">33</div>
<svg style="position:absolute;left:2px;top:344px;" width="10" height="10" viewBox="0 0 10 10"><rect x="0.5" y="0.5" width="8" height="8" fill="none" stroke="#3C7AB6" stroke-width="1"/><line x1="0.5" y1="4.5" x2="8.5" y2="4.5" stroke="#3C7AB6" stroke-width="1"/></svg>
<svg style="position:absolute;left:52px;top:343px;" width="11" height="11" viewBox="0 0 11 11"><circle cx="5.5" cy="5.5" r="4.8" fill="#D2D2D2"/></svg>
<div class="c" style="left:71px;top:340px"><span style="color:#0000E8;font-weight:bold">ELSIF</span> <span style="color:#000000">fbTcpRead</span><span style="color:#0000FF">.</span><span style="color:#000000">xError</span></div>
<div class="bb" style="left:226px;top:343px;background:#000000">FALSE</div>
<div class="c" style="left:261px;top:340px"> <span style="color:#0000E8;font-weight:bold">THEN</span></div>
<div class="c" style="left:6px;top:357px;width:40px;text-align:right;color:#3C78B4;font-size:11.3px;letter-spacing:0px;padding-top:1px">34</div>
<svg style="position:absolute;left:52px;top:360px;" width="11" height="11" viewBox="0 0 11 11"><circle cx="5.5" cy="5.5" r="4.8" fill="#D2D2D2"/></svg>
<div class="c" style="left:71px;top:357px">    <span style="color:#000000">xRead</span></div>
<div class="bb" style="left:135px;top:360px;background:#0000FF">TRUE</div>
<div class="c" style="left:170px;top:357px"> <span style="color:#0000FF">:</span><span style="color:#0000FF">=</span> <span style="color:#808000">FALSE</span><span style="color:#0000FF">;</span></div>
<div class="c" style="left:6px;top:374px;width:40px;text-align:right;color:#3C78B4;font-size:11.3px;letter-spacing:0px;padding-top:1px">35</div>
<div class="c" style="left:71px;top:374px"><span style="color:#0000E8;font-weight:bold">END_IF</span></div>
<div class="c" style="left:6px;top:391px;width:40px;text-align:right;color:#3C78B4;font-size:11.3px;letter-spacing:0px;padding-top:1px">36</div>
<div class="c" style="left:6px;top:408px;width:40px;text-align:right;color:#3C78B4;font-size:11.3px;letter-spacing:0px;padding-top:1px">37</div>
<div class="c" style="left:6px;top:425px;width:40px;text-align:right;color:#3C78B4;font-size:11.3px;letter-spacing:0px;padding-top:1px">38</div>
<svg style="position:absolute;left:52px;top:428px;" width="11" height="11" viewBox="0 0 11 11"><circle cx="5.5" cy="5.5" r="4.8" fill="#D2D2D2"/></svg>
<div class="c" style="left:71px;top:425px"><span style="color:#000000">fbTcpWrite</span><span style="color:#6A10F0">(</span><span style="color:#000000">xExecute</span></div>
<div class="bb" style="left:205px;top:428px;background:#000000">FALSE</div>
<div class="c" style="left:240px;top:425px"> <span style="color:#0000FF">:</span><span style="color:#0000FF">=</span> <span style="color:#000000">xWrite</span></div>
<div class="bb" style="left:311px;top:428px;background:#000000">FALSE</div>
<div class="c" style="left:346px;top:425px"> <span style="color:#0000E8;font-weight:bold">AND</span> <span style="color:#0000E8;font-weight:bold">NOT</span> <span style="color:#000000">xBlockAck</span></div>
<div class="bb" style="left:473px;top:428px;background:#000000">FALSE</div>
<div class="c" style="left:508px;top:425px"><span style="color:#0000FF">,</span> <span style="color:#000000">itfConnection</span> <span style="color:#0000FF">:</span><span style="color:#0000FF">=</span> <span style="color:#000000">fbTcpConnection</span><span style="color:#0000FF">,</span> <span style="color:#000000">udiTimeOut</span> <span style="color:#0000FF">:</span><span style="color:#0000FF">=</span> <span style="color:#808000">0</span></div>
<div class="c" style="left:6px;top:442px;width:40px;text-align:right;color:#3C78B4;font-size:11.3px;letter-spacing:0px;padding-top:1px">39</div>
<svg style="position:absolute;left:2px;top:446px;" width="10" height="10" viewBox="0 0 10 10"><rect x="0.5" y="0.5" width="8" height="8" fill="none" stroke="#3C7AB6" stroke-width="1"/><line x1="0.5" y1="4.5" x2="8.5" y2="4.5" stroke="#3C7AB6" stroke-width="1"/></svg>
<svg style="position:absolute;left:52px;top:445px;" width="11" height="11" viewBox="0 0 11 11"><circle cx="5.5" cy="5.5" r="4.8" fill="#D2D2D2"/></svg>
<div class="c" style="left:71px;top:442px"><span style="color:#0000E8;font-weight:bold">IF</span> <span style="color:#000000">fbTcpWrite</span><span style="color:#0000FF">.</span><span style="color:#000000">xDone</span></div>
<div class="bb" style="left:205px;top:445px;background:#000000">FALSE</div>
<div class="c" style="left:240px;top:442px"> <span style="color:#0000E8;font-weight:bold">OR</span> <span style="color:#000000">fbTcpWrite</span><span style="color:#0000FF">.</span><span style="color:#000000">xError</span></div>
<div class="bb" style="left:388px;top:445px;background:#000000">FALSE</div>
<div class="c" style="left:423px;top:442px"> <span style="color:#0000E8;font-weight:bold">THEN</span></div>
<div class="c" style="left:6px;top:459px;width:40px;text-align:right;color:#3C78B4;font-size:11.3px;letter-spacing:0px;padding-top:1px">40</div>
<svg style="position:absolute;left:52px;top:462px;" width="11" height="11" viewBox="0 0 11 11"><circle cx="5.5" cy="5.5" r="4.8" fill="#D2D2D2"/></svg>
<div class="c" style="left:71px;top:459px">    <span style="color:#000000">xWrite</span></div>
<div class="bb" style="left:142px;top:462px;background:#000000">FALSE</div>
<div class="c" style="left:177px;top:459px"> <span style="color:#0000FF">:</span><span style="color:#0000FF">=</span> <span style="color:#808000">FALSE</span><span style="color:#0000FF">;</span></div>
<div class="c" style="left:6px;top:476px;width:40px;text-align:right;color:#3C78B4;font-size:11.3px;letter-spacing:0px;padding-top:1px">41</div>
<div class="c" style="left:71px;top:476px"><span style="color:#0000E8;font-weight:bold">END_IF</span></div>
<div class="c" style="left:6px;top:493px;width:40px;text-align:right;color:#3C78B4;font-size:11.3px;letter-spacing:0px;padding-top:1px">42</div>
<svg style="position:absolute;left:52px;top:496px;" width="11" height="11" viewBox="0 0 11 11"><circle cx="5.5" cy="5.5" r="4.8" fill="#D2D2D2"/></svg>
<div style="left:71px;top:496px;width:43px;height:12px;background:#DCDCDC;border:1px solid #404040;box-shadow:inset 0 0 0 0.5px #404040;font-size:10px;line-height:10px;text-align:center;color:#222">RETURN</div>
</div>
<div style="left:1117px;top:385px;width:16px;height:517px;background:#F0F0F0"></div>
<div style="left:1118px;top:537px;width:14px;height:336px;background:#CDCDCD"></div>
<svg style="position:absolute;left:1121px;top:391px;" width="8" height="6" viewBox="0 0 8 6"><path d="M0.7 4.8 L4 1.5 L7.3 4.8" fill="none" stroke="#5A5A5A" stroke-width="2"/></svg>
<svg style="position:absolute;left:1121px;top:890px;" width="8" height="6" viewBox="0 0 8 6"><path d="M0.7 1.2 L4 4.5 L7.3 1.2" fill="none" stroke="#5A5A5A" stroke-width="2"/></svg>
<div style="left:1048px;top:881px;width:48px;height:20px;background:#F0F0F0;border:1px solid #A0A0A0"></div>
<div class="t" style="left:1056px;top:881px;height:19px;line-height:19px;font-size:11px">100 %</div>
<div style="left:1096px;top:881px;width:20px;height:20px;background:#F0F0F0;border:1px solid #A0A0A0"></div>
<svg style="position:absolute;left:1099px;top:884px;" width="15" height="15" viewBox="0 0 15 15"><rect x="1" y="4.5" width="8" height="9" fill="#ccc" stroke="#000" stroke-width="1.3"/><circle cx="8" cy="5.5" r="4" fill="#dff" fill-opacity="0.5" stroke="#000" stroke-width="1.3"/><path d="M11 8.5 L14.5 13" stroke="#000" stroke-width="2"/></svg>
<div style="left:355px;top:902px;width:764px;height:14px;background:#F0F0F0"></div>
<div style="left:372px;top:902px;width:355px;height:14px;background:#CDCDCD"></div>
<svg style="position:absolute;left:361px;top:905px;" width="6" height="8" viewBox="0 0 6 8"><path d="M4.8 0.7 L1.5 4 L4.8 7.3" fill="none" stroke="#5A5A5A" stroke-width="2"/></svg>
<svg style="position:absolute;left:1107px;top:905px;" width="6" height="8" viewBox="0 0 6 8"><path d="M1.2 0.7 L4.5 4 L1.2 7.3" fill="none" stroke="#5A5A5A" stroke-width="2"/></svg>
<div style="left:1137px;top:0px;width:779px;height:18px;background:#F0F0F0"></div>
<div style="left:1137px;top:18px;width:779px;height:1px;background:#A9A9A9"></div>
<div style="left:1137px;top:19px;width:779px;height:2px;background:#FFFFFF"></div>
<svg style="position:absolute;left:0px;top:0px;" width="1916" height="20" viewBox="0 0 1916 20"><defs><linearGradient id="g9450" x1="0" y1="0" x2="0" y2="1"><stop offset="0" stop-color="#FFFFFF"/><stop offset="1" stop-color="#FFFFFF"/></linearGradient></defs><polygon points="1140,18.5 1156,1.5 1252,1.5 1255,4 1255,19.5" fill="url(#g9450)" stroke="#A9A9A9" stroke-width="1"/></svg>
<svg style="position:absolute;left:1157px;top:3px;shape-rendering:crispEdges" width="13" height="16" viewBox="0 0 13 16"><rect x="0" y="0" width="10" height="1" fill="#8C8C8C"/><rect x="0" y="1" width="1" height="1" fill="#8C8C8C"/><rect x="1" y="1" width="8" height="1" fill="#FFFFFF"/><rect x="9" y="1" width="2" height="1" fill="#8C8C8C"/><rect x="0" y="2" width="1" height="1" fill="#8C8C8C"/><rect x="1" y="2" width="10" height="1" fill="#FFFFFF"/><rect x="11" y="2" width="1" height="1" fill="#8C8C8C"/><rect x="0" y="3" width="1" height="1" fill="#8C8C8C"/><rect x="1" y="3" width="8" height="1" fill="#FFFFFF"/><rect x="9" y="3" width="4" height="1" fill="#000000"/><rect x="0" y="4" width="1" height="1" fill="#8C8C8C"/><rect x="1" y="4" width="2" height="1" fill="#FFFFFF"/><rect x="3" y="4" width="5" height="1" fill="#0000FF"/><rect x="8" y="4" width="3" height="1" fill="#FFFFFF"/><rect x="11" y="4" width="1" height="1" fill="#E4E4E4"/><rect x="12" y="4" width="1" height="1" fill="#000000"/><rect x="0" y="5" width="1" height="1" fill="#8C8C8C"/><rect x="1" y="5" width="10" height="1" fill="#FFFFFF"/><rect x="11" y="5" width="1" height="1" fill="#E4E4E4"/><rect x="12" y="5" width="1" height="1" fill="#000000"/><rect x="0" y="6" width="1" height="1" fill="#8C8C8C"/><rect x="1" y="6" width="2" height="1" fill="#FFFFFF"/><rect x="3" y="6" width="6" height="1" fill="#0000FF"/><rect x="9" y="6" width="2" height="1" fill="#FFFFFF"/><rect x="11" y="6" width="1" height="1" fill="#E4E4E4"/><rect x="12" y="6" width="1" height="1" fill="#000000"/><rect x="0" y="7" width="1" height="1" fill="#8C8C8C"/><rect x="1" y="7" width="10" height="1" fill="#FFFFFF"/><rect x="11" y="7" width="1" height="1" fill="#E4E4E4"/><rect x="12" y="7" width="1" height="1" fill="#000000"/><rect x="0" y="8" width="1" height="1" fill="#8C8C8C"/><rect x="1" y="8" width="2" height="1" fill="#FFFFFF"/><rect x="3" y="8" width="6" height="1" fill="#0000FF"/><rect x="9" y="8" width="2" height="1" fill="#FFFFFF"/><rect x="11" y="8" width="1" height="1" fill="#E4E4E4"/><rect x="12" y="8" width="1" height="1" fill="#000000"/><rect x="0" y="9" width="1" height="1" fill="#8C8C8C"/><rect x="1" y="9" width="10" height="1" fill="#FFFFFF"/><rect x="11" y="9" width="1" height="1" fill="#E4E4E4"/><rect x="12" y="9" width="1" height="1" fill="#000000"/><rect x="0" y="10" width="1" height="1" fill="#8C8C8C"/><rect x="1" y="10" width="2" height="1" fill="#FFFFFF"/><rect x="3" y="10" width="6" height="1" fill="#0000FF"/><rect x="9" y="10" width="2" height="1" fill="#FFFFFF"/><rect x="11" y="10" width="1" height="1" fill="#E4E4E4"/><rect x="12" y="10" width="1" height="1" fill="#000000"/><rect x="0" y="11" width="1" height="1" fill="#8C8C8C"/><rect x="1" y="11" width="10" height="1" fill="#FFFFFF"/><rect x="11" y="11" width="1" height="1" fill="#E4E4E4"/><rect x="12" y="11" width="1" height="1" fill="#000000"/><rect x="0" y="12" width="1" height="1" fill="#8C8C8C"/><rect x="1" y="12" width="2" height="1" fill="#FFFFFF"/><rect x="3" y="12" width="6" height="1" fill="#0000FF"/><rect x="9" y="12" width="2" height="1" fill="#FFFFFF"/><rect x="11" y="12" width="1" height="1" fill="#E4E4E4"/><rect x="12" y="12" width="1" height="1" fill="#000000"/><rect x="0" y="13" width="1" height="1" fill="#8C8C8C"/><rect x="1" y="13" width="10" height="1" fill="#FFFFFF"/><rect x="11" y="13" width="1" height="1" fill="#E4E4E4"/><rect x="12" y="13" width="1" height="1" fill="#000000"/><rect x="0" y="14" width="1" height="1" fill="#8C8C8C"/><rect x="1" y="14" width="11" height="1" fill="#E4E4E4"/><rect x="12" y="14" width="1" height="1" fill="#000000"/><rect x="0" y="15" width="13" height="1" fill="#000000"/></svg>
<div class="t" style="left:1182px;top:1px;height:19px;line-height:19px;color:#000">TcpClient</div>
<svg style="position:absolute;left:1241px;top:6px;" width="9" height="9" viewBox="0 0 9 9"><path d="M1 1 L8 8 M8 1 L1 8" stroke="#000" stroke-width="2.4"/></svg>
<svg style="position:absolute;left:1901px;top:9px;" width="8" height="5" viewBox="0 0 8 5"><path d="M0 0 H8 L4.0 4 Z" fill="#000"/></svg>
<div style="left:1137px;top:21px;width:779px;height:24px;background:#6A6A6A"></div>
<div class="t" style="left:1156px;top:22px;height:24px;line-height:24px;color:#fff;font-weight:bold;font-size:11.6px">Device.Application.TcpClient</div>
<div style="left:1137px;top:45px;width:735px;height:333px;background:#fff"></div>
<div style="left:1137px;top:45px;width:1px;height:333px;background:#A0A0A0"></div>
<div class="t" style="left:1145px;top:47px;height:25px;line-height:25px;">Expression</div>
<div style="left:1513px;top:46px;width:1px;height:24px;background:#E5E5E5"></div>
<div class="t" style="left:1517px;top:47px;height:25px;line-height:25px;">Type</div>
<div style="left:1633px;top:46px;width:1px;height:24px;background:#E5E5E5"></div>
<div class="t" style="left:1637px;top:47px;height:25px;line-height:25px;">Value</div>
<div style="left:1139px;top:71px;width:733px;height:1px;background:#E3E3E3"></div>
<div style="left:1139px;top:90px;width:733px;height:1px;background:#E3E3E3"></div>
<div style="left:1514px;top:71px;width:1px;height:19px;background:#E8E8E8"></div>
<div style="left:1634px;top:71px;width:1px;height:19px;background:#E8E8E8"></div>
<svg style="position:absolute;left:1144px;top:75px;shape-rendering:crispEdges" width="9" height="9" viewBox="0 0 9 9"><rect x="1" y="0" width="7" height="1" fill="#92CFD0"/><rect x="0" y="1" width="1" height="1" fill="#92CFD0"/><rect x="1" y="1" width="7" height="1" fill="#FFFFFF"/><rect x="8" y="1" width="1" height="1" fill="#DADADA"/><rect x="0" y="2" width="1" height="1" fill="#92CFD0"/><rect x="1" y="2" width="7" height="1" fill="#FFFFFF"/><rect x="8" y="2" width="1" height="1" fill="#92CFD0"/><rect x="0" y="3" width="1" height="1" fill="#92CFD0"/><rect x="1" y="3" width="7" height="1" fill="#FFFFFF"/><rect x="8" y="3" width="1" height="1" fill="#DADADA"/><rect x="0" y="4" width="1" height="1" fill="#92CFD0"/><rect x="1" y="4" width="7" height="1" fill="#FFFFFF"/><rect x="8" y="4" width="1" height="1" fill="#DADADA"/><rect x="0" y="5" width="1" height="1" fill="#92CFD0"/><rect x="1" y="5" width="7" height="1" fill="#FFFFFF"/><rect x="8" y="5" width="1" height="1" fill="#92CFD0"/><rect x="0" y="6" width="1" height="1" fill="#92CFD0"/><rect x="1" y="6" width="7" height="1" fill="#FFFFFF"/><rect x="8" y="6" width="1" height="1" fill="#DADADA"/><rect x="0" y="7" width="1" height="1" fill="#92CFD0"/><rect x="1" y="7" width="7" height="1" fill="#E2E2E2"/><rect x="8" y="7" width="1" height="1" fill="#DADADA"/><rect x="1" y="8" width="1" height="1" fill="#DADADA"/><rect x="2" y="8" width="5" height="1" fill="#CFCFCF"/><rect x="7" y="8" width="1" height="1" fill="#DADADA"/></svg>
<svg style="position:absolute;left:1144px;top:75px;shape-rendering:crispEdges" width="9" height="9" viewBox="0 0 9 9"><path d="M2 4.5 H7 M4.5 2 V7" stroke="#000" stroke-width="1"/></svg>
<svg style="position:absolute;left:1167px;top:75px;shape-rendering:crispEdges" width="8" height="11" viewBox="0 0 8 11"><rect x="4" y="0" width="1" height="1" fill="#8C8C8C"/><rect x="3" y="1" width="1" height="1" fill="#8C8C8C"/><rect x="4" y="1" width="1" height="1" fill="#B4D8F8"/><rect x="5" y="1" width="1" height="1" fill="#8C8C8C"/><rect x="2" y="2" width="1" height="1" fill="#8C8C8C"/><rect x="3" y="2" width="1" height="1" fill="#B4D8F8"/><rect x="4" y="2" width="1" height="1" fill="#0000FF"/><rect x="5" y="2" width="1" height="1" fill="#B4D8F8"/><rect x="6" y="2" width="1" height="1" fill="#8C8C8C"/><rect x="1" y="3" width="1" height="1" fill="#8C8C8C"/><rect x="2" y="3" width="1" height="1" fill="#B4D8F8"/><rect x="3" y="3" width="1" height="1" fill="#0000FF"/><rect x="4" y="3" width="1" height="1" fill="#B4D8F8"/><rect x="5" y="3" width="1" height="1" fill="#0000FF"/><rect x="6" y="3" width="1" height="1" fill="#B4D8F8"/><rect x="7" y="3" width="1" height="1" fill="#000000"/><rect x="0" y="4" width="1" height="1" fill="#8C8C8C"/><rect x="1" y="4" width="1" height="1" fill="#B4D8F8"/><rect x="2" y="4" width="1" height="1" fill="#0000FF"/><rect x="3" y="4" width="1" height="1" fill="#B4D8F8"/><rect x="4" y="4" width="1" height="1" fill="#0000FF"/><rect x="5" y="4" width="1" height="1" fill="#B4D8F8"/><rect x="6" y="4" width="2" height="1" fill="#000000"/><rect x="0" y="5" width="1" height="1" fill="#8C8C8C"/><rect x="1" y="5" width="2" height="1" fill="#B4D8F8"/><rect x="3" y="5" width="1" height="1" fill="#0000FF"/><rect x="4" y="5" width="1" height="1" fill="#B4D8F8"/><rect x="5" y="5" width="1" height="1" fill="#000000"/><rect x="6" y="5" width="1" height="1" fill="#8C8C8C"/><rect x="7" y="5" width="1" height="1" fill="#000000"/><rect x="0" y="6" width="1" height="1" fill="#8C8C8C"/><rect x="1" y="6" width="3" height="1" fill="#B4D8F8"/><rect x="4" y="6" width="1" height="1" fill="#000000"/><rect x="5" y="6" width="1" height="1" fill="#8C8C8C"/><rect x="6" y="6" width="2" height="1" fill="#000000"/><rect x="0" y="7" width="1" height="1" fill="#8C8C8C"/><rect x="1" y="7" width="2" height="1" fill="#B4D8F8"/><rect x="3" y="7" width="1" height="1" fill="#000000"/><rect x="4" y="7" width="1" height="1" fill="#8C8C8C"/><rect x="5" y="7" width="2" height="1" fill="#000000"/><rect x="1" y="8" width="1" height="1" fill="#8C8C8C"/><rect x="2" y="8" width="1" height="1" fill="#B4D8F8"/><rect x="3" y="8" width="1" height="1" fill="#000000"/><rect x="4" y="8" width="1" height="1" fill="#8C8C8C"/><rect x="5" y="8" width="1" height="1" fill="#000000"/><rect x="2" y="9" width="3" height="1" fill="#000000"/><rect x="3" y="10" width="1" height="1" fill="#000000"/></svg>
<div class="t" style="left:1183px;top:71px;height:19px;line-height:19px;letter-spacing:0.05px">fbTcpClient</div>
<div class="t" style="left:1517px;top:72px;height:19px;line-height:19px;letter-spacing:-0.3px">NBS.TCP_Client</div>
<div style="left:1139px;top:109px;width:733px;height:1px;background:#E3E3E3"></div>
<div style="left:1514px;top:90px;width:1px;height:19px;background:#E8E8E8"></div>
<div style="left:1634px;top:90px;width:1px;height:19px;background:#E8E8E8"></div>
<svg style="position:absolute;left:1144px;top:94px;shape-rendering:crispEdges" width="9" height="9" viewBox="0 0 9 9"><rect x="1" y="0" width="7" height="1" fill="#92CFD0"/><rect x="0" y="1" width="1" height="1" fill="#92CFD0"/><rect x="1" y="1" width="7" height="1" fill="#FFFFFF"/><rect x="8" y="1" width="1" height="1" fill="#DADADA"/><rect x="0" y="2" width="1" height="1" fill="#92CFD0"/><rect x="1" y="2" width="7" height="1" fill="#FFFFFF"/><rect x="8" y="2" width="1" height="1" fill="#92CFD0"/><rect x="0" y="3" width="1" height="1" fill="#92CFD0"/><rect x="1" y="3" width="7" height="1" fill="#FFFFFF"/><rect x="8" y="3" width="1" height="1" fill="#DADADA"/><rect x="0" y="4" width="1" height="1" fill="#92CFD0"/><rect x="1" y="4" width="7" height="1" fill="#FFFFFF"/><rect x="8" y="4" width="1" height="1" fill="#DADADA"/><rect x="0" y="5" width="1" height="1" fill="#92CFD0"/><rect x="1" y="5" width="7" height="1" fill="#FFFFFF"/><rect x="8" y="5" width="1" height="1" fill="#92CFD0"/><rect x="0" y="6" width="1" height="1" fill="#92CFD0"/><rect x="1" y="6" width="7" height="1" fill="#FFFFFF"/><rect x="8" y="6" width="1" height="1" fill="#DADADA"/><rect x="0" y="7" width="1" height="1" fill="#92CFD0"/><rect x="1" y="7" width="7" height="1" fill="#E2E2E2"/><rect x="8" y="7" width="1" height="1" fill="#DADADA"/><rect x="1" y="8" width="1" height="1" fill="#DADADA"/><rect x="2" y="8" width="5" height="1" fill="#CFCFCF"/><rect x="7" y="8" width="1" height="1" fill="#DADADA"/></svg>
<svg style="position:absolute;left:1144px;top:94px;shape-rendering:crispEdges" width="9" height="9" viewBox="0 0 9 9"><path d="M2 4.5 H7 M4.5 2 V7" stroke="#000" stroke-width="1"/></svg>
<svg style="position:absolute;left:1167px;top:94px;shape-rendering:crispEdges" width="8" height="11" viewBox="0 0 8 11"><rect x="4" y="0" width="1" height="1" fill="#8C8C8C"/><rect x="3" y="1" width="1" height="1" fill="#8C8C8C"/><rect x="4" y="1" width="1" height="1" fill="#B4D8F8"/><rect x="5" y="1" width="1" height="1" fill="#8C8C8C"/><rect x="2" y="2" width="1" height="1" fill="#8C8C8C"/><rect x="3" y="2" width="1" height="1" fill="#B4D8F8"/><rect x="4" y="2" width="1" height="1" fill="#0000FF"/><rect x="5" y="2" width="1" height="1" fill="#B4D8F8"/><rect x="6" y="2" width="1" height="1" fill="#8C8C8C"/><rect x="1" y="3" width="1" height="1" fill="#8C8C8C"/><rect x="2" y="3" width="1" height="1" fill="#B4D8F8"/><rect x="3" y="3" width="1" height="1" fill="#0000FF"/><rect x="4" y="3" width="1" height="1" fill="#B4D8F8"/><rect x="5" y="3" width="1" height="1" fill="#0000FF"/><rect x="6" y="3" width="1" height="1" fill="#B4D8F8"/><rect x="7" y="3" width="1" height="1" fill="#000000"/><rect x="0" y="4" width="1" height="1" fill="#8C8C8C"/><rect x="1" y="4" width="1" height="1" fill="#B4D8F8"/><rect x="2" y="4" width="1" height="1" fill="#0000FF"/><rect x="3" y="4" width="1" height="1" fill="#B4D8F8"/><rect x="4" y="4" width="1" height="1" fill="#0000FF"/><rect x="5" y="4" width="1" height="1" fill="#B4D8F8"/><rect x="6" y="4" width="2" height="1" fill="#000000"/><rect x="0" y="5" width="1" height="1" fill="#8C8C8C"/><rect x="1" y="5" width="2" height="1" fill="#B4D8F8"/><rect x="3" y="5" width="1" height="1" fill="#0000FF"/><rect x="4" y="5" width="1" height="1" fill="#B4D8F8"/><rect x="5" y="5" width="1" height="1" fill="#000000"/><rect x="6" y="5" width="1" height="1" fill="#8C8C8C"/><rect x="7" y="5" width="1" height="1" fill="#000000"/><rect x="0" y="6" width="1" height="1" fill="#8C8C8C"/><rect x="1" y="6" width="3" height="1" fill="#B4D8F8"/><rect x="4" y="6" width="1" height="1" fill="#000000"/><rect x="5" y="6" width="1" height="1" fill="#8C8C8C"/><rect x="6" y="6" width="2" height="1" fill="#000000"/><rect x="0" y="7" width="1" height="1" fill="#8C8C8C"/><rect x="1" y="7" width="2" height="1" fill="#B4D8F8"/><rect x="3" y="7" width="1" height="1" fill="#000000"/><rect x="4" y="7" width="1" height="1" fill="#8C8C8C"/><rect x="5" y="7" width="2" height="1" fill="#000000"/><rect x="1" y="8" width="1" height="1" fill="#8C8C8C"/><rect x="2" y="8" width="1" height="1" fill="#B4D8F8"/><rect x="3" y="8" width="1" height="1" fill="#000000"/><rect x="4" y="8" width="1" height="1" fill="#8C8C8C"/><rect x="5" y="8" width="1" height="1" fill="#000000"/><rect x="2" y="9" width="3" height="1" fill="#000000"/><rect x="3" y="10" width="1" height="1" fill="#000000"/></svg>
<div class="t" style="left:1183px;top:90px;height:19px;line-height:19px;letter-spacing:0.05px">fbTcpRead</div>
<div class="t" style="left:1517px;top:91px;height:19px;line-height:19px;letter-spacing:-0.3px">NBS.TCP_Read</div>
<div style="left:1139px;top:128px;width:733px;height:1px;background:#E3E3E3"></div>
<div style="left:1514px;top:109px;width:1px;height:19px;background:#E8E8E8"></div>
<div style="left:1634px;top:109px;width:1px;height:19px;background:#E8E8E8"></div>
<svg style="position:absolute;left:1144px;top:113px;shape-rendering:crispEdges" width="9" height="9" viewBox="0 0 9 9"><rect x="1" y="0" width="7" height="1" fill="#92CFD0"/><rect x="0" y="1" width="1" height="1" fill="#92CFD0"/><rect x="1" y="1" width="7" height="1" fill="#FFFFFF"/><rect x="8" y="1" width="1" height="1" fill="#DADADA"/><rect x="0" y="2" width="1" height="1" fill="#92CFD0"/><rect x="1" y="2" width="7" height="1" fill="#FFFFFF"/><rect x="8" y="2" width="1" height="1" fill="#92CFD0"/><rect x="0" y="3" width="1" height="1" fill="#92CFD0"/><rect x="1" y="3" width="7" height="1" fill="#FFFFFF"/><rect x="8" y="3" width="1" height="1" fill="#DADADA"/><rect x="0" y="4" width="1" height="1" fill="#92CFD0"/><rect x="1" y="4" width="7" height="1" fill="#FFFFFF"/><rect x="8" y="4" width="1" height="1" fill="#DADADA"/><rect x="0" y="5" width="1" height="1" fill="#92CFD0"/><rect x="1" y="5" width="7" height="1" fill="#FFFFFF"/><rect x="8" y="5" width="1" height="1" fill="#92CFD0"/><rect x="0" y="6" width="1" height="1" fill="#92CFD0"/><rect x="1" y="6" width="7" height="1" fill="#FFFFFF"/><rect x="8" y="6" width="1" height="1" fill="#DADADA"/><rect x="0" y="7" width="1" height="1" fill="#92CFD0"/><rect x="1" y="7" width="7" height="1" fill="#E2E2E2"/><rect x="8" y="7" width="1" height="1" fill="#DADADA"/><rect x="1" y="8" width="1" height="1" fill="#DADADA"/><rect x="2" y="8" width="5" height="1" fill="#CFCFCF"/><rect x="7" y="8" width="1" height="1" fill="#DADADA"/></svg>
<svg style="position:absolute;left:1144px;top:113px;shape-rendering:crispEdges" width="9" height="9" viewBox="0 0 9 9"><path d="M2 4.5 H7 M4.5 2 V7" stroke="#000" stroke-width="1"/></svg>
<svg style="position:absolute;left:1167px;top:113px;shape-rendering:crispEdges" width="8" height="11" viewBox="0 0 8 11"><rect x="4" y="0" width="1" height="1" fill="#8C8C8C"/><rect x="3" y="1" width="1" height="1" fill="#8C8C8C"/><rect x="4" y="1" width="1" height="1" fill="#B4D8F8"/><rect x="5" y="1" width="1" height="1" fill="#8C8C8C"/><rect x="2" y="2" width="1" height="1" fill="#8C8C8C"/><rect x="3" y="2" width="1" height="1" fill="#B4D8F8"/><rect x="4" y="2" width="1" height="1" fill="#0000FF"/><rect x="5" y="2" width="1" height="1" fill="#B4D8F8"/><rect x="6" y="2" width="1" height="1" fill="#8C8C8C"/><rect x="1" y="3" width="1" height="1" fill="#8C8C8C"/><rect x="2" y="3" width="1" height="1" fill="#B4D8F8"/><rect x="3" y="3" width="1" height="1" fill="#0000FF"/><rect x="4" y="3" width="1" height="1" fill="#B4D8F8"/><rect x="5" y="3" width="1" height="1" fill="#0000FF"/><rect x="6" y="3" width="1" height="1" fill="#B4D8F8"/><rect x="7" y="3" width="1" height="1" fill="#000000"/><rect x="0" y="4" width="1" height="1" fill="#8C8C8C"/><rect x="1" y="4" width="1" height="1" fill="#B4D8F8"/><rect x="2" y="4" width="1" height="1" fill="#0000FF"/><rect x="3" y="4" width="1" height="1" fill="#B4D8F8"/><rect x="4" y="4" width="1" height="1" fill="#0000FF"/><rect x="5" y="4" width="1" height="1" fill="#B4D8F8"/><rect x="6" y="4" width="2" height="1" fill="#000000"/><rect x="0" y="5" width="1" height="1" fill="#8C8C8C"/><rect x="1" y="5" width="2" height="1" fill="#B4D8F8"/><rect x="3" y="5" width="1" height="1" fill="#0000FF"/><rect x="4" y="5" width="1" height="1" fill="#B4D8F8"/><rect x="5" y="5" width="1" height="1" fill="#000000"/><rect x="6" y="5" width="1" height="1" fill="#8C8C8C"/><rect x="7" y="5" width="1" height="1" fill="#000000"/><rect x="0" y="6" width="1" height="1" fill="#8C8C8C"/><rect x="1" y="6" width="3" height="1" fill="#B4D8F8"/><rect x="4" y="6" width="1" height="1" fill="#000000"/><rect x="5" y="6" width="1" height="1" fill="#8C8C8C"/><rect x="6" y="6" width="2" height="1" fill="#000000"/><rect x="0" y="7" width="1" height="1" fill="#8C8C8C"/><rect x="1" y="7" width="2" height="1" fill="#B4D8F8"/><rect x="3" y="7" width="1" height="1" fill="#000000"/><rect x="4" y="7" width="1" height="1" fill="#8C8C8C"/><rect x="5" y="7" width="2" height="1" fill="#000000"/><rect x="1" y="8" width="1" height="1" fill="#8C8C8C"/><rect x="2" y="8" width="1" height="1" fill="#B4D8F8"/><rect x="3" y="8" width="1" height="1" fill="#000000"/><rect x="4" y="8" width="1" height="1" fill="#8C8C8C"/><rect x="5" y="8" width="1" height="1" fill="#000000"/><rect x="2" y="9" width="3" height="1" fill="#000000"/><rect x="3" y="10" width="1" height="1" fill="#000000"/></svg>
<div class="t" style="left:1183px;top:109px;height:19px;line-height:19px;letter-spacing:0.05px">fbTcpWrite</div>
<div class="t" style="left:1517px;top:110px;height:19px;line-height:19px;letter-spacing:-0.3px">NBS.TCP_Write</div>
<div style="left:1139px;top:147px;width:733px;height:1px;background:#E3E3E3"></div>
<div style="left:1514px;top:128px;width:1px;height:19px;background:#E8E8E8"></div>
<div style="left:1634px;top:128px;width:1px;height:19px;background:#E8E8E8"></div>
<svg style="position:absolute;left:1144px;top:132px;shape-rendering:crispEdges" width="9" height="9" viewBox="0 0 9 9"><rect x="1" y="0" width="7" height="1" fill="#92CFD0"/><rect x="0" y="1" width="1" height="1" fill="#92CFD0"/><rect x="1" y="1" width="7" height="1" fill="#FFFFFF"/><rect x="8" y="1" width="1" height="1" fill="#DADADA"/><rect x="0" y="2" width="1" height="1" fill="#92CFD0"/><rect x="1" y="2" width="7" height="1" fill="#FFFFFF"/><rect x="8" y="2" width="1" height="1" fill="#92CFD0"/><rect x="0" y="3" width="1" height="1" fill="#92CFD0"/><rect x="1" y="3" width="7" height="1" fill="#FFFFFF"/><rect x="8" y="3" width="1" height="1" fill="#DADADA"/><rect x="0" y="4" width="1" height="1" fill="#92CFD0"/><rect x="1" y="4" width="7" height="1" fill="#FFFFFF"/><rect x="8" y="4" width="1" height="1" fill="#DADADA"/><rect x="0" y="5" width="1" height="1" fill="#92CFD0"/><rect x="1" y="5" width="7" height="1" fill="#FFFFFF"/><rect x="8" y="5" width="1" height="1" fill="#92CFD0"/><rect x="0" y="6" width="1" height="1" fill="#92CFD0"/><rect x="1" y="6" width="7" height="1" fill="#FFFFFF"/><rect x="8" y="6" width="1" height="1" fill="#DADADA"/><rect x="0" y="7" width="1" height="1" fill="#92CFD0"/><rect x="1" y="7" width="7" height="1" fill="#E2E2E2"/><rect x="8" y="7" width="1" height="1" fill="#DADADA"/><rect x="1" y="8" width="1" height="1" fill="#DADADA"/><rect x="2" y="8" width="5" height="1" fill="#CFCFCF"/><rect x="7" y="8" width="1" height="1" fill="#DADADA"/></svg>
<svg style="position:absolute;left:1144px;top:132px;shape-rendering:crispEdges" width="9" height="9" viewBox="0 0 9 9"><path d="M2 4.5 H7 M4.5 2 V7" stroke="#000" stroke-width="1"/></svg>
<svg style="position:absolute;left:1167px;top:132px;shape-rendering:crispEdges" width="8" height="11" viewBox="0 0 8 11"><rect x="4" y="0" width="1" height="1" fill="#8C8C8C"/><rect x="3" y="1" width="1" height="1" fill="#8C8C8C"/><rect x="4" y="1" width="1" height="1" fill="#B4D8F8"/><rect x="5" y="1" width="1" height="1" fill="#8C8C8C"/><rect x="2" y="2" width="1" height="1" fill="#8C8C8C"/><rect x="3" y="2" width="1" height="1" fill="#B4D8F8"/><rect x="4" y="2" width="1" height="1" fill="#0000FF"/><rect x="5" y="2" width="1" height="1" fill="#B4D8F8"/><rect x="6" y="2" width="1" height="1" fill="#8C8C8C"/><rect x="1" y="3" width="1" height="1" fill="#8C8C8C"/><rect x="2" y="3" width="1" height="1" fill="#B4D8F8"/><rect x="3" y="3" width="1" height="1" fill="#0000FF"/><rect x="4" y="3" width="1" height="1" fill="#B4D8F8"/><rect x="5" y="3" width="1" height="1" fill="#0000FF"/><rect x="6" y="3" width="1" height="1" fill="#B4D8F8"/><rect x="7" y="3" width="1" height="1" fill="#000000"/><rect x="0" y="4" width="1" height="1" fill="#8C8C8C"/><rect x="1" y="4" width="1" height="1" fill="#B4D8F8"/><rect x="2" y="4" width="1" height="1" fill="#0000FF"/><rect x="3" y="4" width="1" height="1" fill="#B4D8F8"/><rect x="4" y="4" width="1" height="1" fill="#0000FF"/><rect x="5" y="4" width="1" height="1" fill="#B4D8F8"/><rect x="6" y="4" width="2" height="1" fill="#000000"/><rect x="0" y="5" width="1" height="1" fill="#8C8C8C"/><rect x="1" y="5" width="2" height="1" fill="#B4D8F8"/><rect x="3" y="5" width="1" height="1" fill="#0000FF"/><rect x="4" y="5" width="1" height="1" fill="#B4D8F8"/><rect x="5" y="5" width="1" height="1" fill="#000000"/><rect x="6" y="5" width="1" height="1" fill="#8C8C8C"/><rect x="7" y="5" width="1" height="1" fill="#000000"/><rect x="0" y="6" width="1" height="1" fill="#8C8C8C"/><rect x="1" y="6" width="3" height="1" fill="#B4D8F8"/><rect x="4" y="6" width="1" height="1" fill="#000000"/><rect x="5" y="6" width="1" height="1" fill="#8C8C8C"/><rect x="6" y="6" width="2" height="1" fill="#000000"/><rect x="0" y="7" width="1" height="1" fill="#8C8C8C"/><rect x="1" y="7" width="2" height="1" fill="#B4D8F8"/><rect x="3" y="7" width="1" height="1" fill="#000000"/><rect x="4" y="7" width="1" height="1" fill="#8C8C8C"/><rect x="5" y="7" width="2" height="1" fill="#000000"/><rect x="1" y="8" width="1" height="1" fill="#8C8C8C"/><rect x="2" y="8" width="1" height="1" fill="#B4D8F8"/><rect x="3" y="8" width="1" height="1" fill="#000000"/><rect x="4" y="8" width="1" height="1" fill="#8C8C8C"/><rect x="5" y="8" width="1" height="1" fill="#000000"/><rect x="2" y="9" width="3" height="1" fill="#000000"/><rect x="3" y="10" width="1" height="1" fill="#000000"/></svg>
<div class="t" style="left:1183px;top:128px;height:19px;line-height:19px;letter-spacing:0.05px">abyTx</div>
<div class="t" style="left:1517px;top:129px;height:19px;line-height:19px;letter-spacing:0.05px">ARRAY [0..gvlSettin...</div>
<div style="left:1139px;top:166px;width:733px;height:1px;background:#E3E3E3"></div>
<div style="left:1514px;top:147px;width:1px;height:19px;background:#E8E8E8"></div>
<div style="left:1634px;top:147px;width:1px;height:19px;background:#E8E8E8"></div>
<svg style="position:absolute;left:1144px;top:151px;shape-rendering:crispEdges" width="9" height="9" viewBox="0 0 9 9"><rect x="1" y="0" width="7" height="1" fill="#92CFD0"/><rect x="0" y="1" width="1" height="1" fill="#92CFD0"/><rect x="1" y="1" width="7" height="1" fill="#FFFFFF"/><rect x="8" y="1" width="1" height="1" fill="#DADADA"/><rect x="0" y="2" width="1" height="1" fill="#92CFD0"/><rect x="1" y="2" width="7" height="1" fill="#FFFFFF"/><rect x="8" y="2" width="1" height="1" fill="#92CFD0"/><rect x="0" y="3" width="1" height="1" fill="#92CFD0"/><rect x="1" y="3" width="7" height="1" fill="#FFFFFF"/><rect x="8" y="3" width="1" height="1" fill="#DADADA"/><rect x="0" y="4" width="1" height="1" fill="#92CFD0"/><rect x="1" y="4" width="7" height="1" fill="#FFFFFF"/><rect x="8" y="4" width="1" height="1" fill="#DADADA"/><rect x="0" y="5" width="1" height="1" fill="#92CFD0"/><rect x="1" y="5" width="7" height="1" fill="#FFFFFF"/><rect x="8" y="5" width="1" height="1" fill="#92CFD0"/><rect x="0" y="6" width="1" height="1" fill="#92CFD0"/><rect x="1" y="6" width="7" height="1" fill="#FFFFFF"/><rect x="8" y="6" width="1" height="1" fill="#DADADA"/><rect x="0" y="7" width="1" height="1" fill="#92CFD0"/><rect x="1" y="7" width="7" height="1" fill="#E2E2E2"/><rect x="8" y="7" width="1" height="1" fill="#DADADA"/><rect x="1" y="8" width="1" height="1" fill="#DADADA"/><rect x="2" y="8" width="5" height="1" fill="#CFCFCF"/><rect x="7" y="8" width="1" height="1" fill="#DADADA"/></svg>
<svg style="position:absolute;left:1144px;top:151px;shape-rendering:crispEdges" width="9" height="9" viewBox="0 0 9 9"><path d="M2 4.5 H7 M4.5 2 V7" stroke="#000" stroke-width="1"/></svg>
<svg style="position:absolute;left:1167px;top:151px;shape-rendering:crispEdges" width="8" height="11" viewBox="0 0 8 11"><rect x="4" y="0" width="1" height="1" fill="#8C8C8C"/><rect x="3" y="1" width="1" height="1" fill="#8C8C8C"/><rect x="4" y="1" width="1" height="1" fill="#B4D8F8"/><rect x="5" y="1" width="1" height="1" fill="#8C8C8C"/><rect x="2" y="2" width="1" height="1" fill="#8C8C8C"/><rect x="3" y="2" width="1" height="1" fill="#B4D8F8"/><rect x="4" y="2" width="1" height="1" fill="#0000FF"/><rect x="5" y="2" width="1" height="1" fill="#B4D8F8"/><rect x="6" y="2" width="1" height="1" fill="#8C8C8C"/><rect x="1" y="3" width="1" height="1" fill="#8C8C8C"/><rect x="2" y="3" width="1" height="1" fill="#B4D8F8"/><rect x="3" y="3" width="1" height="1" fill="#0000FF"/><rect x="4" y="3" width="1" height="1" fill="#B4D8F8"/><rect x="5" y="3" width="1" height="1" fill="#0000FF"/><rect x="6" y="3" width="1" height="1" fill="#B4D8F8"/><rect x="7" y="3" width="1" height="1" fill="#000000"/><rect x="0" y="4" width="1" height="1" fill="#8C8C8C"/><rect x="1" y="4" width="1" height="1" fill="#B4D8F8"/><rect x="2" y="4" width="1" height="1" fill="#0000FF"/><rect x="3" y="4" width="1" height="1" fill="#B4D8F8"/><rect x="4" y="4" width="1" height="1" fill="#0000FF"/><rect x="5" y="4" width="1" height="1" fill="#B4D8F8"/><rect x="6" y="4" width="2" height="1" fill="#000000"/><rect x="0" y="5" width="1" height="1" fill="#8C8C8C"/><rect x="1" y="5" width="2" height="1" fill="#B4D8F8"/><rect x="3" y="5" width="1" height="1" fill="#0000FF"/><rect x="4" y="5" width="1" height="1" fill="#B4D8F8"/><rect x="5" y="5" width="1" height="1" fill="#000000"/><rect x="6" y="5" width="1" height="1" fill="#8C8C8C"/><rect x="7" y="5" width="1" height="1" fill="#000000"/><rect x="0" y="6" width="1" height="1" fill="#8C8C8C"/><rect x="1" y="6" width="3" height="1" fill="#B4D8F8"/><rect x="4" y="6" width="1" height="1" fill="#000000"/><rect x="5" y="6" width="1" height="1" fill="#8C8C8C"/><rect x="6" y="6" width="2" height="1" fill="#000000"/><rect x="0" y="7" width="1" height="1" fill="#8C8C8C"/><rect x="1" y="7" width="2" height="1" fill="#B4D8F8"/><rect x="3" y="7" width="1" height="1" fill="#000000"/><rect x="4" y="7" width="1" height="1" fill="#8C8C8C"/><rect x="5" y="7" width="2" height="1" fill="#000000"/><rect x="1" y="8" width="1" height="1" fill="#8C8C8C"/><rect x="2" y="8" width="1" height="1" fill="#B4D8F8"/><rect x="3" y="8" width="1" height="1" fill="#000000"/><rect x="4" y="8" width="1" height="1" fill="#8C8C8C"/><rect x="5" y="8" width="1" height="1" fill="#000000"/><rect x="2" y="9" width="3" height="1" fill="#000000"/><rect x="3" y="10" width="1" height="1" fill="#000000"/></svg>
<div class="t" style="left:1183px;top:147px;height:19px;line-height:19px;letter-spacing:0.05px">abyRx</div>
<div class="t" style="left:1517px;top:148px;height:19px;line-height:19px;letter-spacing:0.05px">ARRAY [0..gvlSettin...</div>
<div style="left:1139px;top:185px;width:733px;height:1px;background:#E3E3E3"></div>
<div style="left:1514px;top:166px;width:1px;height:19px;background:#E8E8E8"></div>
<div style="left:1634px;top:166px;width:1px;height:19px;background:#E8E8E8"></div>
<svg style="position:absolute;left:1144px;top:170px;shape-rendering:crispEdges" width="9" height="9" viewBox="0 0 9 9"><rect x="1" y="0" width="7" height="1" fill="#92CFD0"/><rect x="0" y="1" width="1" height="1" fill="#92CFD0"/><rect x="1" y="1" width="7" height="1" fill="#FFFFFF"/><rect x="8" y="1" width="1" height="1" fill="#DADADA"/><rect x="0" y="2" width="1" height="1" fill="#92CFD0"/><rect x="1" y="2" width="7" height="1" fill="#FFFFFF"/><rect x="8" y="2" width="1" height="1" fill="#92CFD0"/><rect x="0" y="3" width="1" height="1" fill="#92CFD0"/><rect x="1" y="3" width="7" height="1" fill="#FFFFFF"/><rect x="8" y="3" width="1" height="1" fill="#DADADA"/><rect x="0" y="4" width="1" height="1" fill="#92CFD0"/><rect x="1" y="4" width="7" height="1" fill="#FFFFFF"/><rect x="8" y="4" width="1" height="1" fill="#DADADA"/><rect x="0" y="5" width="1" height="1" fill="#92CFD0"/><rect x="1" y="5" width="7" height="1" fill="#FFFFFF"/><rect x="8" y="5" width="1" height="1" fill="#92CFD0"/><rect x="0" y="6" width="1" height="1" fill="#92CFD0"/><rect x="1" y="6" width="7" height="1" fill="#FFFFFF"/><rect x="8" y="6" width="1" height="1" fill="#DADADA"/><rect x="0" y="7" width="1" height="1" fill="#92CFD0"/><rect x="1" y="7" width="7" height="1" fill="#E2E2E2"/><rect x="8" y="7" width="1" height="1" fill="#DADADA"/><rect x="1" y="8" width="1" height="1" fill="#DADADA"/><rect x="2" y="8" width="5" height="1" fill="#CFCFCF"/><rect x="7" y="8" width="1" height="1" fill="#DADADA"/></svg>
<svg style="position:absolute;left:1144px;top:170px;shape-rendering:crispEdges" width="9" height="9" viewBox="0 0 9 9"><path d="M2 4.5 H7 M4.5 2 V7" stroke="#000" stroke-width="1"/></svg>
<svg style="position:absolute;left:1167px;top:170px;shape-rendering:crispEdges" width="8" height="11" viewBox="0 0 8 11"><rect x="4" y="0" width="1" height="1" fill="#8C8C8C"/><rect x="3" y="1" width="1" height="1" fill="#8C8C8C"/><rect x="4" y="1" width="1" height="1" fill="#B4D8F8"/><rect x="5" y="1" width="1" height="1" fill="#8C8C8C"/><rect x="2" y="2" width="1" height="1" fill="#8C8C8C"/><rect x="3" y="2" width="1" height="1" fill="#B4D8F8"/><rect x="4" y="2" width="1" height="1" fill="#0000FF"/><rect x="5" y="2" width="1" height="1" fill="#B4D8F8"/><rect x="6" y="2" width="1" height="1" fill="#8C8C8C"/><rect x="1" y="3" width="1" height="1" fill="#8C8C8C"/><rect x="2" y="3" width="1" height="1" fill="#B4D8F8"/><rect x="3" y="3" width="1" height="1" fill="#0000FF"/><rect x="4" y="3" width="1" height="1" fill="#B4D8F8"/><rect x="5" y="3" width="1" height="1" fill="#0000FF"/><rect x="6" y="3" width="1" height="1" fill="#B4D8F8"/><rect x="7" y="3" width="1" height="1" fill="#000000"/><rect x="0" y="4" width="1" height="1" fill="#8C8C8C"/><rect x="1" y="4" width="1" height="1" fill="#B4D8F8"/><rect x="2" y="4" width="1" height="1" fill="#0000FF"/><rect x="3" y="4" width="1" height="1" fill="#B4D8F8"/><rect x="4" y="4" width="1" height="1" fill="#0000FF"/><rect x="5" y="4" width="1" height="1" fill="#B4D8F8"/><rect x="6" y="4" width="2" height="1" fill="#000000"/><rect x="0" y="5" width="1" height="1" fill="#8C8C8C"/><rect x="1" y="5" width="2" height="1" fill="#B4D8F8"/><rect x="3" y="5" width="1" height="1" fill="#0000FF"/><rect x="4" y="5" width="1" height="1" fill="#B4D8F8"/><rect x="5" y="5" width="1" height="1" fill="#000000"/><rect x="6" y="5" width="1" height="1" fill="#8C8C8C"/><rect x="7" y="5" width="1" height="1" fill="#000000"/><rect x="0" y="6" width="1" height="1" fill="#8C8C8C"/><rect x="1" y="6" width="3" height="1" fill="#B4D8F8"/><rect x="4" y="6" width="1" height="1" fill="#000000"/><rect x="5" y="6" width="1" height="1" fill="#8C8C8C"/><rect x="6" y="6" width="2" height="1" fill="#000000"/><rect x="0" y="7" width="1" height="1" fill="#8C8C8C"/><rect x="1" y="7" width="2" height="1" fill="#B4D8F8"/><rect x="3" y="7" width="1" height="1" fill="#000000"/><rect x="4" y="7" width="1" height="1" fill="#8C8C8C"/><rect x="5" y="7" width="2" height="1" fill="#000000"/><rect x="1" y="8" width="1" height="1" fill="#8C8C8C"/><rect x="2" y="8" width="1" height="1" fill="#B4D8F8"/><rect x="3" y="8" width="1" height="1" fill="#000000"/><rect x="4" y="8" width="1" height="1" fill="#8C8C8C"/><rect x="5" y="8" width="1" height="1" fill="#000000"/><rect x="2" y="9" width="3" height="1" fill="#000000"/><rect x="3" y="10" width="1" height="1" fill="#000000"/></svg>
<div class="t" style="left:1183px;top:166px;height:19px;line-height:19px;letter-spacing:0.05px">fbBlink</div>
<div class="t" style="left:1517px;top:167px;height:19px;line-height:19px;letter-spacing:-0.3px">BLINK</div>
<div style="left:1139px;top:204px;width:733px;height:1px;background:#E3E3E3"></div>
<div style="left:1514px;top:185px;width:1px;height:19px;background:#E8E8E8"></div>
<div style="left:1634px;top:185px;width:1px;height:19px;background:#E8E8E8"></div>
<svg style="position:absolute;left:1167px;top:189px;shape-rendering:crispEdges" width="8" height="11" viewBox="0 0 8 11"><rect x="4" y="0" width="1" height="1" fill="#8C8C8C"/><rect x="3" y="1" width="1" height="1" fill="#8C8C8C"/><rect x="4" y="1" width="1" height="1" fill="#B4D8F8"/><rect x="5" y="1" width="1" height="1" fill="#8C8C8C"/><rect x="2" y="2" width="1" height="1" fill="#8C8C8C"/><rect x="3" y="2" width="1" height="1" fill="#B4D8F8"/><rect x="4" y="2" width="1" height="1" fill="#0000FF"/><rect x="5" y="2" width="1" height="1" fill="#B4D8F8"/><rect x="6" y="2" width="1" height="1" fill="#8C8C8C"/><rect x="1" y="3" width="1" height="1" fill="#8C8C8C"/><rect x="2" y="3" width="1" height="1" fill="#B4D8F8"/><rect x="3" y="3" width="1" height="1" fill="#0000FF"/><rect x="4" y="3" width="1" height="1" fill="#B4D8F8"/><rect x="5" y="3" width="1" height="1" fill="#0000FF"/><rect x="6" y="3" width="1" height="1" fill="#B4D8F8"/><rect x="7" y="3" width="1" height="1" fill="#000000"/><rect x="0" y="4" width="1" height="1" fill="#8C8C8C"/><rect x="1" y="4" width="1" height="1" fill="#B4D8F8"/><rect x="2" y="4" width="1" height="1" fill="#0000FF"/><rect x="3" y="4" width="1" height="1" fill="#B4D8F8"/><rect x="4" y="4" width="1" height="1" fill="#0000FF"/><rect x="5" y="4" width="1" height="1" fill="#B4D8F8"/><rect x="6" y="4" width="2" height="1" fill="#000000"/><rect x="0" y="5" width="1" height="1" fill="#8C8C8C"/><rect x="1" y="5" width="2" height="1" fill="#B4D8F8"/><rect x="3" y="5" width="1" height="1" fill="#0000FF"/><rect x="4" y="5" width="1" height="1" fill="#B4D8F8"/><rect x="5" y="5" width="1" height="1" fill="#000000"/><rect x="6" y="5" width="1" height="1" fill="#8C8C8C"/><rect x="7" y="5" width="1" height="1" fill="#000000"/><rect x="0" y="6" width="1" height="1" fill="#8C8C8C"/><rect x="1" y="6" width="3" height="1" fill="#B4D8F8"/><rect x="4" y="6" width="1" height="1" fill="#000000"/><rect x="5" y="6" width="1" height="1" fill="#8C8C8C"/><rect x="6" y="6" width="2" height="1" fill="#000000"/><rect x="0" y="7" width="1" height="1" fill="#8C8C8C"/><rect x="1" y="7" width="2" height="1" fill="#B4D8F8"/><rect x="3" y="7" width="1" height="1" fill="#000000"/><rect x="4" y="7" width="1" height="1" fill="#8C8C8C"/><rect x="5" y="7" width="2" height="1" fill="#000000"/><rect x="1" y="8" width="1" height="1" fill="#8C8C8C"/><rect x="2" y="8" width="1" height="1" fill="#B4D8F8"/><rect x="3" y="8" width="1" height="1" fill="#000000"/><rect x="4" y="8" width="1" height="1" fill="#8C8C8C"/><rect x="5" y="8" width="1" height="1" fill="#000000"/><rect x="2" y="9" width="3" height="1" fill="#000000"/><rect x="3" y="10" width="1" height="1" fill="#000000"/></svg>
<div class="t" style="left:1183px;top:185px;height:19px;line-height:19px;letter-spacing:0.05px">xBlink</div>
<div class="t" style="left:1517px;top:186px;height:19px;line-height:19px;letter-spacing:-0.3px">BOOL</div>
<div style="left:1634px;top:186px;width:34px;height:18px;background:#0000FF"></div>
<div class="t" style="left:1636px;top:185px;height:19px;line-height:19px;color:#fff;letter-spacing:-0.3px">TRUE</div>
<div style="left:1139px;top:223px;width:733px;height:1px;background:#E3E3E3"></div>
<div style="left:1514px;top:204px;width:1px;height:19px;background:#E8E8E8"></div>
<div style="left:1634px;top:204px;width:1px;height:19px;background:#E8E8E8"></div>
<svg style="position:absolute;left:1167px;top:208px;shape-rendering:crispEdges" width="8" height="11" viewBox="0 0 8 11"><rect x="4" y="0" width="1" height="1" fill="#8C8C8C"/><rect x="3" y="1" width="1" height="1" fill="#8C8C8C"/><rect x="4" y="1" width="1" height="1" fill="#B4D8F8"/><rect x="5" y="1" width="1" height="1" fill="#8C8C8C"/><rect x="2" y="2" width="1" height="1" fill="#8C8C8C"/><rect x="3" y="2" width="1" height="1" fill="#B4D8F8"/><rect x="4" y="2" width="1" height="1" fill="#0000FF"/><rect x="5" y="2" width="1" height="1" fill="#B4D8F8"/><rect x="6" y="2" width="1" height="1" fill="#8C8C8C"/><rect x="1" y="3" width="1" height="1" fill="#8C8C8C"/><rect x="2" y="3" width="1" height="1" fill="#B4D8F8"/><rect x="3" y="3" width="1" height="1" fill="#0000FF"/><rect x="4" y="3" width="1" height="1" fill="#B4D8F8"/><rect x="5" y="3" width="1" height="1" fill="#0000FF"/><rect x="6" y="3" width="1" height="1" fill="#B4D8F8"/><rect x="7" y="3" width="1" height="1" fill="#000000"/><rect x="0" y="4" width="1" height="1" fill="#8C8C8C"/><rect x="1" y="4" width="1" height="1" fill="#B4D8F8"/><rect x="2" y="4" width="1" height="1" fill="#0000FF"/><rect x="3" y="4" width="1" height="1" fill="#B4D8F8"/><rect x="4" y="4" width="1" height="1" fill="#0000FF"/><rect x="5" y="4" width="1" height="1" fill="#B4D8F8"/><rect x="6" y="4" width="2" height="1" fill="#000000"/><rect x="0" y="5" width="1" height="1" fill="#8C8C8C"/><rect x="1" y="5" width="2" height="1" fill="#B4D8F8"/><rect x="3" y="5" width="1" height="1" fill="#0000FF"/><rect x="4" y="5" width="1" height="1" fill="#B4D8F8"/><rect x="5" y="5" width="1" height="1" fill="#000000"/><rect x="6" y="5" width="1" height="1" fill="#8C8C8C"/><rect x="7" y="5" width="1" height="1" fill="#000000"/><rect x="0" y="6" width="1" height="1" fill="#8C8C8C"/><rect x="1" y="6" width="3" height="1" fill="#B4D8F8"/><rect x="4" y="6" width="1" height="1" fill="#000000"/><rect x="5" y="6" width="1" height="1" fill="#8C8C8C"/><rect x="6" y="6" width="2" height="1" fill="#000000"/><rect x="0" y="7" width="1" height="1" fill="#8C8C8C"/><rect x="1" y="7" width="2" height="1" fill="#B4D8F8"/><rect x="3" y="7" width="1" height="1" fill="#000000"/><rect x="4" y="7" width="1" height="1" fill="#8C8C8C"/><rect x="5" y="7" width="2" height="1" fill="#000000"/><rect x="1" y="8" width="1" height="1" fill="#8C8C8C"/><rect x="2" y="8" width="1" height="1" fill="#B4D8F8"/><rect x="3" y="8" width="1" height="1" fill="#000000"/><rect x="4" y="8" width="1" height="1" fill="#8C8C8C"/><rect x="5" y="8" width="1" height="1" fill="#000000"/><rect x="2" y="9" width="3" height="1" fill="#000000"/><rect x="3" y="10" width="1" height="1" fill="#000000"/></svg>
<div class="t" style="left:1183px;top:204px;height:19px;line-height:19px;letter-spacing:0.05px">udiVal</div>
<div class="t" style="left:1517px;top:205px;height:19px;line-height:19px;letter-spacing:-0.3px">UDINT</div>
<div class="t" style="left:1637px;top:204px;height:19px;line-height:19px;letter-spacing:-0.1px">1102</div>
<div style="left:1139px;top:242px;width:733px;height:1px;background:#E3E3E3"></div>
<div style="left:1514px;top:223px;width:1px;height:19px;background:#E8E8E8"></div>
<div style="left:1634px;top:223px;width:1px;height:19px;background:#E8E8E8"></div>
<svg style="position:absolute;left:1144px;top:227px;shape-rendering:crispEdges" width="9" height="9" viewBox="0 0 9 9"><rect x="1" y="0" width="7" height="1" fill="#92CFD0"/><rect x="0" y="1" width="1" height="1" fill="#92CFD0"/><rect x="1" y="1" width="7" height="1" fill="#FFFFFF"/><rect x="8" y="1" width="1" height="1" fill="#DADADA"/><rect x="0" y="2" width="1" height="1" fill="#92CFD0"/><rect x="1" y="2" width="7" height="1" fill="#FFFFFF"/><rect x="8" y="2" width="1" height="1" fill="#92CFD0"/><rect x="0" y="3" width="1" height="1" fill="#92CFD0"/><rect x="1" y="3" width="7" height="1" fill="#FFFFFF"/><rect x="8" y="3" width="1" height="1" fill="#DADADA"/><rect x="0" y="4" width="1" height="1" fill="#92CFD0"/><rect x="1" y="4" width="7" height="1" fill="#FFFFFF"/><rect x="8" y="4" width="1" height="1" fill="#DADADA"/><rect x="0" y="5" width="1" height="1" fill="#92CFD0"/><rect x="1" y="5" width="7" height="1" fill="#FFFFFF"/><rect x="8" y="5" width="1" height="1" fill="#92CFD0"/><rect x="0" y="6" width="1" height="1" fill="#92CFD0"/><rect x="1" y="6" width="7" height="1" fill="#FFFFFF"/><rect x="8" y="6" width="1" height="1" fill="#DADADA"/><rect x="0" y="7" width="1" height="1" fill="#92CFD0"/><rect x="1" y="7" width="7" height="1" fill="#E2E2E2"/><rect x="8" y="7" width="1" height="1" fill="#DADADA"/><rect x="1" y="8" width="1" height="1" fill="#DADADA"/><rect x="2" y="8" width="5" height="1" fill="#CFCFCF"/><rect x="7" y="8" width="1" height="1" fill="#DADADA"/></svg>
<svg style="position:absolute;left:1144px;top:227px;shape-rendering:crispEdges" width="9" height="9" viewBox="0 0 9 9"><path d="M2 4.5 H7 M4.5 2 V7" stroke="#000" stroke-width="1"/></svg>
<svg style="position:absolute;left:1167px;top:227px;shape-rendering:crispEdges" width="8" height="11" viewBox="0 0 8 11"><rect x="4" y="0" width="1" height="1" fill="#8C8C8C"/><rect x="3" y="1" width="1" height="1" fill="#8C8C8C"/><rect x="4" y="1" width="1" height="1" fill="#B4D8F8"/><rect x="5" y="1" width="1" height="1" fill="#8C8C8C"/><rect x="2" y="2" width="1" height="1" fill="#8C8C8C"/><rect x="3" y="2" width="1" height="1" fill="#B4D8F8"/><rect x="4" y="2" width="1" height="1" fill="#0000FF"/><rect x="5" y="2" width="1" height="1" fill="#B4D8F8"/><rect x="6" y="2" width="1" height="1" fill="#8C8C8C"/><rect x="1" y="3" width="1" height="1" fill="#8C8C8C"/><rect x="2" y="3" width="1" height="1" fill="#B4D8F8"/><rect x="3" y="3" width="1" height="1" fill="#0000FF"/><rect x="4" y="3" width="1" height="1" fill="#B4D8F8"/><rect x="5" y="3" width="1" height="1" fill="#0000FF"/><rect x="6" y="3" width="1" height="1" fill="#B4D8F8"/><rect x="7" y="3" width="1" height="1" fill="#000000"/><rect x="0" y="4" width="1" height="1" fill="#8C8C8C"/><rect x="1" y="4" width="1" height="1" fill="#B4D8F8"/><rect x="2" y="4" width="1" height="1" fill="#0000FF"/><rect x="3" y="4" width="1" height="1" fill="#B4D8F8"/><rect x="4" y="4" width="1" height="1" fill="#0000FF"/><rect x="5" y="4" width="1" height="1" fill="#B4D8F8"/><rect x="6" y="4" width="2" height="1" fill="#000000"/><rect x="0" y="5" width="1" height="1" fill="#8C8C8C"/><rect x="1" y="5" width="2" height="1" fill="#B4D8F8"/><rect x="3" y="5" width="1" height="1" fill="#0000FF"/><rect x="4" y="5" width="1" height="1" fill="#B4D8F8"/><rect x="5" y="5" width="1" height="1" fill="#000000"/><rect x="6" y="5" width="1" height="1" fill="#8C8C8C"/><rect x="7" y="5" width="1" height="1" fill="#000000"/><rect x="0" y="6" width="1" height="1" fill="#8C8C8C"/><rect x="1" y="6" width="3" height="1" fill="#B4D8F8"/><rect x="4" y="6" width="1" height="1" fill="#000000"/><rect x="5" y="6" width="1" height="1" fill="#8C8C8C"/><rect x="6" y="6" width="2" height="1" fill="#000000"/><rect x="0" y="7" width="1" height="1" fill="#8C8C8C"/><rect x="1" y="7" width="2" height="1" fill="#B4D8F8"/><rect x="3" y="7" width="1" height="1" fill="#000000"/><rect x="4" y="7" width="1" height="1" fill="#8C8C8C"/><rect x="5" y="7" width="2" height="1" fill="#000000"/><rect x="1" y="8" width="1" height="1" fill="#8C8C8C"/><rect x="2" y="8" width="1" height="1" fill="#B4D8F8"/><rect x="3" y="8" width="1" height="1" fill="#000000"/><rect x="4" y="8" width="1" height="1" fill="#8C8C8C"/><rect x="5" y="8" width="1" height="1" fill="#000000"/><rect x="2" y="9" width="3" height="1" fill="#000000"/><rect x="3" y="10" width="1" height="1" fill="#000000"/></svg>
<div class="t" style="left:1183px;top:223px;height:19px;line-height:19px;letter-spacing:0.05px">pudiVal</div>
<div class="t" style="left:1517px;top:224px;height:19px;line-height:19px;letter-spacing:-0.65px">POINTER TO BYTE</div>
<div class="t" style="left:1637px;top:223px;height:19px;line-height:19px;letter-spacing:-0.1px">16#000001E8631E6187</div>
<div style="left:1139px;top:261px;width:733px;height:1px;background:#E3E3E3"></div>
<div style="left:1514px;top:242px;width:1px;height:19px;background:#E8E8E8"></div>
<div style="left:1634px;top:242px;width:1px;height:19px;background:#E8E8E8"></div>
<svg style="position:absolute;left:1167px;top:246px;shape-rendering:crispEdges" width="8" height="11" viewBox="0 0 8 11"><rect x="4" y="0" width="1" height="1" fill="#8C8C8C"/><rect x="3" y="1" width="1" height="1" fill="#8C8C8C"/><rect x="4" y="1" width="1" height="1" fill="#B4D8F8"/><rect x="5" y="1" width="1" height="1" fill="#8C8C8C"/><rect x="2" y="2" width="1" height="1" fill="#8C8C8C"/><rect x="3" y="2" width="1" height="1" fill="#B4D8F8"/><rect x="4" y="2" width="1" height="1" fill="#0000FF"/><rect x="5" y="2" width="1" height="1" fill="#B4D8F8"/><rect x="6" y="2" width="1" height="1" fill="#8C8C8C"/><rect x="1" y="3" width="1" height="1" fill="#8C8C8C"/><rect x="2" y="3" width="1" height="1" fill="#B4D8F8"/><rect x="3" y="3" width="1" height="1" fill="#0000FF"/><rect x="4" y="3" width="1" height="1" fill="#B4D8F8"/><rect x="5" y="3" width="1" height="1" fill="#0000FF"/><rect x="6" y="3" width="1" height="1" fill="#B4D8F8"/><rect x="7" y="3" width="1" height="1" fill="#000000"/><rect x="0" y="4" width="1" height="1" fill="#8C8C8C"/><rect x="1" y="4" width="1" height="1" fill="#B4D8F8"/><rect x="2" y="4" width="1" height="1" fill="#0000FF"/><rect x="3" y="4" width="1" height="1" fill="#B4D8F8"/><rect x="4" y="4" width="1" height="1" fill="#0000FF"/><rect x="5" y="4" width="1" height="1" fill="#B4D8F8"/><rect x="6" y="4" width="2" height="1" fill="#000000"/><rect x="0" y="5" width="1" height="1" fill="#8C8C8C"/><rect x="1" y="5" width="2" height="1" fill="#B4D8F8"/><rect x="3" y="5" width="1" height="1" fill="#0000FF"/><rect x="4" y="5" width="1" height="1" fill="#B4D8F8"/><rect x="5" y="5" width="1" height="1" fill="#000000"/><rect x="6" y="5" width="1" height="1" fill="#8C8C8C"/><rect x="7" y="5" width="1" height="1" fill="#000000"/><rect x="0" y="6" width="1" height="1" fill="#8C8C8C"/><rect x="1" y="6" width="3" height="1" fill="#B4D8F8"/><rect x="4" y="6" width="1" height="1" fill="#000000"/><rect x="5" y="6" width="1" height="1" fill="#8C8C8C"/><rect x="6" y="6" width="2" height="1" fill="#000000"/><rect x="0" y="7" width="1" height="1" fill="#8C8C8C"/><rect x="1" y="7" width="2" height="1" fill="#B4D8F8"/><rect x="3" y="7" width="1" height="1" fill="#000000"/><rect x="4" y="7" width="1" height="1" fill="#8C8C8C"/><rect x="5" y="7" width="2" height="1" fill="#000000"/><rect x="1" y="8" width="1" height="1" fill="#8C8C8C"/><rect x="2" y="8" width="1" height="1" fill="#B4D8F8"/><rect x="3" y="8" width="1" height="1" fill="#000000"/><rect x="4" y="8" width="1" height="1" fill="#8C8C8C"/><rect x="5" y="8" width="1" height="1" fill="#000000"/><rect x="2" y="9" width="3" height="1" fill="#000000"/><rect x="3" y="10" width="1" height="1" fill="#000000"/></svg>
<div class="t" style="left:1183px;top:242px;height:19px;line-height:19px;letter-spacing:0.05px">iIndex</div>
<div class="t" style="left:1517px;top:243px;height:19px;line-height:19px;letter-spacing:-0.3px">INT</div>
<div class="t" style="left:1637px;top:242px;height:19px;line-height:19px;letter-spacing:-0.1px">16</div>
<div style="left:1139px;top:280px;width:733px;height:1px;background:#E3E3E3"></div>
<div style="left:1514px;top:261px;width:1px;height:19px;background:#E8E8E8"></div>
<div style="left:1634px;top:261px;width:1px;height:19px;background:#E8E8E8"></div>
<svg style="position:absolute;left:1167px;top:265px;shape-rendering:crispEdges" width="8" height="11" viewBox="0 0 8 11"><rect x="4" y="0" width="1" height="1" fill="#8C8C8C"/><rect x="3" y="1" width="1" height="1" fill="#8C8C8C"/><rect x="4" y="1" width="1" height="1" fill="#B4D8F8"/><rect x="5" y="1" width="1" height="1" fill="#8C8C8C"/><rect x="2" y="2" width="1" height="1" fill="#8C8C8C"/><rect x="3" y="2" width="1" height="1" fill="#B4D8F8"/><rect x="4" y="2" width="1" height="1" fill="#0000FF"/><rect x="5" y="2" width="1" height="1" fill="#B4D8F8"/><rect x="6" y="2" width="1" height="1" fill="#8C8C8C"/><rect x="1" y="3" width="1" height="1" fill="#8C8C8C"/><rect x="2" y="3" width="1" height="1" fill="#B4D8F8"/><rect x="3" y="3" width="1" height="1" fill="#0000FF"/><rect x="4" y="3" width="1" height="1" fill="#B4D8F8"/><rect x="5" y="3" width="1" height="1" fill="#0000FF"/><rect x="6" y="3" width="1" height="1" fill="#B4D8F8"/><rect x="7" y="3" width="1" height="1" fill="#000000"/><rect x="0" y="4" width="1" height="1" fill="#8C8C8C"/><rect x="1" y="4" width="1" height="1" fill="#B4D8F8"/><rect x="2" y="4" width="1" height="1" fill="#0000FF"/><rect x="3" y="4" width="1" height="1" fill="#B4D8F8"/><rect x="4" y="4" width="1" height="1" fill="#0000FF"/><rect x="5" y="4" width="1" height="1" fill="#B4D8F8"/><rect x="6" y="4" width="2" height="1" fill="#000000"/><rect x="0" y="5" width="1" height="1" fill="#8C8C8C"/><rect x="1" y="5" width="2" height="1" fill="#B4D8F8"/><rect x="3" y="5" width="1" height="1" fill="#0000FF"/><rect x="4" y="5" width="1" height="1" fill="#B4D8F8"/><rect x="5" y="5" width="1" height="1" fill="#000000"/><rect x="6" y="5" width="1" height="1" fill="#8C8C8C"/><rect x="7" y="5" width="1" height="1" fill="#000000"/><rect x="0" y="6" width="1" height="1" fill="#8C8C8C"/><rect x="1" y="6" width="3" height="1" fill="#B4D8F8"/><rect x="4" y="6" width="1" height="1" fill="#000000"/><rect x="5" y="6" width="1" height="1" fill="#8C8C8C"/><rect x="6" y="6" width="2" height="1" fill="#000000"/><rect x="0" y="7" width="1" height="1" fill="#8C8C8C"/><rect x="1" y="7" width="2" height="1" fill="#B4D8F8"/><rect x="3" y="7" width="1" height="1" fill="#000000"/><rect x="4" y="7" width="1" height="1" fill="#8C8C8C"/><rect x="5" y="7" width="2" height="1" fill="#000000"/><rect x="1" y="8" width="1" height="1" fill="#8C8C8C"/><rect x="2" y="8" width="1" height="1" fill="#B4D8F8"/><rect x="3" y="8" width="1" height="1" fill="#000000"/><rect x="4" y="8" width="1" height="1" fill="#8C8C8C"/><rect x="5" y="8" width="1" height="1" fill="#000000"/><rect x="2" y="9" width="3" height="1" fill="#000000"/><rect x="3" y="10" width="1" height="1" fill="#000000"/></svg>
<div class="t" style="left:1183px;top:261px;height:19px;line-height:19px;letter-spacing:0.05px">xConnect</div>
<div class="t" style="left:1517px;top:262px;height:19px;line-height:19px;letter-spacing:-0.3px">BOOL</div>
<div style="left:1634px;top:262px;width:34px;height:18px;background:#0000FF"></div>
<div class="t" style="left:1636px;top:261px;height:19px;line-height:19px;color:#fff;letter-spacing:-0.3px">TRUE</div>
<div style="left:1139px;top:299px;width:733px;height:1px;background:#E3E3E3"></div>
<div style="left:1514px;top:280px;width:1px;height:19px;background:#E8E8E8"></div>
<div style="left:1634px;top:280px;width:1px;height:19px;background:#E8E8E8"></div>
<svg style="position:absolute;left:1167px;top:284px;shape-rendering:crispEdges" width="8" height="11" viewBox="0 0 8 11"><rect x="4" y="0" width="1" height="1" fill="#8C8C8C"/><rect x="3" y="1" width="1" height="1" fill="#8C8C8C"/><rect x="4" y="1" width="1" height="1" fill="#B4D8F8"/><rect x="5" y="1" width="1" height="1" fill="#8C8C8C"/><rect x="2" y="2" width="1" height="1" fill="#8C8C8C"/><rect x="3" y="2" width="1" height="1" fill="#B4D8F8"/><rect x="4" y="2" width="1" height="1" fill="#0000FF"/><rect x="5" y="2" width="1" height="1" fill="#B4D8F8"/><rect x="6" y="2" width="1" height="1" fill="#8C8C8C"/><rect x="1" y="3" width="1" height="1" fill="#8C8C8C"/><rect x="2" y="3" width="1" height="1" fill="#B4D8F8"/><rect x="3" y="3" width="1" height="1" fill="#0000FF"/><rect x="4" y="3" width="1" height="1" fill="#B4D8F8"/><rect x="5" y="3" width="1" height="1" fill="#0000FF"/><rect x="6" y="3" width="1" height="1" fill="#B4D8F8"/><rect x="7" y="3" width="1" height="1" fill="#000000"/><rect x="0" y="4" width="1" height="1" fill="#8C8C8C"/><rect x="1" y="4" width="1" height="1" fill="#B4D8F8"/><rect x="2" y="4" width="1" height="1" fill="#0000FF"/><rect x="3" y="4" width="1" height="1" fill="#B4D8F8"/><rect x="4" y="4" width="1" height="1" fill="#0000FF"/><rect x="5" y="4" width="1" height="1" fill="#B4D8F8"/><rect x="6" y="4" width="2" height="1" fill="#000000"/><rect x="0" y="5" width="1" height="1" fill="#8C8C8C"/><rect x="1" y="5" width="2" height="1" fill="#B4D8F8"/><rect x="3" y="5" width="1" height="1" fill="#0000FF"/><rect x="4" y="5" width="1" height="1" fill="#B4D8F8"/><rect x="5" y="5" width="1" height="1" fill="#000000"/><rect x="6" y="5" width="1" height="1" fill="#8C8C8C"/><rect x="7" y="5" width="1" height="1" fill="#000000"/><rect x="0" y="6" width="1" height="1" fill="#8C8C8C"/><rect x="1" y="6" width="3" height="1" fill="#B4D8F8"/><rect x="4" y="6" width="1" height="1" fill="#000000"/><rect x="5" y="6" width="1" height="1" fill="#8C8C8C"/><rect x="6" y="6" width="2" height="1" fill="#000000"/><rect x="0" y="7" width="1" height="1" fill="#8C8C8C"/><rect x="1" y="7" width="2" height="1" fill="#B4D8F8"/><rect x="3" y="7" width="1" height="1" fill="#000000"/><rect x="4" y="7" width="1" height="1" fill="#8C8C8C"/><rect x="5" y="7" width="2" height="1" fill="#000000"/><rect x="1" y="8" width="1" height="1" fill="#8C8C8C"/><rect x="2" y="8" width="1" height="1" fill="#B4D8F8"/><rect x="3" y="8" width="1" height="1" fill="#000000"/><rect x="4" y="8" width="1" height="1" fill="#8C8C8C"/><rect x="5" y="8" width="1" height="1" fill="#000000"/><rect x="2" y="9" width="3" height="1" fill="#000000"/><rect x="3" y="10" width="1" height="1" fill="#000000"/></svg>
<div class="t" style="left:1183px;top:280px;height:19px;line-height:19px;letter-spacing:0.05px">xRead</div>
<div class="t" style="left:1517px;top:281px;height:19px;line-height:19px;letter-spacing:-0.3px">BOOL</div>
<div style="left:1634px;top:281px;width:34px;height:18px;background:#0000FF"></div>
<div class="t" style="left:1636px;top:280px;height:19px;line-height:19px;color:#fff;letter-spacing:-0.3px">TRUE</div>
<div style="left:1139px;top:318px;width:733px;height:1px;background:#E3E3E3"></div>
<div style="left:1514px;top:299px;width:1px;height:19px;background:#E8E8E8"></div>
<div style="left:1634px;top:299px;width:1px;height:19px;background:#E8E8E8"></div>
<svg style="position:absolute;left:1167px;top:303px;shape-rendering:crispEdges" width="8" height="11" viewBox="0 0 8 11"><rect x="4" y="0" width="1" height="1" fill="#8C8C8C"/><rect x="3" y="1" width="1" height="1" fill="#8C8C8C"/><rect x="4" y="1" width="1" height="1" fill="#B4D8F8"/><rect x="5" y="1" width="1" height="1" fill="#8C8C8C"/><rect x="2" y="2" width="1" height="1" fill="#8C8C8C"/><rect x="3" y="2" width="1" height="1" fill="#B4D8F8"/><rect x="4" y="2" width="1" height="1" fill="#0000FF"/><rect x="5" y="2" width="1" height="1" fill="#B4D8F8"/><rect x="6" y="2" width="1" height="1" fill="#8C8C8C"/><rect x="1" y="3" width="1" height="1" fill="#8C8C8C"/><rect x="2" y="3" width="1" height="1" fill="#B4D8F8"/><rect x="3" y="3" width="1" height="1" fill="#0000FF"/><rect x="4" y="3" width="1" height="1" fill="#B4D8F8"/><rect x="5" y="3" width="1" height="1" fill="#0000FF"/><rect x="6" y="3" width="1" height="1" fill="#B4D8F8"/><rect x="7" y="3" width="1" height="1" fill="#000000"/><rect x="0" y="4" width="1" height="1" fill="#8C8C8C"/><rect x="1" y="4" width="1" height="1" fill="#B4D8F8"/><rect x="2" y="4" width="1" height="1" fill="#0000FF"/><rect x="3" y="4" width="1" height="1" fill="#B4D8F8"/><rect x="4" y="4" width="1" height="1" fill="#0000FF"/><rect x="5" y="4" width="1" height="1" fill="#B4D8F8"/><rect x="6" y="4" width="2" height="1" fill="#000000"/><rect x="0" y="5" width="1" height="1" fill="#8C8C8C"/><rect x="1" y="5" width="2" height="1" fill="#B4D8F8"/><rect x="3" y="5" width="1" height="1" fill="#0000FF"/><rect x="4" y="5" width="1" height="1" fill="#B4D8F8"/><rect x="5" y="5" width="1" height="1" fill="#000000"/><rect x="6" y="5" width="1" height="1" fill="#8C8C8C"/><rect x="7" y="5" width="1" height="1" fill="#000000"/><rect x="0" y="6" width="1" height="1" fill="#8C8C8C"/><rect x="1" y="6" width="3" height="1" fill="#B4D8F8"/><rect x="4" y="6" width="1" height="1" fill="#000000"/><rect x="5" y="6" width="1" height="1" fill="#8C8C8C"/><rect x="6" y="6" width="2" height="1" fill="#000000"/><rect x="0" y="7" width="1" height="1" fill="#8C8C8C"/><rect x="1" y="7" width="2" height="1" fill="#B4D8F8"/><rect x="3" y="7" width="1" height="1" fill="#000000"/><rect x="4" y="7" width="1" height="1" fill="#8C8C8C"/><rect x="5" y="7" width="2" height="1" fill="#000000"/><rect x="1" y="8" width="1" height="1" fill="#8C8C8C"/><rect x="2" y="8" width="1" height="1" fill="#B4D8F8"/><rect x="3" y="8" width="1" height="1" fill="#000000"/><rect x="4" y="8" width="1" height="1" fill="#8C8C8C"/><rect x="5" y="8" width="1" height="1" fill="#000000"/><rect x="2" y="9" width="3" height="1" fill="#000000"/><rect x="3" y="10" width="1" height="1" fill="#000000"/></svg>
<div class="t" style="left:1183px;top:299px;height:19px;line-height:19px;letter-spacing:0.05px">xMissingAck</div>
<div class="t" style="left:1517px;top:300px;height:19px;line-height:19px;letter-spacing:-0.3px">BOOL</div>
<div style="left:1634px;top:300px;width:37px;height:18px;background:#000"></div>
<div class="t" style="left:1636px;top:299px;height:19px;line-height:19px;color:#fff;letter-spacing:-0.5px">FALSE</div>
<div style="left:1139px;top:337px;width:733px;height:1px;background:#E3E3E3"></div>
<div style="left:1514px;top:318px;width:1px;height:19px;background:#E8E8E8"></div>
<div style="left:1634px;top:318px;width:1px;height:19px;background:#E8E8E8"></div>
<svg style="position:absolute;left:1167px;top:322px;shape-rendering:crispEdges" width="8" height="11" viewBox="0 0 8 11"><rect x="4" y="0" width="1" height="1" fill="#8C8C8C"/><rect x="3" y="1" width="1" height="1" fill="#8C8C8C"/><rect x="4" y="1" width="1" height="1" fill="#B4D8F8"/><rect x="5" y="1" width="1" height="1" fill="#8C8C8C"/><rect x="2" y="2" width="1" height="1" fill="#8C8C8C"/><rect x="3" y="2" width="1" height="1" fill="#B4D8F8"/><rect x="4" y="2" width="1" height="1" fill="#0000FF"/><rect x="5" y="2" width="1" height="1" fill="#B4D8F8"/><rect x="6" y="2" width="1" height="1" fill="#8C8C8C"/><rect x="1" y="3" width="1" height="1" fill="#8C8C8C"/><rect x="2" y="3" width="1" height="1" fill="#B4D8F8"/><rect x="3" y="3" width="1" height="1" fill="#0000FF"/><rect x="4" y="3" width="1" height="1" fill="#B4D8F8"/><rect x="5" y="3" width="1" height="1" fill="#0000FF"/><rect x="6" y="3" width="1" height="1" fill="#B4D8F8"/><rect x="7" y="3" width="1" height="1" fill="#000000"/><rect x="0" y="4" width="1" height="1" fill="#8C8C8C"/><rect x="1" y="4" width="1" height="1" fill="#B4D8F8"/><rect x="2" y="4" width="1" height="1" fill="#0000FF"/><rect x="3" y="4" width="1" height="1" fill="#B4D8F8"/><rect x="4" y="4" width="1" height="1" fill="#0000FF"/><rect x="5" y="4" width="1" height="1" fill="#B4D8F8"/><rect x="6" y="4" width="2" height="1" fill="#000000"/><rect x="0" y="5" width="1" height="1" fill="#8C8C8C"/><rect x="1" y="5" width="2" height="1" fill="#B4D8F8"/><rect x="3" y="5" width="1" height="1" fill="#0000FF"/><rect x="4" y="5" width="1" height="1" fill="#B4D8F8"/><rect x="5" y="5" width="1" height="1" fill="#000000"/><rect x="6" y="5" width="1" height="1" fill="#8C8C8C"/><rect x="7" y="5" width="1" height="1" fill="#000000"/><rect x="0" y="6" width="1" height="1" fill="#8C8C8C"/><rect x="1" y="6" width="3" height="1" fill="#B4D8F8"/><rect x="4" y="6" width="1" height="1" fill="#000000"/><rect x="5" y="6" width="1" height="1" fill="#8C8C8C"/><rect x="6" y="6" width="2" height="1" fill="#000000"/><rect x="0" y="7" width="1" height="1" fill="#8C8C8C"/><rect x="1" y="7" width="2" height="1" fill="#B4D8F8"/><rect x="3" y="7" width="1" height="1" fill="#000000"/><rect x="4" y="7" width="1" height="1" fill="#8C8C8C"/><rect x="5" y="7" width="2" height="1" fill="#000000"/><rect x="1" y="8" width="1" height="1" fill="#8C8C8C"/><rect x="2" y="8" width="1" height="1" fill="#B4D8F8"/><rect x="3" y="8" width="1" height="1" fill="#000000"/><rect x="4" y="8" width="1" height="1" fill="#8C8C8C"/><rect x="5" y="8" width="1" height="1" fill="#000000"/><rect x="2" y="9" width="3" height="1" fill="#000000"/><rect x="3" y="10" width="1" height="1" fill="#000000"/></svg>
<div class="t" style="left:1183px;top:318px;height:19px;line-height:19px;letter-spacing:0.05px">udiResult</div>
<div class="t" style="left:1517px;top:319px;height:19px;line-height:19px;letter-spacing:-0.3px">UDINT</div>
<div class="t" style="left:1637px;top:318px;height:19px;line-height:19px;letter-spacing:-0.1px">0</div>
<div style="left:1139px;top:356px;width:733px;height:1px;background:#E3E3E3"></div>
<div style="left:1514px;top:337px;width:1px;height:19px;background:#E8E8E8"></div>
<div style="left:1634px;top:337px;width:1px;height:19px;background:#E8E8E8"></div>
<svg style="position:absolute;left:1167px;top:341px;shape-rendering:crispEdges" width="8" height="11" viewBox="0 0 8 11"><rect x="4" y="0" width="1" height="1" fill="#8C8C8C"/><rect x="3" y="1" width="1" height="1" fill="#8C8C8C"/><rect x="4" y="1" width="1" height="1" fill="#B4D8F8"/><rect x="5" y="1" width="1" height="1" fill="#8C8C8C"/><rect x="2" y="2" width="1" height="1" fill="#8C8C8C"/><rect x="3" y="2" width="1" height="1" fill="#B4D8F8"/><rect x="4" y="2" width="1" height="1" fill="#0000FF"/><rect x="5" y="2" width="1" height="1" fill="#B4D8F8"/><rect x="6" y="2" width="1" height="1" fill="#8C8C8C"/><rect x="1" y="3" width="1" height="1" fill="#8C8C8C"/><rect x="2" y="3" width="1" height="1" fill="#B4D8F8"/><rect x="3" y="3" width="1" height="1" fill="#0000FF"/><rect x="4" y="3" width="1" height="1" fill="#B4D8F8"/><rect x="5" y="3" width="1" height="1" fill="#0000FF"/><rect x="6" y="3" width="1" height="1" fill="#B4D8F8"/><rect x="7" y="3" width="1" height="1" fill="#000000"/><rect x="0" y="4" width="1" height="1" fill="#8C8C8C"/><rect x="1" y="4" width="1" height="1" fill="#B4D8F8"/><rect x="2" y="4" width="1" height="1" fill="#0000FF"/><rect x="3" y="4" width="1" height="1" fill="#B4D8F8"/><rect x="4" y="4" width="1" height="1" fill="#0000FF"/><rect x="5" y="4" width="1" height="1" fill="#B4D8F8"/><rect x="6" y="4" width="2" height="1" fill="#000000"/><rect x="0" y="5" width="1" height="1" fill="#8C8C8C"/><rect x="1" y="5" width="2" height="1" fill="#B4D8F8"/><rect x="3" y="5" width="1" height="1" fill="#0000FF"/><rect x="4" y="5" width="1" height="1" fill="#B4D8F8"/><rect x="5" y="5" width="1" height="1" fill="#000000"/><rect x="6" y="5" width="1" height="1" fill="#8C8C8C"/><rect x="7" y="5" width="1" height="1" fill="#000000"/><rect x="0" y="6" width="1" height="1" fill="#8C8C8C"/><rect x="1" y="6" width="3" height="1" fill="#B4D8F8"/><rect x="4" y="6" width="1" height="1" fill="#000000"/><rect x="5" y="6" width="1" height="1" fill="#8C8C8C"/><rect x="6" y="6" width="2" height="1" fill="#000000"/><rect x="0" y="7" width="1" height="1" fill="#8C8C8C"/><rect x="1" y="7" width="2" height="1" fill="#B4D8F8"/><rect x="3" y="7" width="1" height="1" fill="#000000"/><rect x="4" y="7" width="1" height="1" fill="#8C8C8C"/><rect x="5" y="7" width="2" height="1" fill="#000000"/><rect x="1" y="8" width="1" height="1" fill="#8C8C8C"/><rect x="2" y="8" width="1" height="1" fill="#B4D8F8"/><rect x="3" y="8" width="1" height="1" fill="#000000"/><rect x="4" y="8" width="1" height="1" fill="#8C8C8C"/><rect x="5" y="8" width="1" height="1" fill="#000000"/><rect x="2" y="9" width="3" height="1" fill="#000000"/><rect x="3" y="10" width="1" height="1" fill="#000000"/></svg>
<div class="t" style="left:1183px;top:337px;height:19px;line-height:19px;letter-spacing:0.05px">udiLastAck</div>
<div class="t" style="left:1517px;top:338px;height:19px;line-height:19px;letter-spacing:-0.3px">UDINT</div>
<div class="t" style="left:1637px;top:337px;height:19px;line-height:19px;letter-spacing:-0.1px">1630659053</div>
<div style="left:1139px;top:375px;width:733px;height:1px;background:#E3E3E3"></div>
<div style="left:1514px;top:356px;width:1px;height:19px;background:#E8E8E8"></div>
<div style="left:1634px;top:356px;width:1px;height:19px;background:#E8E8E8"></div>
<svg style="position:absolute;left:1167px;top:360px;shape-rendering:crispEdges" width="8" height="11" viewBox="0 0 8 11"><rect x="4" y="0" width="1" height="1" fill="#8C8C8C"/><rect x="3" y="1" width="1" height="1" fill="#8C8C8C"/><rect x="4" y="1" width="1" height="1" fill="#B4D8F8"/><rect x="5" y="1" width="1" height="1" fill="#8C8C8C"/><rect x="2" y="2" width="1" height="1" fill="#8C8C8C"/><rect x="3" y="2" width="1" height="1" fill="#B4D8F8"/><rect x="4" y="2" width="1" height="1" fill="#0000FF"/><rect x="5" y="2" width="1" height="1" fill="#B4D8F8"/><rect x="6" y="2" width="1" height="1" fill="#8C8C8C"/><rect x="1" y="3" width="1" height="1" fill="#8C8C8C"/><rect x="2" y="3" width="1" height="1" fill="#B4D8F8"/><rect x="3" y="3" width="1" height="1" fill="#0000FF"/><rect x="4" y="3" width="1" height="1" fill="#B4D8F8"/><rect x="5" y="3" width="1" height="1" fill="#0000FF"/><rect x="6" y="3" width="1" height="1" fill="#B4D8F8"/><rect x="7" y="3" width="1" height="1" fill="#000000"/><rect x="0" y="4" width="1" height="1" fill="#8C8C8C"/><rect x="1" y="4" width="1" height="1" fill="#B4D8F8"/><rect x="2" y="4" width="1" height="1" fill="#0000FF"/><rect x="3" y="4" width="1" height="1" fill="#B4D8F8"/><rect x="4" y="4" width="1" height="1" fill="#0000FF"/><rect x="5" y="4" width="1" height="1" fill="#B4D8F8"/><rect x="6" y="4" width="2" height="1" fill="#000000"/><rect x="0" y="5" width="1" height="1" fill="#8C8C8C"/><rect x="1" y="5" width="2" height="1" fill="#B4D8F8"/><rect x="3" y="5" width="1" height="1" fill="#0000FF"/><rect x="4" y="5" width="1" height="1" fill="#B4D8F8"/><rect x="5" y="5" width="1" height="1" fill="#000000"/><rect x="6" y="5" width="1" height="1" fill="#8C8C8C"/><rect x="7" y="5" width="1" height="1" fill="#000000"/><rect x="0" y="6" width="1" height="1" fill="#8C8C8C"/><rect x="1" y="6" width="3" height="1" fill="#B4D8F8"/><rect x="4" y="6" width="1" height="1" fill="#000000"/><rect x="5" y="6" width="1" height="1" fill="#8C8C8C"/><rect x="6" y="6" width="2" height="1" fill="#000000"/><rect x="0" y="7" width="1" height="1" fill="#8C8C8C"/><rect x="1" y="7" width="2" height="1" fill="#B4D8F8"/><rect x="3" y="7" width="1" height="1" fill="#000000"/><rect x="4" y="7" width="1" height="1" fill="#8C8C8C"/><rect x="5" y="7" width="2" height="1" fill="#000000"/><rect x="1" y="8" width="1" height="1" fill="#8C8C8C"/><rect x="2" y="8" width="1" height="1" fill="#B4D8F8"/><rect x="3" y="8" width="1" height="1" fill="#000000"/><rect x="4" y="8" width="1" height="1" fill="#8C8C8C"/><rect x="5" y="8" width="1" height="1" fill="#000000"/><rect x="2" y="9" width="3" height="1" fill="#000000"/><rect x="3" y="10" width="1" height="1" fill="#000000"/></svg>
<div class="t" style="left:1183px;top:356px;height:19px;line-height:19px;letter-spacing:0.05px">udiCounter</div>
<div class="t" style="left:1517px;top:357px;height:19px;line-height:19px;letter-spacing:-0.3px">UDINT</div>
<div class="t" style="left:1637px;top:356px;height:19px;line-height:19px;letter-spacing:-0.1px">0</div>
<div style="left:1889px;top:45px;width:27px;height:333px;background:linear-gradient(to right,#FBFBF7,#E9E8DD 45%,#C9C6AE);border-left:1px solid #9A9A9A;border-right:1px solid #8C8C8C"></div>
<div style="left:1890px;top:46px;width:21px;height:20px;background:#E3E6F2;border:1px solid #4F7FD0"></div>
<svg style="position:absolute;left:1894px;top:50px;" width="13" height="12" viewBox="0 0 13 12"><path d="M1 1.5h6M3 3.5h7M3 5.5h5M3 7.5h7M3 9.5h5" stroke="#222" stroke-width="1"/><path d="M1 1.5h5" stroke="#00f"/><path d="M3 7.5h8" stroke="#0a0"/><path d="M1 11h9" stroke="#00f" stroke-width="1.2"/></svg>
<svg style="position:absolute;left:1894px;top:71px;" width="15" height="15" viewBox="0 0 15 15"><rect x="0.5" y="0.5" width="13" height="13" fill="#fff" stroke="#000"/><rect x="1" y="1" width="12" height="2" fill="#00f"/><path d="M0.5 6h13M0.5 9h13M5 3v10.5M9 3v10.5" stroke="#999"/></svg>
<div style="left:1138px;top:361px;width:734px;height:16px;background:#F0F0F0"></div>
<div style="left:1155px;top:361px;width:392px;height:16px;background:#CDCDCD"></div>
<svg style="position:absolute;left:1144px;top:365px;" width="6" height="8" viewBox="0 0 6 8"><path d="M4.8 0.7 L1.5 4 L4.8 7.3" fill="none" stroke="#5A5A5A" stroke-width="2"/></svg>
<svg style="position:absolute;left:1860px;top:365px;" width="6" height="8" viewBox="0 0 6 8"><path d="M1.2 0.7 L4.5 4 L1.2 7.3" fill="none" stroke="#5A5A5A" stroke-width="2"/></svg>
<div style="left:1872px;top:46px;width:17px;height:315px;background:#F0F0F0"></div>
<div style="left:1873px;top:102px;width:15px;height:190px;background:#CDCDCD"></div>
<svg style="position:absolute;left:1876px;top:52px;" width="8" height="6" viewBox="0 0 8 6"><path d="M0.7 4.8 L4 1.5 L7.3 4.8" fill="none" stroke="#5A5A5A" stroke-width="2"/></svg>
<svg style="position:absolute;left:1876px;top:349px;" width="8" height="6" viewBox="0 0 8 6"><path d="M0.7 1.2 L4 4.5 L7.3 1.2" fill="none" stroke="#5A5A5A" stroke-width="2"/></svg>
<div style="left:1137px;top:379px;width:779px;height:2px;background:#7C8491"></div>
<div style="left:1137px;top:381px;width:779px;height:4px;background:#F0F0F0"></div>
<div style="left:1137px;top:385px;width:779px;height:1px;background:#A0A0A0"></div>
<svg style="position:absolute;left:1514px;top:381px;" width="10" height="5" viewBox="0 0 10 5"><path d="M0 5 L5 0 L10 5 Z" fill="#A0A0A0"/></svg>
<svg style="position:absolute;left:1530px;top:381px;" width="10" height="5" viewBox="0 0 10 5"><path d="M0 0 L10 0 L5 5 Z" fill="#A0A0A0"/></svg>
<div style="left:1137px;top:386px;width:779px;height:517px;background:#fff"></div>
<div style="left:1184px;top:386px;width:2px;height:517px;background:#707070"></div>
<div style="left:1137px;top:386px;width:761px;height:517px;overflow:hidden;">
<div class="c" style="left:6px;top:0px;width:40px;text-align:right;color:#3C78B4;font-size:11.3px;letter-spacing:0px;padding-top:1px">4</div>
<svg style="position:absolute;left:52px;top:3px;" width="11" height="11" viewBox="0 0 11 11"><circle cx="5.5" cy="5.5" r="4.8" fill="#D2D2D2"/></svg>
<div class="c" style="left:71px;top:0px"><span style="color:#000000">fbTcpClient</span><span style="color:#6A10F0">(</span><span style="color:#000000">xEnable</span></div>
<div class="bb" style="left:205px;top:3px;background:#0000FF">TRUE</div>
<div class="c" style="left:240px;top:0px"> <span style="color:#0000FF">:</span><span style="color:#0000FF">=</span> <span style="color:#000000">xConnect</span></div>
<div class="bb" style="left:325px;top:3px;background:#0000FF">TRUE</div>
<div class="c" style="left:360px;top:0px"><span style="color:#0000FF">,</span> <span style="color:#000000">itfIPAddress</span> <span style="color:#0000FF">:</span><span style="color:#0000FF">=</span> <span style="color:#000000">ipAddress</span><span style="color:#0000FF">,</span> <span style="color:#000000">uiPort</span></div>
<div class="ob" style="left:605px;top:2px;width:37px;">50001</div>
<div class="c" style="left:641px;top:0px"> <span style="color:#0000FF">:</span><span style="color:#0000FF">=</span> <span style="color:#000000">gvlSetting</span><span style="color:#0000FF">.</span><span style="color:#000000">gc_uiPort</span><span style="color:#0000FF">,</span> <span style="color:#000000">ctTimeOut</span> <span style="color:#0000FF">:</span><span style="color:#0000FF">=</span> <span style="color:#808000">0</span></div>
<div class="c" style="left:6px;top:17px;width:40px;text-align:right;color:#3C78B4;font-size:11.3px;letter-spacing:0px;padding-top:1px">5</div>
<div class="c" style="left:6px;top:34px;width:40px;text-align:right;color:#3C78B4;font-size:11.3px;letter-spacing:0px;padding-top:1px">6</div>
<svg style="position:absolute;left:52px;top:37px;" width="11" height="11" viewBox="0 0 11 11"><circle cx="5.5" cy="5.5" r="4.8" fill="#D2D2D2"/></svg>
<div class="c" style="left:71px;top:34px"><span style="color:#000000">fbBlink</span><span style="color:#6A10F0">(</span><span style="color:#000000">ENABLE</span></div>
<div class="bb" style="left:170px;top:37px;background:#0000FF">TRUE</div>
<div class="c" style="left:205px;top:34px"> <span style="color:#0000FF">:</span><span style="color:#0000FF">=</span> <span style="color:#808000">TRUE</span><span style="color:#6A10F0">)</span><span style="color:#0000FF">;</span></div>
<div class="c" style="left:6px;top:51px;width:40px;text-align:right;color:#3C78B4;font-size:11.3px;letter-spacing:0px;padding-top:1px">7</div>
<svg style="position:absolute;left:2px;top:55px;" width="10" height="10" viewBox="0 0 10 10"><rect x="0.5" y="0.5" width="8" height="8" fill="none" stroke="#3C7AB6" stroke-width="1"/><line x1="0.5" y1="4.5" x2="8.5" y2="4.5" stroke="#3C7AB6" stroke-width="1"/></svg>
<svg style="position:absolute;left:52px;top:54px;" width="11" height="11" viewBox="0 0 11 11"><circle cx="5.5" cy="5.5" r="4.8" fill="#D2D2D2"/></svg>
<div class="c" style="left:71px;top:51px"><span style="color:#0000E8;font-weight:bold">IF</span> <span style="color:#6A10F0">(</span><span style="color:#000000">fbBlink</span><span style="color:#0000FF">.</span><span style="color:#000000">OUT</span></div>
<div class="bb" style="left:177px;top:54px;background:#0000FF">TRUE</div>
<div class="c" style="left:212px;top:51px"> <span style="color:#0000E8;font-weight:bold">AND</span> <span style="color:#6A10F0">(</span><span style="color:#000000">xBlink</span></div>
<div class="bb" style="left:297px;top:54px;background:#0000FF">TRUE</div>
<div class="c" style="left:332px;top:51px"> <span style="color:#0000FF">&lt;</span><span style="color:#0000FF">&gt;</span> <span style="color:#000000">fbBlink</span><span style="color:#0000FF">.</span><span style="color:#000000">OUT</span></div>
<div class="bb" style="left:438px;top:54px;background:#0000FF">TRUE</div>
<div class="c" style="left:473px;top:51px"><span style="color:#6A10F0">)</span> <span style="color:#6A10F0">)</span> <span style="color:#0000E8;font-weight:bold">THEN</span></div>
<div class="c" style="left:6px;top:68px;width:40px;text-align:right;color:#3C78B4;font-size:11.3px;letter-spacing:0px;padding-top:1px">8</div>
<svg style="position:absolute;left:52px;top:71px;" width="11" height="11" viewBox="0 0 11 11"><circle cx="5.5" cy="5.5" r="4.8" fill="#D2D2D2"/></svg>
<div class="c" style="left:71px;top:68px">    <span style="color:#000000">udiVal</span></div>
<div class="ob" style="left:141px;top:70px;width:67px;">1102</div>
<div class="c" style="left:207px;top:68px"> <span style="color:#0000FF">:</span><span style="color:#0000FF">=</span> <span style="color:#000000">udiVal</span></div>
<div class="ob" style="left:277px;top:70px;width:67px;">1102</div>
<div class="c" style="left:343px;top:68px"> <span style="color:#0000FF">+</span> <span style="color:#808000">1</span><span style="color:#0000FF">;</span></div>
<div class="c" style="left:6px;top:85px;width:40px;text-align:right;color:#3C78B4;font-size:11.3px;letter-spacing:0px;padding-top:1px">9</div>
<svg style="position:absolute;left:2px;top:89px;" width="10" height="10" viewBox="0 0 10 10"><rect x="0.5" y="0.5" width="8" height="8" fill="none" stroke="#3C7AB6" stroke-width="1"/><line x1="0.5" y1="4.5" x2="8.5" y2="4.5" stroke="#3C7AB6" stroke-width="1"/></svg>
<svg style="position:absolute;left:52px;top:88px;" width="11" height="11" viewBox="0 0 11 11"><circle cx="5.5" cy="5.5" r="4.8" fill="#D2D2D2"/></svg>
<div class="c" style="left:71px;top:85px">    <span style="color:#0000E8;font-weight:bold">FOR</span> <span style="color:#000000">iIndex</span></div>
<div class="ob" style="left:169px;top:87px;width:43px;">16</div>
<div class="c" style="left:211px;top:85px"> <span style="color:#0000FF">:</span><span style="color:#0000FF">=</span> <span style="color:#808000">0</span> <span style="color:#0000E8;font-weight:bold">TO</span> <span style="color:#000000">gvlSetting</span><span style="color:#0000FF">.</span><span style="color:#000000">gc_wMaxTelegram</span></div>
<svg style="position:absolute;left:457px;top:88px;" width="11" height="11" viewBox="0 0 11 11"><polygon points="10.78,7.69 7.69,10.78 3.31,10.78 0.22,7.69 0.22,3.31 3.31,0.22 7.69,0.22 10.78,3.31" fill="#007A00"/><text x="5.7" y="9.13" font-family="Liberation Sans" font-size="8.8" fill="#fff" text-anchor="middle">C</text></svg>
<div class="ob" style="left:468px;top:87px;width:43px;">15</div>
<div class="c" style="left:510px;top:85px"> <span style="color:#0000E8;font-weight:bold">DO</span></div>
<div class="c" style="left:6px;top:102px;width:40px;text-align:right;color:#3C78B4;font-size:11.3px;letter-spacing:0px;padding-top:1px">10</div>
<svg style="position:absolute;left:52px;top:105px;" width="11" height="11" viewBox="0 0 11 11"><circle cx="5.5" cy="5.5" r="4.8" fill="#D2D2D2"/></svg>
<div class="c" style="left:71px;top:102px">        <span style="color:#000000">abyTx</span><span style="color:#6A10F0">[</span><span style="color:#000000">iIndex</span></div>
<div class="ob" style="left:211px;top:104px;width:43px;">16</div>
<div class="c" style="left:253px;top:102px"><span style="color:#6A10F0">]</span></div>
<div class="ob" style="left:260px;top:104px;width:25px;">???</div>
<div class="c" style="left:284px;top:102px"> <span style="color:#0000FF">:</span><span style="color:#0000FF">=</span> <span style="color:#808000">0</span><span style="color:#0000FF">;</span></div>
<div class="c" style="left:6px;top:119px;width:40px;text-align:right;color:#3C78B4;font-size:11.3px;letter-spacing:0px;padding-top:1px">11</div>
<div class="c" style="left:71px;top:119px">    <span style="color:#0000E8;font-weight:bold">END_FOR</span></div>
<div class="c" style="left:6px;top:136px;width:40px;text-align:right;color:#3C78B4;font-size:11.3px;letter-spacing:0px;padding-top:1px">12</div>
<div class="c" style="left:71px;top:136px">    <span style="color:#008080;font-style:italic">// 'WD: ' = Watchdog-Telegram</span></div>
<div class="c" style="left:6px;top:153px;width:40px;text-align:right;color:#3C78B4;font-size:11.3px;letter-spacing:0px;padding-top:1px">13</div>
<svg style="position:absolute;left:52px;top:156px;" width="11" height="11" viewBox="0 0 11 11"><circle cx="5.5" cy="5.5" r="4.8" fill="#D2D2D2"/></svg>
<div class="c" style="left:71px;top:153px">    <span style="color:#000000">abyTx</span><span style="color:#6A10F0">[</span><span style="color:#808000">0</span><span style="color:#6A10F0">]</span></div>
<div class="ob" style="left:155px;top:155px;width:25px;">87</div>
<div class="c" style="left:179px;top:153px"> <span style="color:#0000FF">:</span><span style="color:#0000FF">=</span> <span style="color:#808000">87</span><span style="color:#0000FF">;</span></div>
<div class="c" style="left:6px;top:170px;width:40px;text-align:right;color:#3C78B4;font-size:11.3px;letter-spacing:0px;padding-top:1px">14</div>
<svg style="position:absolute;left:52px;top:173px;" width="11" height="11" viewBox="0 0 11 11"><circle cx="5.5" cy="5.5" r="4.8" fill="#D2D2D2"/></svg>
<div class="c" style="left:71px;top:170px">    <span style="color:#000000">abyTx</span><span style="color:#6A10F0">[</span><span style="color:#808000">1</span><span style="color:#6A10F0">]</span></div>
<div class="ob" style="left:155px;top:172px;width:25px;">68</div>
<div class="c" style="left:179px;top:170px"> <span style="color:#0000FF">:</span><span style="color:#0000FF">=</span> <span style="color:#808000">68</span><span style="color:#0000FF">;</span></div>
<div class="c" style="left:6px;top:187px;width:40px;text-align:right;color:#3C78B4;font-size:11.3px;letter-spacing:0px;padding-top:1px">15</div>
<svg style="position:absolute;left:52px;top:190px;" width="11" height="11" viewBox="0 0 11 11"><circle cx="5.5" cy="5.5" r="4.8" fill="#D2D2D2"/></svg>
<div class="c" style="left:71px;top:187px">    <span style="color:#000000">abyTx</span><span style="color:#6A10F0">[</span><span style="color:#808000">2</span><span style="color:#6A10F0">]</span></div>
<div class="ob" style="left:155px;top:189px;width:25px;">58</div>
<div class="c" style="left:179px;top:187px"> <span style="color:#0000FF">:</span><span style="color:#0000FF">=</span> <span style="color:#808000">58</span><span style="color:#0000FF">;</span></div>
<div class="c" style="left:6px;top:204px;width:40px;text-align:right;color:#3C78B4;font-size:11.3px;letter-spacing:0px;padding-top:1px">16</div>
<svg style="position:absolute;left:52px;top:207px;" width="11" height="11" viewBox="0 0 11 11"><circle cx="5.5" cy="5.5" r="4.8" fill="#D2D2D2"/></svg>
<div class="c" style="left:71px;top:204px">    <span style="color:#000000">abyTx</span><span style="color:#6A10F0">[</span><span style="color:#808000">3</span><span style="color:#6A10F0">]</span></div>
<div class="ob" style="left:155px;top:206px;width:25px;">32</div>
<div class="c" style="left:179px;top:204px"> <span style="color:#0000FF">:</span><span style="color:#0000FF">=</span> <span style="color:#808000">32</span><span style="color:#0000FF">;</span></div>
<div class="c" style="left:6px;top:221px;width:40px;text-align:right;color:#3C78B4;font-size:11.3px;letter-spacing:0px;padding-top:1px">17</div>
<div class="c" style="left:71px;top:221px">    <span style="color:#008080;font-style:italic">// Counter</span></div>
<div class="c" style="left:6px;top:238px;width:40px;text-align:right;color:#3C78B4;font-size:11.3px;letter-spacing:0px;padding-top:1px">18</div>
<svg style="position:absolute;left:52px;top:241px;" width="11" height="11" viewBox="0 0 11 11"><circle cx="5.5" cy="5.5" r="4.8" fill="#D2D2D2"/></svg>
<div class="c" style="left:71px;top:238px">    <span style="color:#000000">pudiVal</span></div>
<div class="ob" style="left:148px;top:240px;width:121px;font-size:10px;letter-spacing:-0.55px">16#000001E8631E6187</div>
<div class="c" style="left:268px;top:238px"> <span style="color:#0000FF">:</span><span style="color:#0000FF">=</span> <span style="color:#0000E8;font-weight:bold">ADR</span><span style="color:#6A10F0">(</span><span style="color:#000000">udiVal</span></div>
<div class="ob" style="left:366px;top:240px;width:67px;">1102</div>
<div class="c" style="left:432px;top:238px"><span style="color:#6A10F0">)</span><span style="color:#0000FF">;</span></div>
<div class="c" style="left:6px;top:255px;width:40px;text-align:right;color:#3C78B4;font-size:11.3px;letter-spacing:0px;padding-top:1px">19</div>
<svg style="position:absolute;left:52px;top:258px;" width="11" height="11" viewBox="0 0 11 11"><circle cx="5.5" cy="5.5" r="4.8" fill="#D2D2D2"/></svg>
<div class="c" style="left:71px;top:255px">    <span style="color:#000000">abyTx</span><span style="color:#6A10F0">[</span><span style="color:#808000">4</span><span style="color:#6A10F0">]</span></div>
<div class="ob" style="left:155px;top:257px;width:25px;">78</div>
<div class="c" style="left:179px;top:255px"> <span style="color:#0000FF">:</span><span style="color:#0000FF">=</span> <span style="color:#000000">pudiVal</span><span style="color:#0000FF">^</span></div>
<div class="ob" style="left:263px;top:257px;width:25px;">0</div>
<div class="c" style="left:287px;top:255px"><span style="color:#0000FF">;</span></div>
<div class="c" style="left:6px;top:272px;width:40px;text-align:right;color:#3C78B4;font-size:11.3px;letter-spacing:0px;padding-top:1px">20</div>
<svg style="position:absolute;left:52px;top:275px;" width="11" height="11" viewBox="0 0 11 11"><circle cx="5.5" cy="5.5" r="4.8" fill="#D2D2D2"/></svg>
<div class="c" style="left:71px;top:272px">    <span style="color:#000000">pudiVal</span></div>
<div class="ob" style="left:148px;top:274px;width:121px;font-size:10px;letter-spacing:-0.55px">16#000001E8631E6187</div>
<div class="c" style="left:268px;top:272px"> <span style="color:#0000FF">:</span><span style="color:#0000FF">=</span> <span style="color:#000000">pudiVal</span></div>
<div class="ob" style="left:345px;top:274px;width:121px;font-size:10px;letter-spacing:-0.55px">16#000001E8631E6187</div>
<div class="c" style="left:465px;top:272px"> <span style="color:#0000FF">+</span> <span style="color:#808000">1</span><span style="color:#0000FF">;</span></div>
<div class="c" style="left:6px;top:289px;width:40px;text-align:right;color:#3C78B4;font-size:11.3px;letter-spacing:0px;padding-top:1px">21</div>
<svg style="position:absolute;left:52px;top:292px;" width="11" height="11" viewBox="0 0 11 11"><circle cx="5.5" cy="5.5" r="4.8" fill="#D2D2D2"/></svg>
<div class="c" style="left:71px;top:289px">    <span style="color:#000000">abyTx</span><span style="color:#6A10F0">[</span><span style="color:#808000">5</span><span style="color:#6A10F0">]</span></div>
<div class="ob" style="left:155px;top:291px;width:25px;">4</div>
<div class="c" style="left:179px;top:289px"> <span style="color:#0000FF">:</span><span style="color:#0000FF">=</span> <span style="color:#000000">pudiVal</span><span style="color:#0000FF">^</span></div>
<div class="ob" style="left:263px;top:291px;width:25px;">0</div>
<div class="c" style="left:287px;top:289px"><span style="color:#0000FF">;</span></div>
<div class="c" style="left:6px;top:306px;width:40px;text-align:right;color:#3C78B4;font-size:11.3px;letter-spacing:0px;padding-top:1px">22</div>
<svg style="position:absolute;left:52px;top:309px;" width="11" height="11" viewBox="0 0 11 11"><circle cx="5.5" cy="5.5" r="4.8" fill="#D2D2D2"/></svg>
<div class="c" style="left:71px;top:306px">    <span style="color:#000000">pudiVal</span></div>
<div class="ob" style="left:148px;top:308px;width:121px;font-size:10px;letter-spacing:-0.55px">16#000001E8631E6187</div>
<div class="c" style="left:268px;top:306px"> <span style="color:#0000FF">:</span><span style="color:#0000FF">=</span> <span style="color:#000000">pudiVal</span></div>
<div class="ob" style="left:345px;top:308px;width:121px;font-size:10px;letter-spacing:-0.55px">16#000001E8631E6187</div>
<div class="c" style="left:465px;top:306px"> <span style="color:#0000FF">+</span> <span style="color:#808000">1</span><span style="color:#0000FF">;</span></div>
<div class="c" style="left:6px;top:323px;width:40px;text-align:right;color:#3C78B4;font-size:11.3px;letter-spacing:0px;padding-top:1px">23</div>
<svg style="position:absolute;left:52px;top:326px;" width="11" height="11" viewBox="0 0 11 11"><circle cx="5.5" cy="5.5" r="4.8" fill="#D2D2D2"/></svg>
<div class="c" style="left:71px;top:323px">    <span style="color:#000000">abyTx</span><span style="color:#6A10F0">[</span><span style="color:#808000">6</span><span style="color:#6A10F0">]</span></div>
<div class="ob" style="left:155px;top:325px;width:25px;">0</div>
<div class="c" style="left:179px;top:323px"> <span style="color:#0000FF">:</span><span style="color:#0000FF">=</span> <span style="color:#000000">pudiVal</span><span style="color:#0000FF">^</span></div>
<div class="ob" style="left:263px;top:325px;width:25px;">0</div>
<div class="c" style="left:287px;top:323px"><span style="color:#0000FF">;</span></div>
<div class="c" style="left:6px;top:340px;width:40px;text-align:right;color:#3C78B4;font-size:11.3px;letter-spacing:0px;padding-top:1px">24</div>
<svg style="position:absolute;left:52px;top:343px;" width="11" height="11" viewBox="0 0 11 11"><circle cx="5.5" cy="5.5" r="4.8" fill="#D2D2D2"/></svg>
<div class="c" style="left:71px;top:340px">    <span style="color:#000000">pudiVal</span></div>
<div class="ob" style="left:148px;top:342px;width:121px;font-size:10px;letter-spacing:-0.55px">16#000001E8631E6187</div>
<div class="c" style="left:268px;top:340px"> <span style="color:#0000FF">:</span><span style="color:#0000FF">=</span> <span style="color:#000000">pudiVal</span></div>
<div class="ob" style="left:345px;top:342px;width:121px;font-size:10px;letter-spacing:-0.55px">16#000001E8631E6187</div>
<div class="c" style="left:465px;top:340px"> <span style="color:#0000FF">+</span> <span style="color:#808000">1</span><span style="color:#0000FF">;</span></div>
<div class="c" style="left:6px;top:357px;width:40px;text-align:right;color:#3C78B4;font-size:11.3px;letter-spacing:0px;padding-top:1px">25</div>
<svg style="position:absolute;left:52px;top:360px;" width="11" height="11" viewBox="0 0 11 11"><circle cx="5.5" cy="5.5" r="4.8" fill="#D2D2D2"/></svg>
<div class="c" style="left:71px;top:357px">    <span style="color:#000000">abyTx</span><span style="color:#6A10F0">[</span><span style="color:#808000">7</span><span style="color:#6A10F0">]</span></div>
<div class="ob" style="left:155px;top:359px;width:25px;">0</div>
<div class="c" style="left:179px;top:357px"> <span style="color:#0000FF">:</span><span style="color:#0000FF">=</span> <span style="color:#000000">pudiVal</span><span style="color:#0000FF">^</span></div>
<div class="ob" style="left:263px;top:359px;width:25px;">0</div>
<div class="c" style="left:287px;top:357px"><span style="color:#0000FF">;</span></div>
<div class="c" style="left:6px;top:374px;width:40px;text-align:right;color:#3C78B4;font-size:11.3px;letter-spacing:0px;padding-top:1px">26</div>
<svg style="position:absolute;left:52px;top:377px;" width="11" height="11" viewBox="0 0 11 11"><circle cx="5.5" cy="5.5" r="4.8" fill="#D2D2D2"/></svg>
<div class="c" style="left:71px;top:374px">    <span style="color:#000000">fbTcpWrite</span><span style="color:#6A10F0">(</span><span style="color:#000000">xExecute</span></div>
<div class="bb" style="left:233px;top:377px;background:#000000">FALSE</div>
<div class="c" style="left:268px;top:374px"> <span style="color:#0000FF">:</span><span style="color:#0000FF">=</span> <span style="color:#000000">xConnect</span></div>
<div class="bb" style="left:353px;top:377px;background:#0000FF">TRUE</div>
<div class="c" style="left:388px;top:374px"><span style="color:#0000FF">,</span><span style="color:#000000">itfConnection</span> <span style="color:#0000FF">:</span><span style="color:#0000FF">=</span> <span style="color:#000000">fbTcpClient</span><span style="color:#0000FF">.</span><span style="color:#000000">itfConnection</span><span style="color:#0000FF">,</span> <span style="color:#000000">udiTimeOut</span> <span style="color:#0000FF">:</span><span style="color:#0000FF">=</span> <span style="color:#808000">0</span></div>
<div class="c" style="left:6px;top:391px;width:40px;text-align:right;color:#3C78B4;font-size:11.3px;letter-spacing:0px;padding-top:1px">27</div>
<svg style="position:absolute;left:2px;top:395px;" width="10" height="10" viewBox="0 0 10 10"><rect x="0.5" y="0.5" width="8" height="8" fill="none" stroke="#3C7AB6" stroke-width="1"/><line x1="0.5" y1="4.5" x2="8.5" y2="4.5" stroke="#3C7AB6" stroke-width="1"/></svg>
<div class="c" style="left:71px;top:391px"><span style="color:#0000E8;font-weight:bold">ELSE</span></div>
<div class="c" style="left:6px;top:408px;width:40px;text-align:right;color:#3C78B4;font-size:11.3px;letter-spacing:0px;padding-top:1px">28</div>
<svg style="position:absolute;left:52px;top:411px;" width="11" height="11" viewBox="0 0 11 11"><circle cx="5.5" cy="5.5" r="4.8" fill="#D2D2D2"/></svg>
<div class="c" style="left:71px;top:408px">    <span style="color:#000000">fbTcpWrite</span><span style="color:#6A10F0">(</span><span style="color:#000000">xExecute</span></div>
<div class="bb" style="left:233px;top:411px;background:#000000">FALSE</div>
<div class="c" style="left:268px;top:408px"> <span style="color:#0000FF">:</span><span style="color:#0000FF">=</span> <span style="color:#808000">FALSE</span><span style="color:#6A10F0">)</span><span style="color:#0000FF">;</span></div>
<div class="c" style="left:6px;top:425px;width:40px;text-align:right;color:#3C78B4;font-size:11.3px;letter-spacing:0px;padding-top:1px">29</div>
<div class="c" style="left:71px;top:425px"><span style="color:#0000E8;font-weight:bold">END_IF</span></div>
<div class="c" style="left:6px;top:442px;width:40px;text-align:right;color:#3C78B4;font-size:11.3px;letter-spacing:0px;padding-top:1px">30</div>
<div class="c" style="left:6px;top:459px;width:40px;text-align:right;color:#3C78B4;font-size:11.3px;letter-spacing:0px;padding-top:1px">31</div>
<svg style="position:absolute;left:52px;top:462px;" width="11" height="11" viewBox="0 0 11 11"><circle cx="5.5" cy="5.5" r="4.8" fill="#D2D2D2"/></svg>
<div class="c" style="left:71px;top:459px"><span style="color:#000000">xBlink</span></div>
<div class="bb" style="left:114px;top:462px;background:#0000FF">TRUE</div>
<div class="c" style="left:149px;top:459px"> <span style="color:#0000FF">:</span><span style="color:#0000FF">=</span> <span style="color:#000000">fbBlink</span><span style="color:#0000FF">.</span><span style="color:#000000">OUT</span></div>
<div class="bb" style="left:255px;top:462px;background:#0000FF">TRUE</div>
<div class="c" style="left:290px;top:459px"><span style="color:#0000FF">;</span></div>
<div class="c" style="left:6px;top:476px;width:40px;text-align:right;color:#3C78B4;font-size:11.3px;letter-spacing:0px;padding-top:1px">32</div>
<div class="c" style="left:6px;top:493px;width:40px;text-align:right;color:#3C78B4;font-size:11.3px;letter-spacing:0px;padding-top:1px">33</div>
<svg style="position:absolute;left:52px;top:496px;" width="11" height="11" viewBox="0 0 11 11"><circle cx="5.5" cy="5.5" r="4.8" fill="#D2D2D2"/></svg>
<div class="c" style="left:71px;top:493px"><span style="color:#000000">fbTcpRead</span><span style="color:#6A10F0">(</span><span style="color:#000000">xEnable</span></div>
<div class="bb" style="left:191px;top:496px;background:#0000FF">TRUE</div>
<div class="c" style="left:226px;top:493px"> <span style="color:#0000FF">:</span><span style="color:#0000FF">=</span> <span style="color:#000000">xRead</span></div>
<div class="bb" style="left:290px;top:496px;background:#0000FF">TRUE</div>
<div class="c" style="left:325px;top:493px"> <span style="color:#0000E8;font-weight:bold">AND</span> <span style="color:#000000">xConnect</span></div>
<div class="bb" style="left:417px;top:496px;background:#0000FF">TRUE</div>
<div class="c" style="left:452px;top:493px"><span style="color:#0000FF">,</span> <span style="color:#000000">itfConnection</span> <span style="color:#0000FF">:</span><span style="color:#0000FF">=</span> <span style="color:#000000">fbTcpClient</span><span style="color:#0000FF">.</span><span style="color:#000000">itfConnection</span></div>
<div class="c" style="left:6px;top:510px;width:40px;text-align:right;color:#3C78B4;font-size:11.3px;letter-spacing:0px;padding-top:1px">34</div>
</div>
<div style="left:1898px;top:386px;width:18px;height:517px;background:#F0F0F0"></div>
<div style="left:1899px;top:427px;width:16px;height:244px;background:#CDCDCD"></div>
<svg style="position:absolute;left:1903px;top:392px;" width="8" height="6" viewBox="0 0 8 6"><path d="M0.7 4.8 L4 1.5 L7.3 4.8" fill="none" stroke="#5A5A5A" stroke-width="2"/></svg>
<svg style="position:absolute;left:1903px;top:891px;" width="8" height="6" viewBox="0 0 8 6"><path d="M0.7 1.2 L4 4.5 L7.3 1.2" fill="none" stroke="#5A5A5A" stroke-width="2"/></svg>
<div style="left:1830px;top:881px;width:48px;height:20px;background:#F0F0F0;border:1px solid #A0A0A0"></div>
<div class="t" style="left:1838px;top:881px;height:19px;line-height:19px;font-size:11px">100 %</div>
<div style="left:1878px;top:881px;width:20px;height:20px;background:#F0F0F0;border:1px solid #A0A0A0"></div>
<svg style="position:absolute;left:1881px;top:884px;" width="15" height="15" viewBox="0 0 15 15"><rect x="1" y="4.5" width="8" height="9" fill="#ccc" stroke="#000" stroke-width="1.3"/><circle cx="8" cy="5.5" r="4" fill="#dff" fill-opacity="0.5" stroke="#000" stroke-width="1.3"/><path d="M11 8.5 L14.5 13" stroke="#000" stroke-width="2"/></svg>
<div style="left:1137px;top:903px;width:763px;height:13px;background:#F0F0F0"></div>
<div style="left:1155px;top:903px;width:331px;height:13px;background:#CDCDCD"></div>
<svg style="position:absolute;left:1143px;top:905px;" width="6" height="8" viewBox="0 0 6 8"><path d="M4.8 0.7 L1.5 4 L4.8 7.3" fill="none" stroke="#5A5A5A" stroke-width="2"/></svg>
<svg style="position:absolute;left:1888px;top:905px;" width="6" height="8" viewBox="0 0 6 8"><path d="M1.2 0.7 L4.5 4 L1.2 7.3" fill="none" stroke="#5A5A5A" stroke-width="2"/></svg>
<div style="left:1915px;top:386px;width:1px;height:530px;background:#A0A0A0"></div></body></html>
